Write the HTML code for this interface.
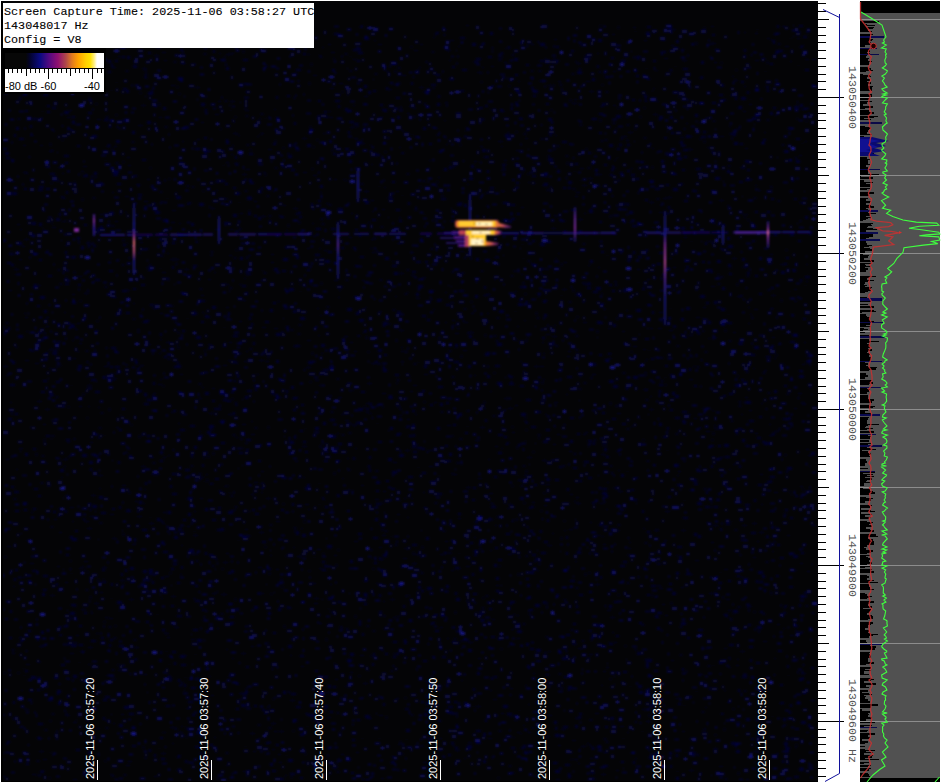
<!DOCTYPE html><html><head><meta charset="utf-8"><style>html,body{margin:0;padding:0;background:#fff;}body{width:941px;height:783px;position:relative;overflow:hidden;}.mono{font-family:"Liberation Mono",monospace;}.sans{font-family:"Liberation Sans",sans-serif;}.ab{position:absolute;white-space:pre;}svg{position:absolute;left:0;top:0;}</style></head><body><svg width="941" height="783" viewBox="0 0 941 783"><defs><filter id="bl" x="-10%" y="-10%" width="120%" height="120%"><feGaussianBlur stdDeviation="0.8"/></filter><filter id="bl2" x="-50%" y="-50%" width="200%" height="200%"><feGaussianBlur stdDeviation="0.8"/></filter></defs><rect x="1" y="1" width="817" height="781" fill="#000"/><rect x="3" y="1" width="815" height="780" fill="#040406"/><defs><clipPath id="sc"><rect x="3" y="1" width="815" height="780"/></clipPath></defs><g clip-path="url(#sc)"><g filter="url(#bl)"><path fill="#05052e" d="M334 179h3v1h-3zM551 121h2v3h-2zM522 244h1v1h-1zM74 271h1v3h-1zM50 595h5v1h-5zM150 578h1v3h-1zM718 274h1v3h-1zM509 376h4v2h-4zM77 145h3v2h-3zM353 180h3v2h-3zM488 738h4v1h-4zM358 48h3v2h-3zM511 107h2v2h-2zM392 261h2v1h-2zM606 211h2v2h-2zM801 721h5v3h-5zM66 220h1v1h-1zM115 373h3v1h-3zM480 516h3v2h-3zM711 190h3v1h-3zM270 555h2v1h-2zM231 570h3v3h-3zM201 734h3v2h-3zM743 382h2v1h-2zM235 506h2v2h-2zM185 469h5v2h-5zM219 53h2v1h-2zM681 622h5v3h-5zM745 148h3v1h-3zM111 598h1v1h-1zM210 483h2v2h-2zM455 348h1v1h-1zM161 758h4v2h-4zM143 503h2v1h-2zM501 191h4v1h-4zM444 552h3v2h-3zM368 351h1v2h-1zM570 494h3v1h-3zM118 259h1v1h-1zM530 609h3v2h-3zM88 647h5v1h-5zM430 299h3v1h-3zM729 269h1v1h-1zM238 375h2v1h-2zM358 80h5v1h-5zM643 286h3v1h-3zM291 638h2v2h-2zM192 186h2v2h-2zM375 361h3v2h-3zM319 248h2v1h-2zM208 279h3v1h-3zM94 172h3v3h-3zM26 331h2v1h-2zM544 183h4v3h-4zM336 762h3v1h-3zM19 727h3v1h-3zM518 573h1v3h-1zM243 771h5v1h-5zM668 496h3v2h-3zM661 228h1v3h-1zM480 146h3v1h-3zM521 485h2v2h-2zM218 101h3v1h-3zM239 534h3v2h-3zM6 528h4v2h-4zM747 169h3v2h-3zM299 284h2v1h-2zM570 587h2v1h-2zM566 155h2v2h-2zM291 329h2v2h-2zM125 196h4v1h-4zM209 45h4v2h-4zM766 561h2v2h-2zM396 434h4v2h-4zM322 47h2v1h-2zM785 509h3v2h-3zM257 136h2v1h-2zM701 136h5v2h-5zM798 65h1v1h-1zM599 221h3v2h-3zM618 26h1v3h-1zM724 690h2v1h-2zM513 715h4v2h-4zM236 708h3v2h-3zM37 737h2v2h-2zM322 223h2v2h-2zM60 634h2v2h-2zM27 635h2v2h-2zM342 478h2v1h-2zM129 599h5v1h-5zM790 341h5v2h-5zM488 56h4v2h-4zM643 439h1v2h-1zM623 372h2v2h-2zM652 91h1v1h-1zM443 530h2v2h-2zM613 105h3v1h-3zM496 590h3v2h-3zM460 202h2v1h-2zM683 149h5v2h-5zM206 474h2v1h-2zM160 313h3v1h-3zM385 66h2v1h-2zM197 639h5v3h-5zM79 406h3v1h-3zM729 659h2v1h-2zM338 443h4v2h-4zM564 520h1v2h-1zM422 315h4v2h-4zM136 40h1v3h-1zM757 541h2v1h-2zM168 558h2v1h-2zM632 225h5v2h-5zM226 67h3v3h-3zM645 338h4v2h-4zM258 460h3v2h-3zM412 134h1v1h-1zM675 66h1v1h-1zM754 346h5v3h-5zM773 541h3v1h-3zM70 653h4v1h-4zM261 187h2v3h-2zM246 351h2v1h-2zM388 197h5v2h-5zM371 363h5v1h-5zM183 655h4v1h-4zM323 775h1v1h-1zM300 655h4v2h-4zM375 73h2v2h-2zM671 71h1v1h-1zM366 336h1v3h-1zM212 400h3v2h-3zM68 678h2v2h-2zM533 776h3v1h-3zM3 70h1v3h-1zM181 545h2v1h-2zM479 107h4v2h-4zM110 292h2v1h-2zM538 296h2v1h-2zM764 232h2v2h-2zM401 361h3v1h-3zM546 739h1v1h-1zM178 173h1v1h-1zM776 753h3v1h-3zM138 125h5v1h-5zM347 458h2v1h-2zM636 56h5v2h-5zM609 380h5v3h-5zM646 359h2v1h-2zM407 113h3v1h-3zM391 670h2v2h-2zM359 620h2v3h-2zM464 702h3v2h-3zM276 333h5v3h-5zM312 775h2v2h-2zM114 678h1v2h-1zM400 500h1v1h-1zM650 328h3v1h-3zM251 434h4v1h-4zM111 64h2v3h-2zM736 229h3v2h-3zM423 492h2v1h-2zM784 150h4v3h-4zM60 283h2v2h-2zM694 385h3v2h-3zM404 498h2v1h-2zM578 763h2v1h-2zM668 153h5v2h-5zM439 720h2v2h-2zM674 325h2v3h-2zM149 264h2v2h-2zM159 238h3v3h-3zM564 676h5v2h-5zM452 712h1v3h-1zM720 528h2v2h-2zM349 121h5v2h-5zM800 563h3v1h-3zM353 457h2v3h-2zM299 324h2v2h-2zM518 303h5v3h-5zM211 695h3v1h-3zM653 114h5v1h-5zM570 440h3v3h-3zM310 136h1v1h-1zM559 651h3v3h-3zM434 128h4v1h-4zM192 456h1v2h-1zM434 614h4v2h-4zM644 40h3v1h-3zM688 149h5v1h-5zM127 157h3v1h-3zM14 87h1v3h-1zM321 344h4v3h-4zM501 648h1v2h-1zM806 605h2v2h-2zM639 691h4v3h-4zM319 623h3v1h-3zM293 730h1v2h-1zM435 186h3v1h-3zM563 726h5v2h-5zM196 242h2v1h-2zM415 554h5v1h-5zM508 408h5v1h-5zM356 312h3v3h-3zM583 243h2v2h-2zM390 110h1v1h-1zM659 116h4v3h-4zM63 591h1v1h-1zM528 751h4v2h-4zM696 330h3v3h-3zM671 132h3v2h-3zM402 152h2v2h-2zM646 399h2v2h-2zM151 474h5v1h-5zM424 277h2v1h-2zM306 367h5v1h-5zM114 350h3v2h-3zM445 292h2v1h-2zM303 172h4v1h-4zM522 374h3v1h-3zM811 564h2v1h-2zM751 532h5v2h-5zM210 35h1v3h-1zM741 81h3v2h-3zM657 529h1v1h-1zM784 513h2v2h-2zM591 634h5v1h-5zM459 553h1v1h-1zM232 658h2v1h-2zM259 593h5v1h-5zM655 615h3v3h-3zM515 311h1v1h-1zM614 642h3v1h-3zM56 396h2v2h-2zM331 435h5v3h-5zM532 175h4v2h-4zM435 704h4v1h-4zM546 216h1v2h-1zM519 710h1v1h-1zM44 60h5v3h-5zM39 661h1v2h-1zM16 469h2v1h-2zM315 380h4v1h-4zM303 441h3v2h-3zM756 114h4v3h-4zM468 649h4v3h-4zM320 56h2v2h-2zM527 584h3v3h-3zM364 191h5v1h-5zM224 327h1v1h-1zM71 645h5v2h-5zM66 554h3v2h-3zM286 555h1v2h-1zM648 750h4v1h-4zM512 432h3v1h-3zM391 488h4v2h-4zM612 418h4v2h-4zM766 536h3v2h-3zM552 336h5v1h-5zM336 234h3v1h-3zM532 554h4v2h-4zM13 717h1v3h-1zM767 119h2v2h-2zM79 343h3v1h-3zM433 671h2v3h-2zM526 237h3v1h-3zM64 670h3v3h-3zM13 27h2v3h-2zM151 185h3v3h-3zM365 307h2v1h-2zM104 621h1v2h-1zM641 419h1v1h-1zM408 621h5v1h-5zM638 269h2v1h-2zM469 335h3v3h-3zM601 251h3v2h-3zM731 521h1v1h-1zM177 391h3v1h-3zM300 430h3v2h-3zM399 220h3v2h-3zM449 60h2v1h-2zM162 272h4v1h-4zM481 270h2v2h-2zM742 439h3v3h-3zM453 626h2v3h-2zM279 778h5v2h-5zM738 606h2v2h-2zM240 353h2v1h-2zM373 537h5v2h-5zM738 343h1v1h-1zM736 433h2v2h-2zM28 699h4v2h-4zM413 385h4v1h-4zM44 439h1v3h-1zM236 608h3v3h-3zM448 711h4v3h-4zM700 138h1v2h-1zM633 251h2v3h-2zM646 665h3v3h-3zM799 155h3v1h-3zM802 677h2v3h-2zM63 197h2v2h-2zM209 676h2v1h-2zM726 523h4v2h-4zM250 31h3v2h-3zM659 384h4v2h-4zM727 170h3v3h-3zM475 440h5v1h-5zM299 37h2v2h-2zM64 312h2v1h-2zM319 483h1v1h-1zM482 607h2v2h-2zM503 219h5v3h-5zM83 166h4v1h-4zM407 173h2v2h-2zM656 563h5v1h-5zM739 342h4v3h-4zM191 687h5v2h-5zM262 270h1v1h-1zM620 620h4v1h-4zM226 765h2v1h-2zM628 548h3v1h-3zM171 412h2v1h-2zM579 716h2v3h-2zM434 402h3v1h-3zM408 292h1v1h-1zM210 586h4v1h-4zM734 142h4v3h-4zM199 601h3v1h-3zM797 658h1v2h-1zM473 332h1v1h-1zM364 127h2v3h-2zM620 140h1v1h-1zM498 57h5v1h-5zM638 685h4v3h-4zM490 187h4v2h-4zM628 554h1v2h-1zM150 304h3v2h-3zM246 169h4v1h-4zM243 382h2v1h-2zM690 489h3v2h-3zM793 334h2v3h-2zM600 106h3v1h-3zM72 521h2v1h-2zM245 746h1v1h-1zM135 640h1v1h-1zM592 374h4v1h-4zM29 349h3v2h-3zM631 752h4v2h-4zM95 391h5v2h-5zM554 721h3v3h-3zM105 696h5v2h-5zM212 593h5v1h-5zM758 190h3v1h-3zM729 273h3v2h-3zM355 423h3v1h-3zM30 135h4v1h-4zM663 436h4v2h-4zM645 254h1v2h-1zM729 469h2v1h-2zM336 460h4v2h-4zM307 726h1v1h-1zM52 349h1v1h-1zM502 164h3v2h-3zM561 537h1v3h-1zM709 445h5v2h-5zM805 59h4v1h-4zM392 265h5v2h-5zM148 92h5v3h-5zM212 565h2v2h-2zM179 181h5v2h-5zM670 69h2v2h-2zM156 31h4v1h-4zM536 701h2v3h-2zM264 272h2v2h-2zM654 530h5v1h-5zM737 478h3v2h-3zM135 658h2v3h-2zM684 233h2v1h-2zM459 413h3v3h-3zM476 742h5v2h-5zM487 205h1v2h-1zM761 230h3v3h-3zM791 495h1v1h-1zM81 609h5v1h-5zM93 245h3v2h-3zM700 77h2v2h-2zM392 471h5v3h-5zM147 399h5v2h-5zM458 233h2v1h-2zM76 635h3v1h-3zM726 599h4v1h-4zM267 357h3v1h-3zM684 261h3v1h-3zM713 120h2v2h-2zM191 465h2v2h-2zM786 257h3v2h-3zM616 128h1v2h-1zM158 697h2v1h-2zM361 485h3v1h-3zM37 65h3v3h-3zM364 103h2v1h-2zM494 335h2v2h-2zM247 144h2v2h-2zM557 145h2v2h-2zM585 573h1v3h-1zM205 315h3v3h-3zM587 743h2v1h-2zM437 427h3v3h-3zM586 148h1v3h-1zM66 276h1v3h-1zM475 631h2v1h-2zM154 776h3v1h-3zM73 642h4v1h-4zM507 713h5v2h-5zM699 629h2v2h-2zM245 529h3v1h-3zM19 138h5v2h-5zM622 331h3v1h-3zM637 58h2v2h-2zM280 216h4v2h-4zM45 409h5v1h-5zM343 179h2v1h-2zM627 428h2v2h-2zM521 646h2v1h-2zM12 25h5v1h-5zM141 284h4v2h-4zM749 646h4v2h-4zM659 312h4v1h-4zM729 393h4v2h-4zM66 191h2v3h-2zM798 393h4v1h-4zM415 136h4v2h-4zM330 419h5v2h-5zM655 188h5v2h-5zM424 103h2v2h-2zM127 290h3v1h-3zM149 569h4v3h-4zM686 266h3v2h-3zM590 771h2v1h-2zM37 689h3v2h-3zM83 393h1v3h-1zM145 482h2v3h-2zM43 575h5v2h-5zM34 253h5v1h-5zM519 299h3v2h-3zM412 424h3v3h-3zM728 657h3v1h-3zM197 139h3v1h-3zM201 103h4v3h-4zM26 764h3v1h-3zM213 452h1v3h-1zM543 601h2v3h-2zM200 752h2v3h-2zM450 162h2v1h-2zM748 624h3v2h-3zM807 113h3v1h-3zM589 572h1v2h-1zM576 497h3v1h-3zM212 388h3v1h-3zM483 733h3v3h-3zM232 674h4v1h-4zM207 25h1v2h-1zM656 616h3v2h-3zM169 655h3v2h-3zM637 652h3v3h-3zM58 702h3v3h-3zM106 116h2v2h-2zM345 221h1v1h-1zM119 724h4v3h-4zM141 466h5v1h-5zM303 477h2v1h-2zM310 381h1v2h-1zM774 358h2v1h-2zM84 569h2v1h-2zM324 460h4v2h-4zM553 149h3v1h-3zM57 690h4v3h-4zM257 374h2v1h-2zM714 425h2v1h-2zM71 573h1v1h-1zM525 729h2v2h-2zM105 286h2v2h-2zM474 375h2v1h-2zM689 368h2v3h-2zM680 626h2v2h-2zM150 517h1v1h-1zM670 116h3v3h-3zM144 403h5v2h-5zM783 418h5v2h-5zM486 294h5v1h-5zM682 411h5v2h-5zM33 508h3v2h-3zM473 593h4v2h-4zM439 475h1v1h-1zM275 394h3v2h-3zM220 128h1v2h-1zM649 350h1v1h-1zM242 535h4v3h-4zM19 637h3v1h-3zM414 50h4v1h-4zM498 263h1v2h-1zM224 222h5v2h-5zM776 354h1v2h-1zM791 190h2v1h-2zM731 420h2v2h-2zM61 196h2v2h-2zM602 488h5v2h-5zM278 754h3v1h-3zM109 42h2v1h-2zM381 559h3v1h-3zM609 284h3v2h-3zM711 286h4v1h-4zM61 664h4v2h-4zM338 34h3v2h-3zM768 263h2v2h-2zM275 140h1v3h-1zM468 365h3v3h-3zM712 43h4v1h-4zM612 572h3v3h-3zM74 29h5v1h-5zM257 29h2v1h-2zM731 267h1v1h-1zM93 228h2v2h-2zM537 382h2v2h-2zM273 191h2v1h-2zM99 92h3v1h-3zM144 38h2v3h-2zM537 570h2v1h-2zM744 49h2v3h-2zM191 234h2v2h-2zM736 722h4v2h-4zM326 116h2v1h-2zM801 767h2v3h-2zM790 491h1v2h-1zM679 373h3v3h-3zM406 739h1v1h-1zM789 711h2v3h-2zM419 198h2v1h-2zM439 749h2v2h-2zM251 494h3v1h-3zM761 762h3v2h-3zM505 134h5v3h-5zM715 177h5v3h-5zM262 541h4v2h-4zM475 244h4v2h-4zM533 95h3v2h-3zM684 257h2v1h-2zM227 400h4v2h-4zM655 751h1v2h-1zM390 599h5v1h-5zM161 598h2v1h-2zM268 643h2v1h-2zM528 668h3v1h-3zM732 633h4v1h-4zM575 718h3v1h-3zM178 679h2v3h-2zM787 763h2v1h-2zM422 390h3v2h-3zM168 675h2v2h-2zM205 508h3v3h-3zM479 611h3v1h-3zM607 610h4v1h-4zM494 476h3v2h-3zM335 679h3v1h-3zM269 42h2v2h-2zM297 531h2v2h-2zM200 239h1v1h-1zM236 249h1v2h-1zM94 177h3v1h-3zM511 772h3v2h-3zM42 111h1v1h-1zM25 360h4v1h-4zM447 358h3v2h-3zM241 519h1v1h-1zM158 384h4v1h-4zM511 204h4v2h-4zM576 293h5v3h-5zM87 528h5v1h-5zM603 544h3v1h-3zM798 161h1v2h-1zM119 645h5v2h-5zM102 61h3v2h-3zM673 289h2v2h-2zM50 173h5v2h-5zM556 779h4v1h-4zM388 280h2v3h-2zM738 107h4v2h-4zM515 291h2v1h-2zM231 510h5v1h-5zM65 251h2v3h-2zM323 723h1v2h-1zM783 628h2v1h-2zM397 616h3v1h-3zM32 350h2v2h-2zM652 227h3v1h-3zM253 751h3v1h-3zM733 708h1v2h-1zM712 34h3v2h-3zM730 628h3v1h-3zM210 208h5v1h-5zM694 418h3v1h-3zM370 403h2v3h-2zM771 40h4v1h-4zM146 267h5v1h-5zM775 115h2v1h-2zM318 100h3v2h-3zM161 201h2v2h-2zM812 84h2v3h-2zM175 259h4v1h-4zM6 743h2v2h-2zM346 279h2v2h-2zM413 451h4v2h-4zM89 97h1v3h-1zM510 601h5v2h-5zM606 509h2v1h-2zM595 761h1v1h-1zM378 441h4v2h-4zM451 473h2v1h-2zM120 414h1v1h-1zM328 597h5v3h-5zM662 604h3v1h-3zM212 519h4v2h-4zM637 309h4v3h-4zM25 453h3v3h-3zM282 586h1v2h-1zM381 226h2v2h-2zM452 320h3v1h-3zM659 212h4v1h-4zM65 715h5v1h-5zM180 80h3v2h-3zM794 408h3v1h-3zM264 45h3v2h-3zM803 36h4v2h-4zM628 262h2v1h-2zM332 149h1v3h-1zM374 40h2v1h-2zM412 271h4v2h-4zM476 258h3v3h-3zM616 505h3v2h-3zM72 120h1v1h-1zM445 445h3v2h-3zM383 322h5v3h-5zM635 758h2v1h-2zM547 682h2v1h-2zM119 371h2v2h-2zM372 252h3v1h-3zM681 227h4v3h-4zM486 227h3v1h-3zM677 546h5v2h-5zM116 162h2v2h-2zM171 85h4v1h-4zM276 96h2v3h-2zM26 664h4v1h-4zM721 324h4v2h-4zM8 85h4v2h-4zM228 312h2v3h-2zM714 337h3v1h-3zM787 749h2v2h-2zM358 533h4v2h-4zM257 386h3v1h-3zM359 675h1v2h-1zM610 617h5v1h-5zM697 470h5v2h-5zM328 251h4v2h-4zM168 511h3v3h-3zM664 540h3v1h-3zM207 479h1v3h-1zM164 732h2v1h-2zM54 227h2v1h-2zM261 113h2v2h-2zM3 332h3v1h-3zM505 48h2v1h-2zM323 422h3v3h-3zM137 332h3v1h-3zM405 697h1v2h-1zM296 69h5v2h-5zM561 729h5v1h-5zM751 682h1v2h-1zM390 427h3v3h-3zM115 625h1v2h-1zM438 177h2v1h-2zM67 129h5v1h-5zM375 154h5v2h-5zM143 321h5v2h-5zM102 581h4v2h-4zM62 139h1v2h-1zM299 216h3v2h-3zM656 682h3v1h-3zM531 532h2v1h-2zM327 545h5v3h-5zM411 498h2v1h-2zM668 317h3v3h-3zM799 370h3v2h-3zM191 583h4v1h-4zM232 361h5v2h-5zM228 414h3v1h-3zM649 409h5v1h-5zM236 437h2v1h-2zM519 117h2v2h-2zM161 577h3v2h-3zM682 668h2v3h-2zM201 321h3v2h-3zM515 405h3v1h-3zM182 141h2v1h-2zM217 529h4v2h-4zM649 202h5v1h-5zM80 93h3v1h-3zM495 446h3v1h-3zM144 76h3v2h-3zM315 670h3v2h-3zM664 542h1v2h-1zM809 466h2v1h-2zM602 412h3v2h-3zM70 536h3v3h-3zM445 541h3v1h-3zM616 505h5v2h-5zM583 434h3v1h-3zM397 379h2v2h-2zM767 90h2v2h-2zM149 523h5v1h-5zM160 339h2v1h-2zM697 502h5v3h-5zM168 237h1v1h-1zM686 435h1v1h-1zM122 56h3v2h-3zM71 324h3v2h-3zM123 244h3v2h-3zM195 678h5v2h-5zM640 116h1v2h-1zM457 462h2v2h-2zM743 111h3v1h-3zM530 156h2v2h-2zM19 448h4v1h-4zM552 533h2v1h-2zM229 342h3v1h-3zM377 423h1v1h-1zM426 702h2v3h-2zM439 362h2v2h-2zM245 535h5v2h-5zM553 444h3v1h-3zM392 181h3v2h-3zM148 591h2v2h-2zM47 105h3v2h-3zM757 437h4v2h-4zM241 298h2v2h-2zM396 261h3v2h-3zM739 405h2v2h-2zM648 688h2v2h-2zM504 62h3v1h-3zM799 25h4v2h-4zM642 709h5v1h-5zM410 376h1v1h-1zM750 222h3v1h-3zM293 719h4v3h-4zM677 771h1v1h-1zM331 228h5v2h-5zM353 49h4v2h-4zM528 303h2v1h-2zM244 278h2v1h-2zM509 383h5v2h-5zM62 221h4v1h-4zM490 217h1v2h-1zM283 382h1v2h-1zM155 410h2v2h-2zM349 432h2v2h-2zM770 254h3v1h-3zM328 395h4v1h-4zM311 583h5v1h-5zM679 284h2v1h-2zM582 302h3v1h-3zM475 237h4v1h-4zM31 676h4v3h-4zM501 448h2v1h-2zM601 774h5v1h-5zM142 529h5v2h-5zM433 309h2v1h-2zM473 688h2v3h-2zM223 165h1v1h-1zM323 258h1v1h-1zM311 771h4v1h-4zM700 634h3v2h-3zM124 774h2v2h-2zM135 362h3v2h-3zM153 462h2v2h-2zM626 117h3v1h-3zM119 429h3v2h-3zM249 484h2v2h-2zM122 264h2v2h-2zM64 459h4v1h-4zM738 772h1v3h-1zM353 247h3v2h-3zM629 211h4v3h-4zM747 91h2v3h-2zM353 59h3v1h-3zM703 307h3v1h-3zM721 474h2v3h-2zM180 429h5v2h-5zM540 366h4v1h-4zM474 550h3v3h-3zM184 684h2v3h-2zM692 752h4v2h-4zM566 536h2v3h-2zM119 611h1v1h-1zM352 490h1v2h-1zM622 683h4v2h-4zM47 111h3v2h-3zM21 690h2v1h-2zM64 213h2v2h-2zM329 204h2v2h-2zM415 209h2v2h-2zM567 356h3v1h-3zM627 124h2v2h-2zM420 44h3v1h-3zM725 456h5v2h-5zM151 305h4v1h-4zM571 629h2v2h-2zM544 314h3v3h-3zM712 26h2v1h-2zM743 267h5v1h-5zM7 262h4v2h-4zM752 523h5v1h-5zM132 726h3v2h-3zM49 151h3v1h-3zM80 448h1v3h-1zM229 271h2v2h-2zM310 714h5v3h-5zM742 525h5v1h-5zM381 650h3v1h-3zM516 131h1v2h-1zM421 572h2v2h-2zM778 43h2v2h-2zM305 285h1v2h-1zM351 772h3v2h-3zM575 612h5v1h-5zM28 580h3v3h-3zM452 376h2v2h-2zM608 328h3v1h-3zM97 755h3v1h-3zM775 52h3v2h-3zM64 466h2v1h-2zM238 135h2v1h-2zM601 140h2v2h-2zM164 356h3v2h-3zM573 188h2v2h-2zM809 171h2v1h-2zM342 91h1v2h-1zM187 498h4v2h-4zM76 618h1v3h-1zM30 563h4v1h-4zM355 448h2v1h-2zM637 222h3v2h-3zM7 280h2v3h-2zM756 662h4v2h-4zM39 186h5v2h-5zM276 569h3v1h-3zM126 300h1v2h-1zM547 669h3v1h-3zM545 674h4v1h-4zM771 263h2v1h-2zM352 425h5v1h-5zM684 156h3v2h-3zM314 557h1v1h-1zM590 260h3v3h-3zM407 269h2v2h-2zM350 672h3v1h-3zM524 502h1v2h-1zM596 624h5v3h-5zM3 776h3v1h-3zM269 727h2v2h-2zM272 393h2v2h-2zM546 95h4v1h-4zM590 329h1v1h-1zM393 309h2v2h-2zM121 714h3v1h-3zM423 127h3v3h-3zM214 272h2v1h-2zM618 107h1v2h-1zM606 456h3v2h-3zM656 70h2v1h-2zM585 432h3v1h-3zM308 132h3v2h-3zM472 43h4v3h-4zM233 434h2v2h-2zM149 572h3v3h-3zM293 409h3v2h-3zM531 263h2v2h-2zM485 105h3v2h-3zM474 161h3v1h-3zM738 575h2v2h-2zM55 350h3v1h-3zM224 486h2v1h-2zM334 555h3v1h-3zM69 110h3v1h-3zM110 258h2v1h-2zM767 481h5v2h-5zM338 732h1v1h-1zM572 73h2v2h-2zM252 509h3v2h-3zM642 731h1v1h-1zM182 293h3v2h-3zM578 648h5v1h-5zM393 641h4v2h-4zM599 354h3v2h-3zM156 45h5v3h-5zM97 320h1v2h-1zM32 570h5v1h-5zM514 270h2v2h-2zM311 720h2v1h-2zM603 671h3v1h-3zM698 332h2v3h-2zM702 330h2v2h-2zM108 144h2v3h-2zM502 427h1v2h-1zM490 391h2v1h-2zM671 660h3v1h-3zM171 222h4v1h-4zM424 374h4v1h-4zM597 746h2v1h-2zM474 602h2v2h-2zM555 258h2v1h-2zM492 85h2v2h-2zM100 522h2v2h-2zM215 559h3v1h-3zM485 156h4v2h-4zM674 47h4v2h-4zM265 546h1v2h-1zM558 253h2v1h-2zM109 126h2v2h-2zM516 150h3v1h-3zM73 722h4v1h-4zM376 583h2v1h-2zM800 595h4v3h-4zM17 224h3v1h-3zM577 551h4v3h-4zM73 358h3v1h-3zM749 104h3v1h-3zM418 467h1v1h-1zM143 746h1v3h-1zM448 754h3v2h-3zM536 312h1v3h-1zM43 380h4v2h-4zM126 312h4v2h-4zM442 456h1v2h-1zM153 382h2v3h-2zM88 99h4v2h-4zM24 239h5v1h-5zM446 50h5v1h-5zM449 166h3v3h-3zM564 530h2v1h-2zM670 308h1v1h-1zM666 184h3v2h-3zM162 523h3v1h-3zM527 337h2v1h-2zM652 166h1v3h-1zM728 580h3v2h-3zM487 352h3v3h-3zM711 542h3v1h-3zM729 618h2v1h-2zM678 471h3v1h-3zM811 525h5v1h-5zM490 109h2v1h-2zM79 625h3v2h-3zM305 504h4v1h-4zM639 622h3v2h-3zM102 567h5v1h-5zM607 255h1v1h-1zM783 718h3v3h-3zM364 406h1v3h-1zM555 734h5v3h-5zM747 272h3v2h-3zM512 426h1v2h-1zM497 470h4v2h-4zM681 530h5v1h-5zM359 319h5v3h-5zM172 236h1v1h-1zM159 117h3v1h-3zM116 140h4v3h-4zM616 115h5v3h-5zM424 214h1v1h-1zM287 95h3v2h-3zM79 568h4v1h-4zM576 63h5v1h-5zM38 738h5v1h-5zM773 295h1v1h-1zM324 111h3v2h-3zM542 185h2v1h-2zM601 293h2v1h-2zM773 41h2v3h-2zM574 99h3v1h-3zM606 741h2v2h-2zM572 662h3v1h-3zM411 46h1v2h-1zM555 728h2v2h-2zM589 210h4v3h-4zM457 328h3v1h-3zM133 288h3v2h-3zM116 114h1v2h-1zM760 474h3v1h-3zM122 485h4v1h-4zM592 78h3v3h-3zM326 692h5v1h-5zM743 628h3v1h-3zM605 726h3v2h-3zM249 153h4v2h-4zM523 363h1v1h-1zM245 691h3v2h-3zM413 108h3v1h-3zM305 713h3v1h-3zM220 420h5v3h-5zM347 659h5v3h-5zM403 558h4v1h-4zM523 745h3v3h-3zM805 69h4v2h-4zM268 445h2v2h-2zM617 450h3v2h-3zM787 393h2v2h-2zM676 445h2v1h-2zM258 738h3v1h-3zM671 45h3v1h-3zM770 186h2v1h-2zM43 589h4v1h-4zM181 63h5v1h-5zM71 188h4v1h-4zM132 544h4v1h-4zM708 241h5v1h-5zM165 576h4v1h-4zM12 192h5v3h-5zM195 585h3v2h-3zM724 648h3v1h-3zM118 56h3v1h-3zM614 160h2v1h-2zM799 768h5v3h-5zM94 330h5v1h-5zM643 349h3v1h-3zM609 144h4v3h-4zM149 749h2v3h-2zM393 462h4v1h-4zM540 270h1v3h-1zM695 223h3v1h-3zM390 82h3v2h-3zM393 84h4v1h-4zM319 385h4v1h-4zM71 644h3v1h-3zM623 561h4v2h-4zM584 382h2v2h-2zM46 435h4v2h-4zM756 580h2v3h-2zM544 174h3v3h-3zM714 62h3v1h-3zM473 706h1v1h-1zM392 756h2v2h-2zM624 288h2v3h-2zM599 132h3v2h-3zM418 594h3v1h-3zM774 390h3v3h-3zM326 369h3v2h-3zM246 115h2v2h-2zM54 519h3v1h-3zM214 737h2v1h-2zM111 167h3v1h-3zM612 530h5v2h-5zM766 86h3v2h-3zM130 34h3v1h-3zM399 330h5v1h-5zM181 726h2v1h-2zM742 168h3v1h-3zM283 691h3v3h-3zM574 759h4v1h-4zM258 592h2v3h-2zM541 510h1v2h-1zM446 144h2v1h-2zM428 738h5v2h-5zM725 778h2v2h-2zM406 426h3v2h-3zM238 540h1v1h-1zM301 235h3v2h-3zM154 203h2v2h-2zM771 308h3v1h-3zM363 683h5v1h-5zM384 628h2v2h-2zM233 412h2v3h-2zM76 719h1v1h-1zM320 520h2v1h-2zM375 499h4v1h-4zM661 160h3v3h-3zM24 313h2v1h-2zM230 427h2v1h-2zM745 179h5v2h-5zM749 569h3v1h-3zM542 342h2v1h-2zM41 339h3v2h-3zM489 608h3v2h-3zM798 240h3v2h-3zM622 609h1v3h-1zM533 90h5v3h-5zM184 269h5v1h-5zM614 601h4v2h-4zM764 132h2v1h-2zM682 420h3v2h-3zM747 275h2v2h-2zM130 567h4v3h-4zM723 614h2v1h-2zM372 219h4v2h-4zM602 103h3v3h-3zM789 586h4v2h-4zM432 656h3v2h-3zM245 443h3v1h-3zM137 516h5v1h-5zM260 134h1v1h-1zM68 406h1v2h-1zM688 572h2v2h-2zM596 535h4v1h-4zM52 352h4v2h-4zM162 732h1v1h-1zM38 677h3v3h-3zM576 335h2v2h-2zM56 218h4v3h-4zM570 99h1v3h-1zM705 506h5v2h-5zM600 41h2v1h-2zM334 662h1v1h-1zM569 143h2v2h-2zM504 160h3v1h-3zM35 286h2v3h-2zM293 397h5v2h-5zM201 122h3v1h-3zM111 347h5v2h-5zM794 776h5v2h-5zM287 153h3v1h-3zM659 118h2v3h-2zM47 250h1v2h-1zM661 380h2v2h-2zM49 777h1v2h-1zM774 492h4v1h-4zM421 745h2v2h-2zM104 366h4v1h-4zM206 667h3v3h-3zM781 214h3v2h-3zM635 721h2v2h-2zM204 350h2v1h-2zM721 713h3v1h-3zM313 146h1v2h-1zM188 497h5v2h-5zM360 655h4v1h-4zM101 637h3v2h-3zM784 742h4v3h-4zM599 113h4v2h-4zM340 626h2v2h-2zM177 205h2v1h-2zM24 188h3v2h-3zM86 604h2v2h-2zM689 136h3v1h-3zM393 656h3v2h-3zM733 614h1v1h-1zM312 223h2v1h-2zM233 37h2v2h-2zM58 179h1v3h-1zM771 287h3v2h-3zM272 749h3v1h-3zM483 597h1v2h-1zM100 592h3v1h-3zM747 606h2v2h-2zM75 329h3v1h-3zM452 80h1v1h-1zM644 107h1v2h-1zM231 35h2v1h-2zM642 288h3v2h-3zM447 425h4v1h-4zM666 155h4v1h-4zM357 719h3v2h-3zM355 265h3v2h-3zM379 715h4v1h-4zM171 605h3v2h-3zM658 687h4v1h-4zM784 263h3v2h-3zM519 720h1v1h-1zM24 509h3v2h-3zM416 445h1v1h-1zM458 513h3v2h-3zM51 526h2v2h-2zM444 120h2v1h-2zM776 50h4v3h-4zM477 672h3v3h-3zM87 571h1v2h-1zM88 503h4v1h-4zM417 447h5v2h-5zM520 497h4v3h-4zM155 42h5v1h-5zM191 762h3v2h-3zM452 271h2v2h-2zM719 766h4v1h-4zM51 150h3v1h-3zM467 745h5v3h-5zM782 760h2v3h-2zM383 325h2v2h-2zM664 137h3v2h-3zM161 541h3v3h-3zM137 329h3v1h-3zM555 60h4v2h-4zM369 456h2v3h-2zM760 611h3v2h-3zM472 499h3v2h-3zM327 217h3v2h-3zM762 575h3v3h-3zM242 285h4v2h-4zM253 342h2v3h-2zM521 207h3v1h-3zM747 401h4v3h-4zM440 648h2v2h-2zM563 187h3v2h-3zM752 240h3v2h-3zM187 526h3v1h-3zM32 774h4v1h-4zM221 442h4v2h-4zM492 519h2v1h-2zM440 403h3v3h-3zM239 222h1v1h-1zM669 583h3v2h-3zM58 167h4v1h-4zM177 582h3v2h-3zM613 167h2v2h-2zM579 68h2v2h-2zM125 452h3v1h-3zM160 379h2v1h-2zM576 503h5v1h-5zM735 744h3v2h-3zM450 365h1v1h-1zM696 168h5v2h-5zM530 571h4v3h-4zM429 290h5v2h-5zM807 506h5v2h-5zM88 751h4v3h-4zM597 65h2v3h-2zM736 69h1v2h-1zM447 189h3v2h-3zM432 622h3v2h-3zM794 264h3v1h-3zM232 447h1v2h-1zM611 717h3v3h-3zM809 231h4v1h-4zM294 527h2v2h-2zM200 477h4v1h-4zM123 119h3v3h-3zM566 80h4v1h-4zM347 308h5v3h-5zM319 504h1v1h-1zM362 280h3v1h-3zM812 612h2v2h-2zM312 352h1v3h-1zM697 329h2v1h-2zM12 653h3v1h-3zM432 51h2v2h-2zM484 401h1v3h-1zM778 111h2v1h-2zM560 220h5v2h-5zM400 741h1v3h-1zM276 360h3v3h-3zM396 97h4v2h-4zM177 362h2v2h-2zM100 214h4v1h-4zM465 322h3v1h-3zM797 296h2v2h-2zM232 398h1v2h-1zM329 111h2v1h-2zM543 300h3v3h-3zM165 126h2v2h-2zM604 448h3v3h-3zM517 630h5v3h-5zM756 719h3v2h-3zM375 518h3v3h-3zM61 64h2v2h-2zM517 446h1v3h-1zM349 160h3v3h-3zM402 195h1v1h-1zM547 747h2v1h-2zM407 517h2v1h-2zM171 568h3v2h-3zM684 705h1v1h-1zM598 745h3v3h-3zM309 284h3v1h-3zM395 544h2v2h-2zM293 547h2v1h-2zM138 390h4v2h-4zM543 379h2v1h-2zM94 774h2v2h-2zM446 304h4v2h-4zM802 364h3v1h-3zM57 566h3v1h-3zM801 552h3v2h-3zM118 664h1v2h-1zM600 241h3v1h-3zM704 488h2v2h-2zM268 706h1v3h-1zM394 653h1v2h-1zM475 521h3v2h-3zM460 144h1v2h-1zM715 576h3v2h-3zM44 310h3v3h-3zM11 159h3v3h-3zM331 411h2v2h-2zM92 135h5v3h-5zM725 329h1v3h-1zM397 116h3v3h-3zM235 402h2v2h-2zM196 336h5v2h-5zM577 71h5v3h-5zM536 660h5v2h-5zM160 682h4v1h-4zM544 440h1v2h-1zM193 316h1v1h-1zM83 317h3v3h-3zM300 317h5v3h-5zM3 239h3v3h-3zM333 153h3v2h-3zM739 106h3v2h-3zM671 29h5v1h-5zM244 109h3v1h-3zM44 82h5v1h-5zM580 124h2v2h-2zM283 503h1v2h-1zM657 263h4v2h-4zM234 257h2v2h-2zM146 396h1v1h-1zM737 659h2v1h-2zM702 408h2v1h-2zM304 519h2v1h-2zM528 732h3v1h-3zM556 594h3v3h-3zM667 267h3v1h-3zM806 449h3v1h-3zM693 190h4v2h-4zM777 25h2v3h-2zM341 247h3v2h-3zM106 675h3v1h-3zM516 339h1v2h-1zM319 568h3v1h-3zM652 148h2v1h-2zM170 485h2v3h-2zM111 380h4v1h-4zM682 169h3v2h-3zM498 559h4v2h-4zM759 532h5v1h-5zM795 747h2v1h-2zM630 686h1v1h-1zM398 67h2v2h-2zM384 296h2v1h-2zM215 478h4v2h-4zM444 168h3v3h-3zM429 143h3v2h-3zM230 616h4v2h-4zM517 615h2v1h-2zM396 698h3v1h-3zM339 290h2v1h-2zM266 361h3v1h-3zM457 414h4v1h-4zM682 30h2v1h-2zM667 450h1v1h-1zM179 162h4v3h-4zM546 636h2v2h-2zM265 65h2v3h-2zM540 60h4v2h-4zM33 448h3v2h-3zM199 398h3v1h-3zM76 369h4v1h-4zM582 640h2v2h-2zM455 333h4v1h-4zM612 569h2v2h-2zM90 596h1v3h-1zM302 601h3v2h-3zM652 311h2v3h-2zM369 670h1v1h-1zM214 408h5v2h-5zM222 568h1v2h-1zM273 698h1v2h-1zM566 552h2v3h-2zM129 455h3v2h-3zM542 460h5v1h-5zM360 256h4v2h-4zM627 203h2v3h-2zM159 43h2v2h-2zM418 362h1v1h-1zM591 164h3v1h-3zM282 165h2v3h-2zM204 152h3v2h-3zM173 410h3v2h-3zM5 152h4v3h-4zM11 264h3v2h-3zM780 684h3v2h-3zM546 429h4v2h-4zM751 676h3v3h-3zM411 275h4v1h-4zM308 509h2v1h-2zM426 232h2v1h-2zM474 61h5v2h-5zM24 85h4v3h-4zM143 581h2v3h-2zM800 279h2v3h-2zM248 255h3v1h-3zM681 183h2v2h-2zM431 248h2v2h-2zM609 353h3v1h-3zM188 171h3v1h-3zM401 130h3v1h-3zM601 303h3v2h-3zM46 188h4v2h-4zM300 291h1v1h-1zM245 59h3v2h-3zM94 455h5v2h-5zM254 385h5v2h-5zM752 225h4v3h-4zM710 271h3v2h-3zM212 306h4v3h-4zM114 170h5v3h-5zM632 99h3v2h-3zM358 335h2v2h-2zM576 587h2v2h-2zM160 290h2v1h-2zM686 307h4v3h-4zM309 129h5v2h-5zM672 326h4v1h-4zM37 775h5v1h-5zM435 630h4v2h-4zM181 664h5v2h-5zM123 239h1v3h-1zM184 126h5v3h-5zM70 560h1v2h-1zM599 524h3v2h-3zM296 73h1v2h-1zM618 594h1v2h-1zM54 333h4v1h-4zM83 175h5v2h-5zM194 643h4v2h-4zM449 552h2v2h-2zM138 194h4v2h-4zM102 377h4v1h-4zM362 633h2v3h-2zM515 234h2v3h-2zM663 51h3v2h-3zM106 146h5v1h-5zM202 464h2v3h-2zM395 296h2v1h-2zM758 765h2v1h-2zM507 442h2v2h-2zM594 439h2v2h-2zM575 196h3v1h-3zM617 148h3v2h-3zM531 44h3v1h-3zM477 72h5v1h-5zM602 492h5v3h-5zM683 421h3v3h-3zM767 689h4v1h-4zM370 144h1v1h-1zM268 612h3v3h-3zM516 182h3v2h-3zM781 366h2v1h-2zM538 714h4v2h-4zM191 639h4v1h-4zM177 615h5v2h-5zM528 596h3v3h-3zM778 200h2v2h-2zM749 410h3v1h-3zM120 580h5v1h-5zM357 60h3v2h-3zM409 435h3v2h-3zM647 531h3v2h-3zM722 287h3v3h-3zM723 99h3v2h-3zM790 427h2v1h-2zM649 292h2v3h-2zM229 473h2v2h-2zM635 128h1v2h-1zM540 530h2v3h-2zM129 713h5v2h-5zM33 571h2v1h-2zM121 573h2v3h-2zM258 217h3v3h-3zM791 334h2v1h-2zM364 96h4v1h-4zM48 698h5v3h-5zM811 452h4v3h-4zM677 475h2v1h-2zM614 281h3v1h-3zM160 460h3v2h-3zM437 103h3v3h-3zM803 489h1v2h-1zM396 383h2v1h-2zM655 753h4v3h-4zM13 701h2v3h-2zM207 698h2v2h-2zM126 90h3v3h-3zM240 257h3v3h-3zM504 398h5v1h-5zM294 122h2v3h-2zM734 746h3v1h-3zM272 709h2v1h-2zM49 349h5v1h-5zM802 544h5v1h-5zM684 237h3v1h-3zM208 344h4v1h-4zM337 494h2v3h-2zM18 118h2v2h-2zM164 40h3v1h-3zM81 171h3v1h-3zM696 317h4v1h-4zM770 63h3v2h-3zM390 118h2v1h-2zM665 365h3v2h-3zM434 480h2v2h-2zM92 776h3v2h-3zM59 532h3v1h-3zM455 344h3v3h-3zM182 28h2v1h-2zM568 351h3v1h-3zM745 674h2v1h-2zM557 434h3v1h-3zM206 150h5v2h-5zM424 91h5v2h-5zM544 541h4v2h-4zM735 80h3v1h-3zM686 135h4v3h-4zM163 457h3v1h-3zM759 257h3v3h-3zM103 578h1v1h-1zM380 279h2v2h-2zM764 589h2v3h-2zM427 587h5v3h-5zM405 657h3v1h-3zM235 405h3v1h-3zM610 402h1v3h-1zM42 593h3v3h-3zM115 101h2v1h-2zM568 686h4v3h-4zM637 108h2v3h-2zM56 381h4v2h-4zM409 619h3v3h-3zM444 46h5v3h-5zM607 482h2v1h-2zM39 43h4v1h-4zM241 653h5v1h-5zM613 324h3v3h-3zM328 608h1v1h-1zM538 586h1v3h-1zM646 249h2v3h-2zM78 276h4v1h-4zM614 45h3v1h-3zM156 105h1v2h-1zM199 203h5v3h-5zM650 396h2v1h-2zM397 433h5v1h-5zM559 368h4v1h-4zM598 635h3v2h-3zM718 493h3v2h-3zM159 748h1v1h-1zM194 446h3v3h-3zM588 630h2v1h-2zM65 245h3v1h-3zM511 218h4v2h-4zM430 684h1v2h-1zM645 659h4v2h-4zM432 88h3v1h-3zM424 365h3v3h-3zM737 296h5v1h-5zM374 562h3v2h-3zM795 157h2v2h-2zM398 232h2v1h-2zM24 709h5v1h-5zM53 511h3v2h-3zM41 297h2v2h-2zM711 506h2v1h-2zM508 220h4v3h-4zM568 187h3v2h-3zM195 746h5v2h-5zM468 332h5v1h-5zM108 71h3v2h-3zM164 60h3v1h-3zM190 42h5v1h-5zM331 52h4v1h-4zM70 73h4v1h-4zM412 252h2v1h-2zM391 761h4v3h-4zM345 686h2v1h-2zM187 318h1v1h-1zM454 701h3v2h-3zM540 761h3v2h-3zM771 592h1v3h-1zM588 265h2v1h-2zM81 508h1v2h-1zM146 77h1v2h-1zM394 272h4v3h-4zM676 40h3v3h-3zM501 170h5v1h-5zM665 615h3v1h-3zM479 613h4v2h-4zM490 690h2v1h-2zM710 56h1v2h-1zM602 84h1v2h-1zM97 673h1v1h-1zM563 571h4v1h-4zM702 711h2v2h-2zM611 572h5v2h-5zM319 374h3v1h-3zM617 530h3v1h-3zM499 730h2v2h-2zM330 88h4v1h-4zM220 392h5v3h-5zM631 351h1v2h-1zM722 224h3v3h-3zM322 561h3v2h-3zM65 510h2v3h-2zM526 555h2v2h-2zM187 203h2v2h-2zM716 458h5v2h-5zM564 106h4v1h-4zM735 529h2v2h-2zM227 485h1v2h-1zM350 342h3v1h-3zM442 656h4v2h-4zM633 499h4v2h-4zM751 738h3v2h-3zM404 639h2v2h-2zM157 518h3v3h-3zM590 522h2v1h-2zM37 401h5v1h-5zM288 759h5v3h-5zM767 61h1v3h-1zM534 366h5v1h-5zM479 579h2v1h-2zM408 202h2v3h-2zM424 401h1v2h-1zM693 44h1v2h-1zM146 621h3v2h-3zM445 136h1v3h-1zM235 156h2v3h-2zM689 335h4v1h-4zM152 308h5v1h-5zM712 102h4v2h-4zM406 729h4v3h-4zM683 461h3v1h-3zM591 207h2v1h-2zM329 117h4v1h-4zM366 403h4v1h-4zM740 501h2v2h-2zM659 252h5v2h-5zM413 552h1v3h-1zM572 644h5v1h-5zM446 591h3v1h-3zM244 361h3v1h-3zM345 148h4v2h-4zM66 439h4v2h-4zM430 404h3v2h-3zM310 126h1v3h-1zM558 81h3v1h-3zM426 106h3v2h-3zM718 582h4v2h-4zM612 290h3v2h-3zM411 714h2v2h-2zM593 442h2v3h-2zM207 316h3v2h-3zM70 326h5v2h-5zM122 408h3v2h-3zM480 620h5v1h-5zM494 372h1v2h-1zM14 498h2v2h-2zM622 39h1v1h-1zM333 58h2v1h-2zM755 185h2v1h-2zM379 738h1v1h-1zM395 584h2v1h-2zM579 388h2v2h-2zM541 552h5v1h-5zM174 61h2v2h-2zM638 256h4v2h-4zM55 360h4v1h-4zM127 243h1v1h-1zM458 518h3v1h-3zM589 91h5v1h-5zM341 414h2v1h-2zM235 116h1v2h-1zM629 542h2v1h-2zM139 501h3v3h-3zM727 237h3v3h-3zM491 66h3v1h-3zM529 613h2v2h-2zM600 25h1v2h-1zM785 454h1v2h-1zM366 27h1v2h-1zM39 646h5v1h-5zM722 250h1v1h-1zM460 37h5v2h-5zM234 380h2v2h-2zM193 629h5v2h-5zM511 275h2v2h-2zM704 728h2v1h-2zM231 154h2v1h-2zM321 353h2v1h-2zM397 243h4v1h-4zM651 358h3v2h-3zM178 732h5v1h-5zM107 377h3v2h-3zM322 497h2v2h-2zM521 274h2v1h-2zM781 702h3v2h-3zM592 118h5v2h-5zM88 112h4v2h-4zM159 353h2v1h-2zM744 217h2v1h-2zM50 143h1v3h-1zM787 535h3v1h-3zM436 687h4v1h-4zM706 655h2v3h-2zM461 680h2v1h-2zM294 436h2v3h-2zM349 237h3v1h-3zM805 285h1v1h-1zM461 648h2v1h-2zM175 455h2v1h-2zM694 533h3v3h-3zM800 497h3v1h-3zM548 155h2v2h-2zM54 176h2v2h-2zM532 502h3v1h-3zM421 330h1v2h-1zM232 361h2v1h-2zM276 117h3v3h-3zM274 109h2v1h-2zM484 286h2v3h-2zM15 413h3v2h-3zM482 118h2v3h-2zM376 490h3v2h-3zM423 180h2v2h-2zM430 481h3v2h-3zM326 638h1v3h-1zM749 420h5v2h-5zM362 143h3v1h-3zM439 150h3v3h-3zM687 637h3v2h-3zM143 570h4v3h-4zM180 531h4v1h-4zM312 209h3v1h-3zM412 544h5v2h-5zM95 279h5v2h-5zM537 293h4v2h-4zM794 289h3v1h-3zM748 307h2v1h-2zM39 751h5v1h-5zM365 579h3v2h-3zM718 498h1v1h-1zM93 197h2v2h-2zM275 129h2v2h-2zM547 715h5v1h-5zM417 570h3v1h-3zM399 147h2v1h-2zM711 26h1v1h-1zM518 480h5v1h-5zM528 260h2v2h-2zM270 309h3v3h-3zM160 191h2v2h-2zM754 499h2v3h-2zM315 254h5v2h-5zM579 594h4v2h-4zM634 69h3v3h-3zM617 413h4v1h-4zM682 145h1v2h-1zM254 215h3v2h-3zM465 131h1v1h-1zM288 155h4v3h-4zM171 596h5v1h-5zM563 465h2v2h-2zM639 161h5v2h-5zM293 397h2v3h-2zM289 452h2v3h-2zM256 233h2v1h-2zM327 306h2v2h-2zM737 283h1v3h-1zM237 375h2v3h-2zM646 662h3v2h-3zM331 613h2v1h-2zM161 520h2v2h-2zM383 491h3v1h-3zM38 285h3v1h-3zM667 197h5v1h-5zM556 345h2v2h-2zM226 54h5v1h-5zM181 292h2v2h-2zM383 554h4v3h-4zM187 475h4v1h-4zM733 610h5v3h-5zM645 99h2v3h-2zM37 760h2v2h-2zM742 258h3v3h-3zM770 476h5v2h-5zM503 202h5v2h-5zM208 455h1v3h-1zM767 235h5v1h-5zM657 627h3v3h-3zM19 259h3v1h-3zM242 424h4v1h-4zM745 160h4v3h-4zM46 463h2v1h-2zM57 693h2v2h-2zM652 594h1v3h-1zM518 444h3v2h-3zM483 157h2v1h-2zM502 190h1v1h-1zM134 538h2v2h-2zM525 293h1v2h-1zM20 640h3v2h-3zM230 622h3v3h-3zM467 410h3v1h-3zM620 565h5v2h-5zM744 32h2v1h-2zM372 663h2v3h-2zM99 427h2v2h-2zM145 320h5v1h-5zM687 99h2v2h-2zM334 766h4v1h-4zM704 648h4v1h-4zM540 402h5v1h-5zM714 463h2v1h-2zM320 315h2v1h-2zM351 213h2v1h-2zM436 32h3v2h-3zM396 339h1v3h-1zM573 623h3v2h-3zM29 690h5v1h-5zM626 310h2v1h-2zM52 713h2v2h-2zM573 289h1v3h-1zM623 203h3v2h-3zM438 719h1v2h-1zM324 676h4v2h-4zM647 594h3v2h-3zM744 86h2v1h-2zM801 402h4v1h-4zM593 291h5v2h-5zM547 416h3v1h-3zM274 731h3v1h-3zM268 116h2v1h-2zM694 483h4v2h-4zM12 649h2v2h-2zM77 237h3v3h-3zM554 762h4v1h-4zM30 252h5v1h-5zM429 450h4v1h-4zM385 530h2v2h-2zM148 612h2v3h-2zM430 638h2v2h-2zM3 148h4v2h-4zM519 479h1v2h-1zM698 629h5v2h-5zM283 258h5v3h-5zM737 375h1v2h-1zM642 166h3v2h-3zM399 217h2v1h-2zM160 461h2v1h-2zM670 28h2v2h-2zM210 255h3v1h-3zM350 653h4v3h-4zM519 118h4v2h-4zM575 163h3v2h-3zM354 693h2v1h-2zM496 340h2v2h-2zM572 740h4v1h-4zM38 189h5v2h-5zM386 480h3v2h-3zM429 466h4v1h-4zM322 444h1v1h-1zM116 142h4v1h-4zM430 490h3v3h-3zM807 571h3v1h-3zM670 212h3v1h-3zM705 351h2v2h-2zM649 756h5v3h-5zM605 495h3v3h-3zM140 313h1v3h-1zM588 447h1v1h-1zM542 337h3v2h-3zM133 65h4v3h-4zM52 107h4v2h-4zM231 425h2v2h-2zM178 755h3v1h-3zM508 504h5v1h-5zM120 212h1v3h-1zM446 684h3v2h-3zM273 632h3v2h-3zM601 454h5v1h-5zM730 95h3v1h-3zM640 188h3v2h-3zM110 678h5v1h-5zM188 701h5v2h-5zM706 431h4v1h-4zM126 765h4v1h-4zM321 282h1v3h-1zM334 146h2v1h-2zM741 539h5v2h-5zM794 346h3v3h-3zM13 586h2v1h-2zM446 585h3v3h-3zM530 475h2v2h-2zM172 266h2v3h-2zM529 507h2v2h-2zM631 168h2v1h-2zM243 59h3v2h-3zM383 369h4v3h-4zM719 200h3v1h-3zM333 686h3v2h-3zM774 431h5v1h-5zM568 181h4v3h-4zM771 295h5v1h-5zM15 569h3v2h-3zM790 704h2v3h-2zM330 584h2v1h-2zM513 737h2v1h-2zM588 152h3v2h-3zM622 509h2v2h-2zM302 534h4v3h-4zM56 366h4v1h-4zM314 598h5v1h-5zM407 339h3v2h-3zM294 421h2v1h-2zM682 60h5v1h-5zM649 707h2v1h-2zM284 307h4v2h-4zM555 770h5v3h-5zM733 133h3v3h-3zM44 359h3v2h-3zM317 139h1v2h-1zM180 49h3v2h-3zM544 492h1v2h-1zM545 183h3v2h-3zM334 33h5v2h-5zM531 70h2v2h-2zM802 404h4v1h-4zM73 779h4v1h-4zM213 50h2v3h-2zM591 747h4v1h-4zM382 109h4v2h-4zM696 691h1v1h-1zM203 619h2v2h-2zM110 366h3v2h-3zM181 682h2v2h-2zM571 417h1v1h-1zM724 444h5v3h-5zM649 714h1v3h-1zM136 184h4v1h-4zM447 677h2v1h-2zM146 248h2v2h-2zM789 738h5v2h-5zM562 289h5v1h-5zM125 212h2v1h-2zM308 361h5v3h-5zM800 104h3v3h-3zM65 495h5v1h-5zM480 196h2v3h-2zM570 580h5v2h-5zM210 483h4v1h-4zM223 457h1v2h-1zM444 233h1v3h-1zM488 459h2v1h-2zM8 36h1v3h-1zM455 611h1v3h-1zM337 433h2v1h-2zM24 57h3v2h-3zM508 554h4v1h-4zM75 530h3v2h-3zM239 452h4v2h-4zM762 141h2v3h-2zM680 654h2v2h-2zM345 420h4v1h-4zM36 453h1v3h-1zM543 353h2v1h-2zM408 450h2v1h-2zM572 103h5v1h-5zM145 73h2v2h-2zM64 111h5v3h-5zM750 99h1v1h-1zM706 491h2v3h-2zM564 230h2v3h-2zM219 490h2v2h-2zM758 571h5v3h-5zM542 381h1v3h-1zM546 334h4v1h-4zM220 59h3v1h-3zM364 330h3v2h-3zM225 183h3v2h-3zM740 295h3v1h-3zM61 477h2v1h-2zM353 124h5v1h-5zM532 727h2v2h-2zM42 770h2v3h-2zM418 285h5v3h-5zM795 495h3v2h-3zM566 394h2v1h-2zM205 552h2v3h-2zM126 649h3v2h-3zM124 244h2v1h-2zM298 212h3v2h-3zM296 533h3v2h-3zM421 701h3v2h-3zM388 397h5v2h-5zM458 568h3v1h-3zM413 434h2v3h-2zM712 410h2v1h-2zM14 269h5v1h-5zM72 301h4v3h-4zM93 37h5v2h-5zM693 479h4v3h-4zM779 703h3v1h-3zM531 285h1v2h-1zM98 73h2v1h-2zM569 238h2v2h-2zM84 612h3v2h-3zM350 56h1v1h-1zM533 711h5v2h-5zM130 581h4v2h-4zM564 599h2v2h-2zM770 468h3v2h-3zM105 160h1v1h-1zM177 232h2v1h-2zM767 211h3v2h-3zM133 303h2v1h-2zM799 678h3v3h-3zM239 228h2v2h-2zM790 635h4v1h-4zM532 211h2v1h-2zM683 517h5v2h-5zM366 408h3v2h-3zM598 267h2v1h-2zM324 250h3v1h-3zM538 536h1v1h-1zM325 452h4v1h-4zM56 583h2v3h-2zM537 733h2v1h-2zM226 649h2v1h-2zM20 441h3v1h-3zM763 641h4v1h-4zM138 252h2v2h-2zM544 652h3v1h-3zM334 262h2v2h-2zM578 219h5v1h-5zM800 486h3v1h-3zM554 402h4v1h-4zM380 569h3v3h-3zM585 55h4v2h-4zM256 41h2v1h-2zM323 499h2v1h-2zM113 297h4v1h-4zM192 312h5v3h-5zM221 528h3v3h-3zM744 583h1v3h-1zM73 675h4v3h-4zM713 748h5v1h-5zM622 423h4v2h-4zM475 295h3v3h-3zM239 448h5v1h-5zM439 738h3v1h-3zM759 581h4v2h-4zM99 47h3v2h-3zM473 487h3v2h-3zM317 308h2v1h-2zM378 311h4v1h-4zM380 104h3v2h-3zM734 129h3v1h-3zM788 675h1v1h-1zM294 42h3v2h-3zM539 70h2v2h-2zM626 140h3v1h-3zM682 731h3v1h-3zM338 601h3v2h-3zM577 433h3v2h-3zM313 175h4v1h-4zM62 173h2v1h-2zM767 89h2v1h-2zM645 199h3v2h-3zM281 509h3v2h-3zM590 443h2v1h-2zM144 70h3v1h-3zM211 267h3v2h-3zM567 162h1v3h-1zM745 381h2v2h-2zM536 649h5v3h-5zM811 103h2v2h-2zM79 644h4v2h-4zM261 487h3v2h-3zM618 491h5v1h-5zM411 82h2v3h-2zM804 342h2v1h-2zM412 446h4v2h-4zM589 654h4v1h-4zM276 744h3v2h-3zM48 275h4v2h-4zM494 676h3v2h-3zM644 137h2v2h-2zM545 736h5v1h-5zM196 336h5v3h-5zM318 335h2v1h-2zM328 749h2v1h-2zM424 713h3v3h-3zM51 439h1v1h-1zM503 167h2v2h-2zM732 76h2v1h-2zM398 744h2v1h-2zM39 259h3v2h-3zM464 204h3v3h-3zM379 557h2v3h-2zM109 270h4v2h-4zM108 30h2v2h-2zM483 408h3v1h-3zM676 433h2v2h-2zM5 556h1v2h-1zM347 423h5v1h-5zM97 228h4v3h-4zM669 330h4v1h-4zM170 572h1v2h-1zM720 572h1v1h-1zM389 323h1v2h-1zM296 213h2v2h-2zM379 594h2v3h-2zM482 149h4v3h-4zM25 110h3v2h-3zM557 170h3v3h-3zM220 180h5v2h-5zM802 631h1v2h-1zM792 269h2v2h-2zM609 643h4v2h-4zM332 69h3v3h-3zM373 90h3v2h-3zM720 136h4v1h-4zM633 27h3v1h-3zM544 175h2v1h-2zM325 260h5v3h-5zM45 337h2v2h-2zM50 394h4v2h-4zM721 713h2v2h-2zM5 618h3v2h-3zM398 585h4v2h-4zM515 163h3v3h-3zM109 626h2v2h-2zM767 535h1v1h-1zM706 522h2v1h-2zM174 662h2v3h-2zM736 750h4v3h-4zM357 141h5v3h-5zM563 424h3v1h-3zM709 593h5v1h-5zM421 590h3v2h-3zM96 455h2v1h-2zM99 496h4v3h-4zM320 185h3v3h-3zM19 70h2v2h-2zM718 445h3v2h-3zM32 45h2v1h-2zM382 393h4v1h-4zM68 456h4v1h-4zM278 378h3v2h-3zM43 94h5v2h-5zM468 642h5v1h-5zM314 603h4v1h-4zM810 386h1v3h-1zM556 216h2v1h-2zM480 427h5v1h-5zM545 414h2v1h-2zM699 102h4v2h-4zM176 196h5v3h-5zM140 242h3v1h-3zM636 178h3v2h-3zM192 714h3v2h-3zM118 165h3v2h-3zM446 357h3v2h-3zM750 659h2v3h-2zM384 187h2v1h-2zM615 284h2v2h-2zM576 349h2v2h-2zM493 415h2v2h-2zM412 441h3v2h-3zM708 338h2v1h-2zM67 117h4v1h-4zM445 322h2v1h-2zM741 97h5v3h-5zM315 327h1v3h-1zM233 335h5v2h-5zM300 777h3v2h-3zM570 417h4v2h-4zM795 728h4v2h-4zM379 611h3v2h-3zM383 142h3v1h-3zM707 147h2v1h-2zM689 414h2v1h-2zM401 565h2v3h-2zM345 53h2v2h-2zM620 443h1v1h-1zM471 301h1v2h-1zM255 427h2v2h-2zM535 387h3v2h-3zM547 519h2v3h-2zM436 74h4v2h-4zM633 376h5v3h-5zM787 665h2v3h-2zM598 174h4v1h-4zM238 702h2v2h-2zM231 622h3v2h-3zM796 138h4v2h-4zM429 711h5v1h-5zM746 718h4v3h-4zM23 172h4v1h-4zM74 181h1v3h-1zM118 670h3v1h-3zM773 107h3v2h-3zM162 698h3v3h-3zM32 689h1v3h-1zM665 75h1v1h-1zM386 716h1v3h-1zM739 465h2v3h-2zM358 52h5v2h-5zM88 664h2v1h-2zM657 585h4v1h-4zM728 314h1v1h-1zM736 665h3v1h-3zM611 57h3v2h-3zM440 299h2v2h-2zM337 712h2v2h-2zM612 215h3v1h-3zM784 724h2v2h-2zM574 171h1v1h-1zM35 677h2v2h-2zM42 645h4v1h-4zM272 770h4v2h-4zM499 310h5v3h-5zM223 562h5v1h-5zM748 219h1v2h-1zM518 81h2v1h-2zM291 693h5v2h-5zM358 408h5v3h-5zM512 54h2v2h-2zM635 477h3v2h-3zM743 266h1v2h-1zM75 644h2v2h-2zM647 560h1v1h-1zM326 203h2v1h-2zM31 28h1v2h-1zM771 345h3v3h-3zM501 52h2v3h-2zM296 256h3v3h-3zM686 123h2v1h-2zM23 668h1v1h-1zM454 361h5v2h-5zM114 637h2v2h-2zM753 751h4v1h-4zM647 279h3v1h-3zM293 144h2v3h-2zM67 643h2v3h-2zM301 528h2v1h-2zM37 305h3v2h-3zM620 172h3v2h-3zM623 738h1v1h-1zM354 351h3v1h-3zM786 778h2v2h-2zM163 699h2v2h-2zM647 78h3v2h-3zM104 435h1v1h-1zM167 198h1v1h-1zM91 495h5v1h-5zM298 477h3v1h-3zM588 477h4v2h-4zM792 570h5v1h-5zM4 672h1v2h-1zM689 770h5v1h-5zM249 210h1v3h-1zM205 392h4v3h-4zM558 745h3v1h-3zM548 479h2v2h-2zM299 221h1v3h-1zM131 424h1v2h-1zM609 605h3v3h-3zM577 717h2v1h-2zM96 633h2v1h-2zM397 514h3v1h-3zM364 85h3v3h-3zM509 716h2v1h-2zM422 448h3v2h-3zM702 730h4v1h-4zM530 648h4v2h-4zM293 346h2v1h-2zM487 170h2v3h-2zM790 61h2v1h-2zM142 159h4v2h-4zM463 350h4v1h-4zM65 713h3v1h-3zM626 387h2v3h-2zM282 270h4v2h-4zM627 170h3v2h-3zM714 428h5v1h-5zM670 409h3v2h-3zM684 500h1v1h-1zM186 736h1v2h-1zM111 583h2v3h-2zM305 428h1v1h-1zM485 719h2v3h-2zM728 610h3v1h-3zM109 618h4v1h-4zM297 150h2v1h-2zM609 190h3v2h-3zM318 408h3v1h-3zM512 179h3v2h-3zM81 249h2v1h-2zM571 209h3v2h-3zM435 33h2v2h-2zM661 277h1v1h-1zM592 748h2v2h-2zM729 340h2v2h-2zM364 580h3v2h-3zM440 627h3v1h-3zM459 138h3v1h-3zM494 279h2v1h-2zM460 438h2v2h-2zM661 357h2v2h-2zM43 424h3v1h-3zM556 279h2v2h-2zM561 648h5v1h-5zM670 765h2v3h-2zM599 624h4v1h-4zM19 97h2v3h-2zM202 312h2v1h-2zM809 715h2v1h-2zM172 27h2v1h-2zM142 41h3v2h-3zM128 165h3v1h-3zM609 641h1v1h-1zM538 434h2v2h-2zM514 58h4v3h-4zM486 192h2v2h-2zM494 257h5v1h-5zM94 184h2v2h-2zM6 375h3v1h-3zM262 327h4v1h-4zM435 754h3v2h-3zM199 431h2v1h-2zM610 215h1v3h-1zM391 536h1v1h-1zM399 82h1v3h-1zM590 719h2v2h-2zM77 50h4v1h-4zM384 575h1v2h-1zM497 317h2v2h-2zM494 235h4v1h-4zM716 499h4v2h-4zM554 325h2v1h-2zM195 600h5v2h-5zM3 366h5v1h-5zM416 261h5v2h-5zM531 506h3v2h-3zM612 34h3v1h-3zM236 683h3v2h-3zM524 133h2v2h-2zM144 758h3v1h-3zM254 606h4v3h-4zM338 297h2v1h-2zM784 606h1v3h-1zM639 365h3v2h-3zM207 431h4v3h-4zM58 269h2v2h-2zM466 25h3v1h-3zM643 74h2v3h-2zM91 613h2v1h-2zM200 300h5v2h-5zM593 778h2v2h-2zM525 138h3v1h-3zM592 502h5v1h-5zM31 512h2v1h-2zM476 169h3v2h-3zM602 186h5v1h-5zM235 598h1v3h-1zM523 465h2v2h-2zM529 530h4v2h-4zM209 744h3v1h-3zM665 269h2v3h-2zM812 59h4v1h-4zM166 651h1v1h-1zM248 770h3v1h-3zM476 58h5v2h-5zM537 711h3v1h-3zM470 542h3v2h-3zM611 472h2v2h-2zM89 241h1v2h-1zM195 654h1v1h-1zM492 619h3v1h-3zM677 484h5v2h-5zM612 722h1v2h-1zM741 379h3v2h-3zM675 417h5v2h-5zM701 61h3v3h-3zM441 198h5v2h-5zM487 313h2v1h-2zM676 555h2v1h-2zM118 461h2v3h-2zM755 211h3v2h-3zM194 531h1v1h-1zM116 427h3v1h-3zM17 242h5v3h-5zM301 404h3v2h-3zM239 284h2v1h-2zM467 184h2v1h-2zM30 125h2v3h-2zM42 689h2v1h-2zM364 603h3v2h-3zM697 174h1v1h-1zM743 214h2v1h-2zM727 205h3v1h-3zM501 713h3v1h-3zM777 544h3v2h-3zM40 145h3v1h-3zM492 756h1v3h-1zM60 469h4v3h-4zM433 572h3v1h-3zM401 351h4v1h-4zM189 778h1v2h-1zM806 264h2v1h-2zM87 417h1v2h-1zM40 296h5v3h-5zM535 183h1v1h-1zM314 637h1v2h-1zM335 447h4v2h-4zM365 201h4v3h-4zM698 535h3v3h-3zM215 114h4v1h-4zM52 435h2v2h-2zM305 753h1v2h-1zM40 771h3v2h-3zM33 286h5v3h-5zM307 248h3v1h-3zM586 81h4v1h-4zM135 501h3v1h-3zM317 115h3v1h-3zM388 89h4v1h-4zM455 567h4v2h-4zM809 232h3v2h-3zM702 261h3v2h-3zM396 191h3v1h-3zM168 278h1v3h-1zM399 409h3v1h-3zM155 211h5v3h-5zM540 243h5v3h-5zM770 112h3v3h-3zM620 252h2v2h-2zM114 538h3v1h-3zM803 691h3v3h-3zM431 84h5v2h-5zM575 61h2v1h-2zM92 505h5v3h-5zM464 308h2v2h-2zM70 617h2v3h-2zM766 356h5v2h-5zM108 60h3v3h-3zM715 734h1v2h-1zM315 427h4v3h-4zM175 321h2v2h-2zM261 526h2v1h-2zM413 566h1v1h-1zM441 195h3v1h-3zM127 33h3v3h-3zM657 101h2v1h-2zM217 172h1v1h-1zM449 350h2v2h-2zM287 606h2v3h-2zM646 32h4v3h-4zM750 314h2v1h-2zM115 221h3v1h-3zM526 130h2v1h-2zM141 105h5v1h-5zM139 435h1v3h-1zM269 220h2v2h-2zM18 40h3v2h-3zM144 206h3v3h-3zM355 123h4v1h-4zM627 144h3v2h-3zM166 342h5v1h-5zM558 179h1v2h-1zM324 705h4v3h-4zM741 414h2v1h-2zM519 174h3v1h-3zM352 739h3v2h-3zM510 212h3v1h-3zM254 705h3v2h-3zM547 569h2v1h-2zM540 43h5v3h-5zM793 269h3v3h-3zM122 47h4v2h-4zM677 345h2v2h-2zM666 30h4v1h-4zM605 139h2v2h-2zM103 717h2v3h-2zM231 495h2v2h-2zM751 354h4v2h-4zM645 542h2v2h-2zM495 525h2v1h-2zM580 44h2v2h-2zM799 604h2v3h-2zM801 548h3v1h-3zM774 658h2v1h-2zM138 367h3v1h-3zM467 426h1v1h-1zM8 290h4v1h-4zM65 582h3v1h-3zM290 144h1v2h-1zM517 213h3v2h-3zM179 392h3v1h-3zM665 384h1v2h-1zM673 253h1v2h-1zM429 160h2v1h-2zM189 202h2v2h-2zM367 597h1v1h-1zM790 517h3v2h-3zM510 688h3v1h-3zM753 557h3v1h-3zM697 754h2v2h-2zM568 775h3v3h-3zM452 745h3v1h-3zM452 435h1v2h-1zM99 488h2v1h-2zM788 291h2v1h-2zM653 60h3v2h-3zM334 280h4v1h-4zM163 219h5v3h-5zM659 552h2v2h-2zM196 553h2v2h-2zM533 673h2v1h-2zM731 618h1v3h-1zM410 391h3v1h-3zM523 258h1v1h-1zM611 533h2v2h-2zM471 561h2v1h-2zM547 240h4v3h-4zM755 433h3v1h-3zM452 641h2v2h-2zM485 353h4v3h-4zM399 454h5v3h-5zM679 556h3v3h-3zM80 300h1v2h-1zM22 577h3v1h-3zM724 728h1v3h-1zM683 68h5v2h-5zM658 563h2v2h-2zM265 174h1v2h-1zM140 92h1v2h-1zM344 336h4v1h-4zM365 715h5v3h-5zM380 117h3v1h-3zM616 635h3v2h-3zM613 234h4v1h-4zM796 334h2v3h-2zM713 525h5v1h-5zM10 384h5v2h-5zM711 465h2v3h-2zM549 134h3v2h-3zM787 467h5v3h-5zM258 162h3v1h-3zM790 233h4v3h-4zM51 223h2v1h-2zM385 653h3v2h-3zM797 118h1v2h-1zM178 77h5v2h-5zM808 724h3v3h-3zM548 118h4v3h-4zM679 96h1v2h-1zM667 427h2v3h-2zM159 659h3v3h-3zM395 70h1v3h-1zM67 695h2v3h-2zM603 765h5v2h-5zM309 570h1v2h-1zM215 182h4v1h-4zM168 677h4v2h-4zM653 464h2v2h-2zM681 318h3v3h-3zM468 742h4v1h-4zM746 445h4v2h-4zM575 561h2v1h-2zM161 753h5v1h-5zM309 280h3v3h-3zM128 761h4v1h-4zM150 167h1v2h-1zM132 131h3v3h-3zM512 485h1v2h-1zM680 241h2v1h-2zM600 240h1v3h-1zM86 376h2v1h-2zM347 510h3v2h-3zM755 275h3v2h-3zM290 773h5v2h-5zM51 182h1v2h-1zM461 355h1v3h-1zM88 244h1v2h-1zM784 333h1v1h-1zM167 253h2v1h-2zM295 624h3v1h-3zM279 731h5v1h-5zM201 295h3v1h-3zM109 644h2v3h-2zM532 240h3v2h-3zM654 745h3v1h-3zM479 519h2v2h-2zM160 543h5v1h-5zM591 119h2v1h-2zM240 213h3v1h-3zM571 50h3v2h-3zM90 442h3v1h-3zM261 471h3v1h-3zM291 169h4v2h-4zM772 337h3v1h-3zM253 767h2v1h-2zM438 95h2v3h-2zM753 368h2v1h-2zM337 528h5v1h-5zM46 352h2v2h-2zM246 689h1v2h-1zM535 604h5v3h-5zM246 292h2v3h-2zM6 157h4v2h-4zM174 536h4v3h-4zM423 660h4v2h-4zM564 262h3v1h-3zM373 568h1v2h-1zM509 765h2v2h-2zM223 365h4v1h-4zM761 721h2v2h-2zM41 631h3v3h-3zM658 738h3v2h-3zM520 385h4v2h-4zM426 695h2v3h-2zM612 632h2v1h-2zM647 26h4v2h-4zM119 312h3v2h-3zM127 509h2v2h-2zM249 317h2v3h-2zM105 760h1v2h-1zM276 396h3v3h-3zM648 674h3v2h-3zM112 775h2v2h-2zM371 146h2v1h-2zM781 271h4v3h-4zM89 461h4v3h-4zM568 689h2v2h-2zM669 258h3v1h-3zM319 55h2v1h-2zM559 673h2v2h-2zM339 83h4v1h-4zM451 570h3v1h-3zM758 484h4v2h-4zM192 488h1v3h-1zM260 280h3v1h-3zM122 584h2v2h-2zM355 229h3v2h-3zM598 39h4v3h-4zM172 210h4v1h-4zM101 412h2v2h-2zM291 776h1v2h-1zM80 651h5v1h-5zM300 26h1v1h-1zM681 587h3v1h-3zM186 708h4v1h-4zM289 288h5v3h-5zM467 747h4v3h-4zM228 676h4v1h-4zM251 421h2v1h-2zM30 234h5v2h-5zM680 137h4v1h-4zM354 138h4v1h-4zM797 38h3v1h-3zM806 32h4v1h-4zM178 346h1v3h-1zM293 310h3v3h-3zM775 527h4v1h-4zM54 352h3v3h-3zM273 143h3v2h-3zM495 219h2v3h-2zM129 491h1v3h-1zM451 742h3v2h-3zM767 38h3v1h-3zM376 470h2v2h-2zM262 709h3v2h-3zM467 584h3v1h-3zM448 706h5v2h-5zM440 554h4v1h-4zM274 268h4v3h-4zM144 489h2v1h-2zM563 569h5v2h-5zM425 681h5v1h-5zM660 711h3v1h-3zM800 46h3v2h-3zM307 33h3v2h-3zM306 41h2v1h-2zM332 768h5v1h-5zM112 508h3v2h-3zM510 61h1v1h-1zM468 207h3v3h-3zM501 42h1v1h-1zM209 39h4v2h-4zM718 372h2v1h-2zM619 144h3v2h-3zM72 116h3v2h-3zM162 52h4v1h-4zM776 575h3v2h-3zM185 677h1v1h-1zM769 435h4v1h-4zM64 265h2v1h-2zM490 32h3v3h-3zM437 134h2v2h-2zM250 182h4v2h-4zM567 488h2v3h-2zM196 746h4v1h-4zM337 771h2v2h-2zM437 181h1v2h-1zM634 649h3v1h-3zM623 671h4v2h-4zM476 706h5v1h-5zM226 307h3v1h-3zM57 342h3v1h-3zM66 624h2v3h-2zM551 109h1v2h-1zM239 321h3v1h-3zM230 287h2v2h-2zM697 366h2v2h-2zM378 44h4v1h-4zM580 168h4v1h-4zM566 634h4v2h-4zM228 360h2v1h-2zM148 269h4v2h-4zM163 512h4v1h-4zM810 700h5v1h-5zM513 614h2v1h-2zM685 752h1v1h-1zM175 728h2v2h-2zM103 376h3v3h-3zM346 180h2v1h-2zM172 473h4v2h-4zM84 293h5v1h-5zM600 322h3v2h-3zM783 612h3v2h-3zM160 333h2v3h-2zM376 405h2v2h-2zM691 241h1v1h-1zM267 46h3v1h-3zM24 504h1v1h-1zM807 355h5v2h-5zM744 55h2v3h-2zM503 705h5v3h-5zM94 707h2v3h-2zM151 90h2v3h-2zM481 73h1v1h-1zM800 496h3v1h-3zM533 162h2v1h-2zM740 651h5v1h-5zM396 653h3v2h-3zM561 687h2v2h-2zM390 620h3v1h-3zM445 590h2v3h-2zM427 319h3v2h-3zM811 667h3v2h-3zM177 86h1v2h-1zM163 551h5v2h-5zM780 50h3v2h-3zM382 535h4v1h-4zM457 643h3v1h-3zM499 59h2v2h-2zM333 452h5v1h-5zM623 136h4v1h-4zM637 269h3v1h-3zM87 86h2v3h-2zM515 541h1v2h-1zM341 390h1v1h-1zM59 47h5v2h-5zM489 493h4v1h-4zM383 601h2v1h-2zM794 625h4v2h-4zM88 406h2v1h-2zM659 588h4v1h-4zM347 111h2v2h-2zM362 697h2v1h-2zM757 735h3v2h-3zM458 46h2v1h-2zM233 214h4v3h-4zM45 359h2v1h-2zM546 103h3v2h-3zM635 31h1v1h-1zM774 233h3v3h-3zM243 50h1v3h-1zM523 623h2v2h-2zM517 623h3v3h-3zM516 90h4v3h-4zM223 344h3v3h-3zM805 216h3v3h-3zM194 511h2v1h-2zM170 259h5v1h-5zM159 103h1v3h-1zM490 550h2v1h-2zM599 487h2v1h-2zM189 678h4v2h-4zM225 284h4v1h-4zM577 316h1v2h-1zM460 251h4v1h-4zM300 232h2v2h-2zM239 202h1v1h-1zM226 139h2v2h-2zM360 26h2v2h-2zM431 709h1v2h-1zM725 614h3v3h-3zM402 753h1v2h-1zM243 300h3v1h-3zM176 365h5v3h-5zM356 126h3v1h-3zM570 759h2v1h-2zM199 473h2v2h-2zM671 602h1v3h-1zM486 595h2v2h-2zM372 211h2v1h-2zM793 555h5v3h-5zM729 644h5v2h-5zM730 133h5v2h-5zM631 489h3v2h-3zM528 704h2v1h-2zM261 492h2v1h-2zM614 487h2v2h-2zM318 200h3v2h-3zM484 540h3v1h-3zM187 185h2v2h-2zM783 364h2v1h-2zM359 623h2v3h-2zM703 131h3v2h-3zM764 370h3v1h-3zM367 625h2v2h-2zM189 729h1v3h-1zM185 760h2v3h-2zM692 43h3v1h-3zM770 510h5v2h-5zM362 738h1v1h-1zM69 87h4v2h-4zM102 569h3v2h-3zM592 502h3v2h-3zM70 507h4v1h-4zM133 34h3v2h-3zM437 299h3v3h-3zM285 775h2v1h-2zM758 735h4v2h-4zM263 172h3v1h-3zM610 465h2v2h-2zM300 733h4v3h-4zM178 528h4v2h-4zM203 458h2v1h-2zM564 289h3v1h-3zM548 158h5v3h-5zM91 379h5v2h-5zM279 762h3v1h-3zM708 321h3v3h-3zM599 71h2v2h-2zM78 284h3v2h-3zM731 718h1v2h-1zM446 402h3v2h-3zM199 435h4v2h-4zM9 418h3v2h-3zM663 39h2v2h-2zM84 561h4v1h-4zM348 131h2v3h-2zM633 346h4v1h-4zM806 732h3v1h-3zM452 66h3v2h-3zM474 537h2v1h-2zM465 446h2v1h-2zM798 160h2v3h-2zM592 311h1v1h-1zM715 168h4v1h-4zM466 566h4v1h-4zM422 546h1v3h-1zM212 434h5v1h-5zM752 117h4v3h-4zM203 190h1v2h-1zM613 71h3v1h-3zM804 592h3v2h-3zM152 395h2v2h-2zM602 445h5v1h-5zM54 677h4v2h-4zM361 183h2v2h-2zM161 255h2v2h-2zM43 228h1v1h-1zM115 60h3v2h-3zM490 503h3v1h-3zM82 198h1v3h-1zM386 71h3v1h-3zM229 255h3v1h-3zM350 70h2v2h-2zM785 510h2v1h-2zM376 503h5v2h-5zM713 432h1v3h-1zM388 458h4v3h-4zM479 548h3v1h-3zM719 661h4v3h-4zM780 557h4v2h-4zM575 725h3v3h-3zM338 758h2v1h-2zM261 133h3v1h-3zM745 397h3v1h-3zM281 748h2v1h-2zM28 630h3v2h-3zM22 246h3v1h-3zM220 421h3v2h-3zM190 425h5v2h-5zM271 254h3v1h-3zM288 645h4v3h-4zM735 735h3v1h-3zM555 135h2v1h-2zM772 433h3v2h-3zM802 143h1v1h-1zM382 502h1v2h-1zM533 451h1v2h-1zM24 675h1v1h-1zM96 728h4v1h-4zM311 63h1v3h-1zM209 413h5v1h-5zM217 615h2v3h-2zM202 387h2v1h-2zM526 429h1v2h-1zM39 223h3v3h-3zM320 445h1v3h-1zM10 610h2v3h-2zM600 576h2v3h-2zM543 80h3v2h-3zM180 574h2v1h-2zM81 31h3v3h-3zM468 446h3v1h-3zM215 229h4v1h-4zM590 773h5v1h-5zM396 209h4v2h-4zM510 468h2v1h-2zM364 37h5v3h-5zM790 379h3v2h-3zM728 165h2v2h-2zM605 76h5v2h-5zM517 534h4v2h-4zM79 70h1v1h-1zM507 508h2v1h-2zM499 565h1v2h-1zM520 286h5v2h-5zM461 283h2v1h-2zM772 551h2v1h-2zM285 246h2v3h-2zM722 84h2v3h-2zM82 566h2v1h-2zM180 655h5v3h-5zM123 88h4v2h-4zM755 444h3v2h-3zM642 624h2v2h-2zM449 453h3v3h-3zM127 56h3v3h-3zM657 198h2v2h-2zM660 205h3v1h-3zM367 718h5v1h-5zM561 295h1v1h-1zM676 698h3v1h-3zM147 121h4v3h-4zM61 365h1v1h-1zM486 321h2v2h-2zM231 391h3v2h-3zM763 372h2v2h-2zM725 485h3v2h-3zM472 573h2v3h-2zM526 64h3v2h-3zM420 186h1v2h-1zM154 754h2v3h-2zM496 585h3v1h-3zM554 39h3v1h-3zM67 442h3v1h-3zM126 70h2v2h-2zM627 259h4v2h-4zM764 442h5v3h-5zM370 248h2v1h-2zM790 38h1v1h-1zM101 512h5v2h-5zM719 94h4v2h-4zM18 335h5v3h-5zM259 532h5v1h-5zM251 646h3v1h-3zM204 137h3v2h-3zM453 424h3v2h-3zM389 395h3v2h-3zM284 196h1v1h-1zM603 752h4v1h-4zM283 147h1v2h-1zM289 441h5v3h-5zM335 100h5v2h-5zM296 706h5v2h-5zM221 594h5v1h-5zM136 494h5v3h-5zM459 290h5v2h-5zM153 393h3v1h-3zM797 701h3v3h-3zM546 478h4v3h-4zM616 770h3v1h-3zM99 497h2v1h-2zM526 399h5v2h-5zM50 752h1v1h-1zM777 624h3v1h-3zM650 704h4v3h-4zM336 564h1v3h-1zM675 395h4v3h-4zM451 220h4v2h-4zM113 151h2v2h-2zM314 361h2v1h-2zM653 277h3v2h-3zM265 118h1v1h-1zM381 778h3v1h-3zM523 725h2v1h-2zM770 591h1v1h-1zM324 565h3v2h-3zM169 664h1v1h-1zM8 347h1v1h-1zM605 359h4v3h-4zM166 705h4v2h-4zM606 91h2v2h-2zM59 508h3v2h-3zM27 758h1v3h-1zM644 375h3v1h-3zM307 714h3v2h-3zM6 322h2v2h-2zM498 637h3v3h-3zM338 397h4v1h-4zM425 261h3v2h-3zM132 141h2v2h-2zM676 572h3v3h-3zM488 519h3v2h-3zM617 157h1v1h-1zM290 571h3v1h-3zM583 322h4v1h-4zM744 578h4v2h-4zM77 323h3v1h-3zM366 779h3v2h-3zM28 679h4v2h-4zM329 366h5v3h-5zM744 690h2v2h-2zM517 638h3v1h-3zM408 425h2v2h-2zM313 682h3v3h-3zM409 106h2v1h-2zM193 535h5v1h-5zM246 687h2v1h-2zM569 529h4v1h-4zM806 281h2v1h-2zM429 490h5v1h-5zM153 436h1v1h-1zM714 49h5v1h-5zM12 361h3v3h-3zM373 630h2v2h-2zM654 670h4v2h-4zM157 614h1v1h-1zM226 752h2v2h-2zM195 87h5v1h-5zM135 359h2v3h-2zM195 447h1v2h-1zM510 381h3v1h-3zM699 122h4v1h-4zM74 604h2v3h-2zM794 301h3v1h-3zM556 46h3v2h-3zM502 111h3v1h-3zM609 358h3v1h-3zM715 591h1v3h-1zM65 283h4v2h-4zM212 429h1v2h-1zM591 639h1v2h-1zM714 506h4v2h-4zM584 461h5v2h-5zM515 74h3v2h-3zM588 167h2v2h-2zM25 317h3v1h-3zM112 211h1v2h-1zM494 564h3v3h-3zM196 731h4v3h-4zM757 29h1v1h-1zM37 341h3v2h-3zM286 230h2v1h-2zM350 127h5v1h-5zM191 454h2v3h-2zM587 287h4v2h-4zM686 573h4v2h-4zM765 71h1v1h-1zM483 760h3v3h-3zM562 657h5v3h-5zM328 44h3v1h-3zM780 264h4v1h-4zM404 641h3v3h-3zM782 144h2v2h-2zM412 410h3v2h-3zM646 68h1v1h-1zM555 479h4v2h-4zM506 533h4v2h-4zM311 203h2v3h-2zM146 344h5v1h-5zM375 153h2v1h-2zM230 110h1v1h-1zM688 696h4v2h-4zM330 611h2v1h-2zM111 90h1v1h-1zM98 579h1v3h-1zM647 562h3v2h-3zM239 693h4v1h-4zM42 455h2v2h-2zM172 493h5v2h-5zM405 293h2v2h-2zM204 481h1v1h-1zM801 202h4v2h-4zM206 630h3v3h-3zM276 521h4v1h-4zM469 198h1v1h-1zM560 84h2v2h-2zM455 592h2v3h-2zM491 506h5v2h-5zM574 453h2v2h-2zM141 28h3v2h-3zM442 330h1v2h-1zM651 585h5v2h-5zM381 524h3v2h-3zM517 326h2v1h-2zM312 168h1v2h-1zM266 742h3v2h-3zM511 747h4v2h-4zM757 751h2v2h-2zM521 413h5v3h-5zM237 297h5v1h-5zM159 70h1v2h-1zM278 301h2v1h-2zM142 68h5v1h-5zM656 230h3v3h-3zM588 178h5v1h-5zM524 475h3v1h-3zM72 121h3v3h-3zM248 196h2v2h-2zM11 486h3v2h-3zM87 326h3v1h-3zM123 301h1v2h-1zM94 603h5v1h-5zM604 738h2v2h-2zM554 215h2v1h-2zM631 174h4v2h-4zM665 377h1v1h-1zM677 157h5v3h-5zM231 319h1v1h-1zM81 246h3v3h-3zM741 577h3v1h-3zM250 348h2v2h-2zM352 390h2v1h-2zM757 626h5v3h-5zM698 674h5v1h-5zM597 53h2v1h-2zM83 518h2v2h-2zM487 375h3v3h-3zM520 361h2v1h-2zM134 647h5v1h-5zM461 463h1v2h-1zM112 148h1v3h-1zM587 283h4v2h-4zM132 745h4v2h-4zM482 67h2v1h-2zM163 249h2v1h-2zM581 746h5v1h-5zM790 190h2v3h-2zM653 738h2v3h-2zM500 109h3v3h-3zM455 750h5v1h-5zM177 769h2v2h-2zM668 206h2v3h-2zM363 332h2v1h-2zM692 136h1v1h-1zM790 553h1v3h-1zM384 109h3v3h-3zM526 643h3v3h-3zM295 461h3v1h-3zM322 741h1v2h-1zM521 733h1v1h-1zM290 655h2v1h-2zM624 55h2v2h-2zM99 583h2v1h-2zM160 451h3v3h-3zM576 192h4v1h-4zM429 741h3v2h-3zM243 511h1v1h-1zM187 728h4v2h-4zM532 264h5v2h-5zM794 106h5v3h-5zM57 348h1v2h-1zM525 301h3v2h-3zM496 591h4v1h-4zM806 120h1v2h-1zM721 308h4v3h-4zM396 406h5v1h-5zM621 137h2v2h-2zM133 318h2v2h-2zM246 439h5v2h-5zM211 369h2v3h-2zM668 25h4v3h-4zM9 253h5v2h-5zM325 761h5v1h-5zM462 272h2v2h-2zM338 105h2v3h-2zM15 510h4v2h-4zM524 320h2v1h-2zM589 630h3v2h-3zM244 83h4v2h-4zM302 410h1v1h-1zM472 236h5v2h-5zM115 366h5v2h-5zM755 88h4v2h-4zM670 374h2v2h-2zM148 52h3v2h-3zM8 418h1v3h-1zM236 363h2v1h-2zM59 213h2v3h-2zM303 53h3v2h-3zM160 651h2v3h-2zM322 569h4v2h-4zM370 413h2v1h-2zM270 524h2v2h-2zM274 328h4v1h-4zM446 460h5v2h-5zM511 547h4v3h-4zM313 75h4v1h-4zM226 553h3v1h-3zM785 605h2v2h-2zM745 445h3v1h-3zM483 295h5v1h-5zM144 674h3v1h-3zM728 667h3v1h-3zM445 102h3v1h-3zM147 579h2v3h-2zM696 42h1v3h-1zM13 43h4v2h-4zM366 412h3v1h-3zM162 629h3v2h-3zM466 487h5v1h-5zM649 659h3v3h-3zM112 231h2v1h-2zM245 396h3v3h-3zM649 180h5v3h-5zM112 669h2v2h-2zM15 274h3v1h-3zM397 311h4v2h-4zM244 408h3v3h-3zM170 727h5v1h-5zM535 558h4v2h-4zM763 139h3v2h-3zM268 426h1v3h-1zM759 293h3v2h-3zM383 703h2v3h-2zM359 234h2v3h-2zM593 553h5v1h-5zM812 735h1v3h-1zM68 170h1v1h-1zM338 208h5v2h-5zM478 478h4v1h-4zM86 134h1v2h-1zM393 617h3v1h-3zM739 181h4v2h-4zM635 310h3v1h-3zM792 316h2v1h-2zM786 249h1v2h-1zM9 637h3v2h-3zM147 435h3v2h-3zM788 127h4v3h-4zM152 581h2v3h-2zM245 190h2v2h-2zM228 511h5v3h-5zM540 80h5v2h-5zM277 583h5v1h-5zM673 267h3v1h-3zM415 414h2v1h-2zM116 82h1v1h-1zM109 212h5v3h-5zM464 257h2v2h-2zM582 282h4v1h-4zM121 652h2v1h-2zM515 102h3v2h-3zM187 29h3v3h-3zM26 540h3v1h-3zM320 192h2v1h-2zM72 538h5v3h-5zM676 754h2v3h-2zM172 743h2v1h-2zM565 764h5v2h-5zM419 87h5v1h-5zM371 655h1v2h-1zM441 411h2v2h-2zM323 369h3v2h-3zM697 252h2v3h-2zM71 385h1v1h-1zM426 537h3v3h-3zM404 548h4v1h-4zM386 87h2v3h-2zM301 666h3v1h-3zM771 198h3v2h-3zM644 372h3v1h-3zM466 127h2v3h-2zM230 101h5v1h-5zM41 684h2v2h-2zM307 593h4v1h-4zM659 390h2v3h-2zM740 143h3v2h-3zM647 460h2v2h-2zM14 578h2v3h-2zM788 417h3v3h-3zM210 744h3v2h-3zM4 42h3v1h-3zM329 549h1v1h-1zM731 742h5v3h-5zM78 365h4v3h-4zM672 174h5v1h-5zM342 434h2v2h-2zM323 133h2v1h-2zM705 707h2v1h-2zM164 633h5v1h-5zM704 140h1v3h-1zM561 263h1v3h-1zM59 626h2v3h-2zM231 53h3v1h-3zM502 472h3v2h-3zM664 256h1v3h-1zM43 589h3v2h-3zM591 636h3v3h-3zM230 229h3v1h-3zM337 378h2v2h-2zM457 415h3v2h-3zM112 378h5v1h-5zM84 49h1v2h-1zM778 650h4v2h-4zM113 723h2v1h-2zM174 627h5v1h-5zM785 747h5v2h-5zM216 190h2v1h-2zM286 290h4v2h-4zM241 704h5v3h-5zM712 439h1v2h-1zM93 56h3v2h-3zM341 286h2v2h-2zM467 333h2v1h-2zM550 132h2v1h-2zM247 390h5v2h-5zM202 609h3v2h-3zM193 598h3v1h-3zM414 363h2v2h-2zM699 427h2v2h-2zM498 452h4v2h-4zM371 164h2v1h-2zM805 141h2v1h-2zM527 665h3v3h-3zM122 290h5v2h-5zM569 451h3v1h-3zM546 604h2v1h-2zM84 521h5v1h-5zM267 195h2v2h-2zM148 440h2v1h-2zM266 498h5v1h-5zM353 153h2v2h-2zM288 224h1v3h-1zM574 501h2v1h-2zM782 26h3v1h-3zM368 465h2v3h-2zM271 262h3v1h-3zM205 109h2v3h-2zM451 325h5v1h-5zM450 40h4v1h-4zM433 37h2v1h-2zM176 344h2v1h-2zM678 703h3v2h-3zM260 460h1v2h-1zM590 209h2v1h-2zM568 773h2v2h-2zM38 723h5v2h-5zM644 95h3v3h-3zM183 735h2v1h-2zM576 605h2v3h-2zM123 533h1v3h-1zM547 545h5v1h-5zM346 758h5v3h-5zM488 646h2v2h-2zM368 91h3v3h-3zM106 727h2v2h-2zM20 229h2v1h-2zM708 665h2v2h-2zM738 689h2v3h-2zM160 268h1v1h-1zM723 395h3v2h-3zM600 119h1v3h-1zM435 502h2v2h-2zM326 203h2v1h-2zM447 638h2v1h-2zM801 109h5v1h-5zM32 118h5v2h-5zM466 601h4v1h-4zM504 436h3v2h-3zM476 730h5v2h-5zM87 385h5v1h-5zM189 549h5v3h-5zM553 762h4v2h-4zM522 172h2v1h-2zM621 761h3v2h-3zM225 100h2v2h-2zM43 759h4v1h-4zM279 215h2v1h-2zM729 126h2v1h-2zM295 530h1v3h-1zM144 393h3v3h-3zM307 340h4v1h-4zM453 166h2v2h-2zM221 36h3v1h-3zM90 516h4v1h-4zM423 507h3v1h-3zM593 184h2v2h-2zM471 313h3v1h-3zM597 321h4v3h-4zM91 640h5v2h-5zM510 642h2v2h-2zM191 223h3v3h-3zM16 127h3v3h-3zM456 724h2v3h-2zM714 301h3v3h-3zM367 383h5v1h-5zM585 235h3v1h-3zM265 321h4v2h-4zM543 441h5v2h-5zM646 721h5v1h-5zM655 552h2v1h-2zM181 566h2v3h-2zM547 189h2v2h-2zM768 289h2v2h-2zM50 720h1v2h-1zM86 589h2v2h-2zM328 685h3v3h-3zM117 601h5v3h-5zM727 322h5v2h-5zM151 33h4v3h-4zM292 503h2v3h-2zM642 510h2v3h-2zM153 573h2v3h-2zM10 402h2v1h-2zM549 651h2v1h-2zM806 361h4v2h-4zM745 504h5v2h-5zM681 334h2v2h-2zM638 282h1v1h-1zM11 250h1v1h-1zM225 198h2v2h-2zM286 326h3v3h-3zM735 384h4v3h-4zM163 588h3v3h-3zM648 257h2v1h-2zM684 30h2v2h-2zM45 729h2v2h-2zM579 480h3v2h-3zM41 391h4v2h-4zM781 299h1v3h-1zM86 350h2v2h-2zM100 231h1v2h-1zM423 316h2v1h-2zM680 49h5v1h-5zM589 591h3v2h-3zM528 182h2v1h-2zM364 594h3v3h-3zM794 198h3v2h-3zM712 223h4v1h-4zM49 368h2v1h-2zM434 770h1v1h-1zM491 636h4v2h-4zM65 162h3v2h-3zM695 114h3v3h-3zM689 379h4v1h-4zM565 587h3v1h-3zM661 53h2v2h-2zM186 190h3v1h-3zM416 293h3v3h-3zM546 484h4v1h-4zM34 488h4v2h-4zM249 179h3v3h-3zM541 138h2v2h-2zM755 60h4v1h-4zM223 399h4v2h-4zM739 401h2v2h-2zM7 741h3v2h-3zM266 753h1v2h-1zM144 201h4v1h-4zM438 386h5v2h-5zM771 187h1v2h-1zM346 628h2v2h-2zM169 178h1v2h-1zM508 46h2v3h-2zM618 524h2v2h-2zM18 672h1v2h-1zM247 110h2v1h-2zM496 577h3v3h-3zM322 160h2v1h-2zM371 200h3v1h-3zM96 771h1v1h-1zM631 426h2v1h-2zM657 612h5v2h-5zM228 603h5v2h-5zM347 149h1v2h-1zM26 763h3v2h-3zM540 274h3v1h-3zM700 295h5v3h-5zM785 750h4v3h-4zM82 454h5v3h-5zM155 27h5v2h-5zM363 593h5v1h-5zM704 27h1v3h-1zM250 36h1v2h-1zM599 645h5v2h-5zM771 526h3v3h-3zM643 528h2v1h-2zM579 713h3v2h-3zM368 222h2v1h-2zM658 328h4v1h-4zM63 459h5v1h-5zM746 214h2v1h-2zM487 321h2v1h-2zM653 88h2v1h-2zM463 37h1v1h-1zM624 220h2v2h-2zM416 298h4v1h-4zM525 685h2v1h-2zM16 346h1v2h-1zM690 574h3v1h-3zM784 385h3v2h-3zM407 419h3v1h-3zM733 464h2v1h-2zM757 742h2v1h-2zM621 60h5v2h-5zM269 215h2v2h-2zM378 695h2v1h-2zM396 127h2v3h-2zM772 716h1v1h-1zM746 779h3v1h-3zM708 44h3v1h-3zM595 584h5v1h-5zM171 305h2v2h-2zM163 385h1v2h-1zM789 159h3v1h-3zM419 67h2v1h-2zM88 246h2v2h-2zM542 283h1v1h-1zM467 411h1v1h-1zM728 264h3v3h-3zM174 366h5v2h-5zM25 670h3v2h-3zM76 749h4v2h-4zM132 735h5v1h-5zM180 374h3v1h-3zM800 632h2v2h-2zM320 716h1v3h-1zM618 470h2v1h-2zM172 242h3v2h-3zM545 269h4v1h-4zM748 323h2v1h-2zM369 469h2v3h-2zM562 636h3v2h-3zM629 222h5v1h-5zM254 201h3v1h-3zM537 317h2v2h-2zM498 434h5v2h-5zM195 448h2v1h-2zM228 572h3v2h-3zM317 549h4v1h-4zM421 278h3v2h-3zM345 108h3v3h-3zM740 108h1v1h-1zM429 704h3v1h-3zM355 174h5v2h-5zM357 50h4v1h-4zM588 440h4v2h-4zM696 233h1v1h-1zM748 606h4v1h-4zM257 593h5v1h-5zM246 273h5v2h-5zM325 506h3v2h-3zM90 468h2v3h-2zM569 301h2v2h-2zM23 79h5v1h-5zM791 314h3v2h-3zM722 200h2v1h-2zM96 103h1v2h-1zM236 425h2v1h-2zM506 137h1v1h-1zM246 91h2v2h-2zM46 317h3v1h-3zM267 568h4v2h-4zM305 451h3v2h-3zM53 179h4v2h-4zM385 151h1v2h-1zM23 145h3v1h-3zM438 698h1v2h-1zM613 385h5v3h-5zM544 682h3v1h-3zM32 222h4v3h-4zM786 471h2v2h-2zM746 371h2v2h-2zM173 563h4v2h-4zM708 741h1v2h-1zM592 363h4v3h-4zM604 72h1v3h-1zM451 627h3v1h-3zM235 192h5v3h-5zM383 366h2v3h-2zM56 405h3v2h-3zM538 438h2v1h-2zM608 353h2v2h-2zM600 503h3v1h-3zM596 287h5v3h-5zM688 401h1v1h-1zM423 762h4v1h-4zM645 361h1v1h-1zM255 513h4v2h-4zM116 313h2v3h-2zM247 197h5v3h-5zM316 228h5v2h-5zM134 540h2v2h-2zM453 474h4v1h-4zM211 251h2v2h-2zM481 44h3v1h-3zM183 519h3v2h-3zM728 245h5v3h-5zM290 700h5v1h-5zM104 119h5v2h-5zM382 209h3v1h-3zM361 391h4v2h-4zM118 35h2v2h-2zM628 132h5v1h-5zM254 482h4v1h-4zM456 598h4v3h-4zM233 133h5v1h-5zM240 155h2v2h-2zM621 474h3v3h-3zM250 733h5v1h-5zM513 519h1v2h-1zM478 658h3v1h-3zM768 392h2v2h-2zM302 446h5v1h-5zM75 580h2v1h-2zM103 699h4v2h-4zM259 118h2v1h-2zM589 745h3v1h-3zM474 554h3v2h-3zM531 87h3v2h-3zM195 148h5v2h-5zM167 637h3v1h-3zM706 302h3v2h-3zM379 186h1v1h-1zM595 169h3v3h-3zM713 665h1v1h-1zM408 476h5v2h-5zM724 445h3v1h-3zM399 273h5v1h-5zM14 491h5v2h-5zM88 244h4v1h-4zM610 678h1v2h-1zM543 602h5v1h-5zM399 415h3v1h-3zM72 340h2v1h-2zM117 183h4v2h-4zM329 314h2v2h-2zM796 160h2v3h-2zM588 282h1v3h-1zM674 464h5v3h-5zM357 335h3v1h-3zM761 58h5v1h-5zM91 179h1v1h-1zM799 202h5v1h-5zM705 242h2v3h-2zM113 173h5v3h-5zM720 457h4v1h-4zM449 78h5v2h-5zM711 151h2v2h-2zM418 586h3v3h-3zM541 553h5v1h-5zM55 40h4v2h-4zM98 437h2v2h-2zM531 79h3v1h-3zM172 651h4v2h-4zM14 134h2v3h-2zM109 408h1v3h-1zM556 166h1v1h-1zM242 693h5v2h-5zM497 516h2v2h-2zM401 153h1v1h-1zM531 426h5v2h-5zM119 506h2v3h-2zM705 681h1v1h-1zM602 536h2v1h-2zM178 423h2v1h-2zM465 432h3v2h-3zM422 472h4v2h-4zM469 177h4v3h-4zM178 331h1v3h-1zM498 777h1v2h-1zM770 309h2v1h-2zM53 131h2v1h-2zM528 173h1v2h-1zM505 164h2v1h-2zM305 487h3v3h-3zM66 672h2v1h-2zM378 363h2v2h-2zM672 592h4v3h-4zM553 58h3v1h-3zM71 604h5v2h-5zM539 268h5v2h-5zM516 188h1v1h-1zM279 397h3v1h-3zM402 625h2v1h-2zM267 651h2v2h-2zM295 149h5v1h-5zM738 128h2v2h-2zM547 674h2v2h-2zM138 185h2v1h-2zM340 731h2v1h-2zM460 640h4v1h-4zM295 345h5v2h-5zM271 650h3v2h-3zM773 34h5v1h-5zM112 538h3v1h-3zM6 459h3v1h-3zM291 386h3v3h-3zM755 33h3v1h-3zM114 146h3v1h-3zM79 662h1v1h-1zM313 236h3v1h-3zM83 773h2v3h-2zM527 457h5v1h-5zM604 164h3v2h-3zM795 630h2v1h-2zM229 414h5v1h-5zM801 673h5v1h-5zM41 482h2v2h-2zM402 75h4v1h-4zM735 97h2v3h-2zM405 450h3v1h-3zM246 666h3v2h-3zM802 45h2v1h-2zM123 161h1v2h-1zM374 237h2v2h-2zM112 192h2v1h-2zM361 25h2v3h-2zM525 440h1v1h-1zM110 120h3v2h-3zM514 720h3v1h-3zM156 474h4v1h-4zM573 467h4v2h-4zM323 553h1v2h-1zM284 625h1v3h-1zM23 502h4v3h-4zM548 85h5v1h-5zM501 146h2v1h-2zM547 393h1v1h-1zM188 513h3v3h-3zM593 38h2v1h-2zM656 746h5v1h-5zM338 549h1v2h-1zM8 327h2v3h-2zM617 317h1v3h-1zM636 75h3v2h-3zM442 29h5v1h-5zM584 213h2v1h-2zM168 455h2v1h-2zM134 175h3v2h-3zM553 452h1v1h-1zM64 155h5v2h-5zM307 269h3v2h-3zM209 554h4v2h-4zM110 639h3v2h-3zM526 470h1v3h-1zM665 511h5v1h-5zM218 507h3v2h-3zM455 747h3v2h-3zM281 578h1v3h-1zM517 732h3v1h-3zM126 510h5v2h-5zM218 408h3v2h-3zM154 55h5v1h-5zM809 233h3v2h-3zM721 62h1v2h-1zM385 257h4v3h-4zM323 143h2v2h-2zM343 339h2v3h-2zM264 713h3v1h-3zM57 323h3v2h-3zM140 365h4v1h-4zM544 505h3v1h-3zM168 358h2v2h-2zM480 569h2v3h-2zM761 403h2v1h-2zM283 205h3v1h-3zM178 234h5v2h-5zM631 384h2v2h-2zM234 163h5v1h-5zM47 83h2v2h-2zM389 499h3v2h-3zM258 567h4v1h-4zM526 578h3v2h-3zM774 776h4v1h-4zM627 732h2v1h-2zM669 752h3v3h-3zM382 528h1v3h-1zM796 31h5v1h-5zM269 572h1v3h-1zM441 615h4v2h-4zM462 69h5v2h-5zM100 226h3v3h-3zM359 664h1v2h-1zM334 472h1v3h-1zM102 567h2v1h-2zM309 82h1v3h-1zM214 193h2v1h-2zM803 318h3v2h-3zM674 739h4v1h-4zM420 238h3v3h-3zM321 218h2v2h-2zM708 269h4v2h-4zM498 141h5v1h-5zM209 425h5v3h-5zM551 228h5v1h-5zM236 164h2v2h-2zM525 417h1v2h-1zM799 375h5v3h-5zM537 411h4v2h-4zM754 611h1v2h-1zM372 557h1v2h-1zM58 341h3v1h-3zM554 426h2v1h-2zM495 547h3v2h-3zM134 639h2v2h-2zM258 724h2v2h-2zM314 510h1v1h-1zM286 390h2v3h-2zM738 428h4v2h-4zM733 332h3v1h-3zM416 444h2v1h-2zM590 758h3v1h-3zM544 300h4v1h-4zM740 167h3v1h-3zM378 349h4v3h-4zM762 441h3v2h-3zM112 67h4v1h-4zM595 713h4v1h-4zM709 687h2v3h-2zM759 416h3v2h-3zM754 309h4v1h-4zM229 492h1v1h-1zM293 208h5v1h-5zM461 90h3v2h-3zM573 641h3v1h-3zM128 707h5v1h-5zM721 276h2v2h-2zM611 169h3v2h-3zM286 755h1v1h-1zM521 747h3v2h-3zM288 691h2v2h-2zM778 344h3v1h-3zM260 191h2v2h-2zM179 223h2v1h-2zM35 363h4v1h-4zM337 209h1v1h-1zM464 639h5v2h-5zM450 302h4v1h-4zM620 726h4v1h-4zM72 257h2v2h-2zM580 180h1v1h-1zM348 469h2v2h-2zM201 526h2v1h-2zM298 333h2v2h-2zM226 162h3v1h-3zM551 563h2v1h-2zM509 85h1v2h-1zM278 608h3v3h-3zM12 181h3v1h-3zM250 149h1v2h-1zM684 200h4v2h-4zM807 504h1v1h-1zM727 702h3v1h-3zM680 141h3v3h-3zM150 457h4v1h-4zM193 265h4v2h-4zM665 173h1v1h-1zM505 444h3v1h-3zM271 723h5v1h-5zM792 179h2v3h-2zM511 629h3v1h-3zM356 752h3v1h-3zM618 208h3v2h-3zM429 720h1v1h-1zM717 260h4v3h-4zM412 563h5v1h-5zM71 256h5v2h-5zM255 388h2v3h-2zM384 354h3v2h-3zM233 187h3v2h-3zM200 288h2v2h-2zM511 521h3v1h-3zM341 754h3v1h-3zM732 258h5v1h-5zM355 615h1v3h-1zM481 619h3v3h-3zM610 174h3v2h-3zM359 320h3v2h-3zM32 676h2v1h-2zM647 304h3v2h-3zM112 225h2v2h-2zM464 758h2v1h-2zM354 541h4v1h-4zM597 330h1v3h-1zM785 46h4v1h-4zM196 560h2v2h-2zM376 481h4v3h-4zM737 575h3v2h-3zM273 302h3v2h-3zM643 567h3v2h-3zM701 76h2v3h-2zM471 165h3v3h-3zM37 638h2v3h-2zM613 122h2v2h-2zM259 444h2v2h-2zM582 185h5v1h-5zM633 761h2v3h-2zM491 677h2v3h-2zM785 744h2v3h-2zM10 75h4v2h-4zM664 58h4v1h-4zM808 517h3v1h-3zM524 751h3v3h-3zM35 349h4v1h-4zM812 156h2v1h-2zM457 203h5v3h-5zM795 178h2v1h-2zM493 699h4v1h-4zM373 653h2v3h-2zM52 755h2v1h-2zM497 382h5v3h-5zM246 449h3v2h-3zM179 93h1v2h-1zM177 756h3v2h-3zM248 213h3v2h-3zM105 617h3v1h-3zM495 365h5v2h-5zM769 424h2v1h-2zM270 763h3v3h-3zM217 628h2v1h-2zM485 419h2v3h-2zM221 613h2v2h-2zM97 119h4v1h-4zM124 706h5v3h-5zM380 523h2v2h-2zM147 179h3v1h-3zM186 727h1v2h-1zM308 54h2v1h-2zM379 547h3v1h-3zM763 613h2v2h-2zM246 257h2v2h-2zM485 259h5v3h-5zM70 612h5v3h-5zM805 276h5v2h-5zM718 283h2v2h-2zM268 149h4v1h-4zM163 107h3v3h-3zM534 484h3v2h-3zM643 389h5v1h-5zM562 141h5v2h-5zM70 130h3v1h-3zM382 407h2v1h-2zM625 645h1v2h-1zM454 638h2v2h-2zM524 421h3v1h-3zM96 767h2v1h-2zM347 110h5v2h-5zM241 47h2v1h-2zM510 602h2v3h-2zM796 744h1v2h-1zM526 422h2v2h-2zM187 275h5v2h-5zM517 475h1v1h-1zM606 667h3v1h-3zM338 495h2v2h-2zM7 546h4v1h-4zM22 94h5v2h-5zM46 326h3v1h-3zM160 737h3v2h-3zM808 455h4v1h-4zM383 160h4v1h-4zM663 198h4v1h-4zM752 678h3v1h-3zM676 777h3v3h-3zM34 284h3v2h-3zM84 224h3v2h-3zM261 216h5v1h-5zM110 774h2v1h-2zM98 475h5v1h-5zM8 246h2v1h-2zM748 235h1v1h-1zM304 521h1v2h-1zM125 569h2v3h-2zM52 227h4v1h-4zM770 480h2v1h-2zM200 498h3v1h-3zM38 495h3v2h-3zM485 334h1v3h-1zM182 330h3v2h-3zM481 81h1v2h-1zM350 560h3v3h-3zM693 366h2v1h-2zM405 708h4v2h-4zM401 347h2v1h-2zM695 560h4v1h-4zM242 174h5v1h-5zM26 173h2v1h-2zM329 140h3v3h-3zM497 343h5v3h-5zM724 569h4v1h-4zM392 63h5v2h-5zM204 53h2v2h-2zM72 294h3v1h-3zM730 698h1v1h-1zM684 336h3v2h-3zM520 694h2v2h-2zM199 383h2v2h-2zM282 477h5v2h-5zM623 290h4v2h-4zM302 138h5v1h-5zM437 493h5v2h-5zM673 188h5v3h-5zM750 179h3v1h-3zM403 605h2v3h-2zM251 323h2v3h-2zM224 594h3v1h-3zM627 471h1v1h-1zM226 141h3v3h-3zM627 582h2v2h-2zM195 241h3v1h-3zM754 197h2v2h-2zM59 635h1v1h-1zM326 116h2v2h-2zM307 484h3v3h-3zM559 466h3v2h-3zM259 360h5v1h-5zM179 29h3v2h-3zM271 593h1v2h-1zM777 83h2v2h-2zM353 105h2v1h-2zM98 182h5v1h-5zM275 167h2v2h-2zM307 144h4v3h-4zM601 685h2v1h-2zM110 514h4v1h-4zM705 362h1v1h-1zM98 407h2v1h-2zM742 676h5v2h-5zM583 284h5v1h-5zM761 504h2v1h-2zM3 714h2v2h-2zM232 145h2v1h-2zM330 711h3v2h-3zM328 717h3v1h-3zM297 556h5v1h-5zM228 762h1v1h-1zM712 219h3v3h-3zM371 239h3v1h-3zM659 423h3v3h-3zM672 392h3v3h-3zM354 296h3v2h-3zM395 374h4v2h-4zM567 376h5v2h-5z"/><path fill="#121284" d="M582 151h2v3h-2zM593 624h3v1h-3zM596 492h1v1h-1zM721 342h4v3h-4zM131 732h5v3h-5zM583 179h3v1h-3zM488 150h1v2h-1zM89 767h2v1h-2zM152 651h5v3h-5zM532 663h2v3h-2zM127 489h1v2h-1zM280 380h5v1h-5zM45 161h4v2h-4zM295 675h2v1h-2zM403 565h5v2h-5zM41 685h4v2h-4zM243 585h2v1h-2zM519 94h2v2h-2zM289 107h2v2h-2zM216 123h3v2h-3zM668 127h4v2h-4zM351 169h1v1h-1zM403 770h3v1h-3zM370 151h2v1h-2zM470 172h2v3h-2zM546 74h4v2h-4zM211 139h1v1h-1zM506 736h5v1h-5zM359 189h2v2h-2zM267 771h1v1h-1zM107 225h3v1h-3zM313 435h3v1h-3zM18 698h1v1h-1zM479 408h3v2h-3zM430 513h3v2h-3zM147 610h2v2h-2zM460 632h5v3h-5zM263 63h2v1h-2zM381 747h3v2h-3zM462 188h2v1h-2zM230 201h1v2h-1zM770 168h5v2h-5zM296 147h2v1h-2zM65 323h5v1h-5zM553 162h1v1h-1zM784 136h3v1h-3zM795 344h3v3h-3zM602 646h4v1h-4zM356 113h3v2h-3zM76 71h1v2h-1zM771 522h1v2h-1zM580 295h1v2h-1zM646 747h3v1h-3zM509 458h3v1h-3zM550 665h5v1h-5zM705 426h3v1h-3zM384 67h1v3h-1zM605 281h3v2h-3zM319 692h5v3h-5zM580 410h3v2h-3zM452 211h3v1h-3zM684 758h3v2h-3zM18 295h2v1h-2zM328 577h3v2h-3zM263 735h3v2h-3zM11 570h1v2h-1zM479 122h2v1h-2zM363 150h4v1h-4zM178 182h5v2h-5zM705 364h4v1h-4zM641 364h3v2h-3zM336 519h2v1h-2zM560 51h3v3h-3zM322 79h3v2h-3zM319 121h2v3h-2zM232 326h4v2h-4zM685 81h5v2h-5zM592 161h3v2h-3zM217 681h2v3h-2zM806 492h2v1h-2zM586 702h2v1h-2zM335 263h3v1h-3zM215 580h3v2h-3zM406 412h2v1h-2zM253 684h5v1h-5zM27 759h2v2h-2zM437 548h1v2h-1zM163 592h4v1h-4zM728 208h3v1h-3zM691 227h2v1h-2zM748 703h3v2h-3zM328 435h4v2h-4zM477 517h5v3h-5zM100 401h3v1h-3zM146 535h3v2h-3zM704 737h2v2h-2zM622 219h2v2h-2zM127 298h3v3h-3zM441 397h5v1h-5zM604 71h3v1h-3zM420 114h3v2h-3zM46 387h1v2h-1zM366 547h3v3h-3zM281 475h3v2h-3zM246 242h3v2h-3zM721 381h3v2h-3zM755 114h5v1h-5zM383 131h3v1h-3zM322 452h1v3h-1zM408 217h3v1h-3zM276 235h3v1h-3zM568 674h4v3h-4zM549 71h4v2h-4zM651 559h5v2h-5zM508 773h3v1h-3zM506 637h2v1h-2zM438 217h4v1h-4zM19 564h3v2h-3zM526 572h3v1h-3zM438 685h2v1h-2zM281 163h2v2h-2zM282 649h1v1h-1zM616 701h3v2h-3zM132 580h3v1h-3zM67 497h3v2h-3zM263 381h1v1h-1zM762 494h3v1h-3zM297 588h1v3h-1zM114 50h5v2h-5zM128 538h3v3h-3zM715 239h3v3h-3zM627 316h5v1h-5zM119 166h2v3h-2zM671 102h5v2h-5zM479 529h2v2h-2zM781 403h5v1h-5zM385 343h2v3h-2zM524 268h2v2h-2zM140 778h5v1h-5zM230 694h3v1h-3zM635 109h4v2h-4zM270 530h1v1h-1zM668 553h3v2h-3zM239 41h3v1h-3zM96 126h2v3h-2zM344 713h3v2h-3zM331 528h2v2h-2zM775 508h1v1h-1zM461 42h2v1h-2zM73 277h4v2h-4zM459 626h3v2h-3zM442 523h4v1h-4zM418 333h3v3h-3zM294 637h4v1h-4zM105 164h5v1h-5zM7 179h5v2h-5zM500 633h3v2h-3zM501 412h2v2h-2zM399 318h2v2h-2zM685 270h2v1h-2zM334 400h5v2h-5zM363 649h3v1h-3zM107 294h4v1h-4zM314 468h2v1h-2zM578 612h1v1h-1zM127 263h4v1h-4zM527 155h2v1h-2zM489 733h2v1h-2zM787 331h3v2h-3zM407 747h5v1h-5zM227 680h3v1h-3zM691 581h2v2h-2zM812 86h5v1h-5zM154 114h1v2h-1zM238 151h5v3h-5zM593 536h3v1h-3zM379 404h4v1h-4zM84 305h5v1h-5zM63 486h2v3h-2zM404 182h4v1h-4zM105 681h1v1h-1zM60 487h5v3h-5zM40 613h5v3h-5zM571 279h4v3h-4zM164 678h4v2h-4zM341 153h2v2h-2zM775 84h5v1h-5zM769 681h4v3h-4zM574 460h2v3h-2zM594 404h2v2h-2zM620 103h3v3h-3zM144 433h1v2h-1zM454 412h2v2h-2zM371 225h1v3h-1zM359 89h3v2h-3zM156 572h2v2h-2zM168 769h2v1h-2zM204 756h3v2h-3zM193 332h3v2h-3zM551 220h3v1h-3zM638 224h5v1h-5zM490 336h2v1h-2zM329 76h5v2h-5zM740 570h3v1h-3zM529 774h3v1h-3zM123 648h5v2h-5zM327 132h3v1h-3zM499 302h2v3h-2zM278 419h2v1h-2zM208 89h2v1h-2zM94 57h3v2h-3zM446 710h2v2h-2zM612 250h3v3h-3zM734 767h1v1h-1zM671 149h4v1h-4zM210 435h5v1h-5zM673 92h5v1h-5zM691 423h1v2h-1zM730 293h1v3h-1zM331 314h3v1h-3zM288 65h2v3h-2zM561 507h3v2h-3zM624 343h3v1h-3zM304 29h3v1h-3zM621 175h3v1h-3zM549 405h2v1h-2zM47 630h2v1h-2zM63 325h1v3h-1zM709 489h2v1h-2zM27 611h3v1h-3zM63 343h2v1h-2zM677 153h3v1h-3zM288 246h2v1h-2zM722 320h5v2h-5zM646 189h2v1h-2zM525 488h2v2h-2zM192 670h3v3h-3zM757 107h5v2h-5zM664 394h4v2h-4zM375 743h5v1h-5zM411 649h5v1h-5zM641 632h4v2h-4zM541 26h3v2h-3zM444 185h2v1h-2zM697 635h4v2h-4zM60 700h1v2h-1zM786 413h2v1h-2zM767 191h5v1h-5zM72 65h3v2h-3zM748 756h5v2h-5zM277 667h1v1h-1zM510 575h1v1h-1zM505 469h2v1h-2zM350 180h4v3h-4zM449 344h2v2h-2zM667 671h5v1h-5zM500 753h3v1h-3zM781 367h2v3h-2zM476 388h3v1h-3zM625 149h2v3h-2zM492 537h3v2h-3zM157 32h4v3h-4zM339 525h1v2h-1zM496 744h2v3h-2zM332 693h5v2h-5zM455 399h4v1h-4zM387 335h2v1h-2zM392 119h2v3h-2zM594 185h5v1h-5zM38 680h2v3h-2zM124 562h2v3h-2zM226 267h5v2h-5zM107 681h5v2h-5zM45 694h2v2h-2zM84 771h1v2h-1zM290 495h4v2h-4zM234 306h1v1h-1zM230 424h5v2h-5zM92 282h2v1h-2zM284 72h2v2h-2zM87 446h3v2h-3zM761 621h3v3h-3zM337 636h1v1h-1zM299 702h2v1h-2zM407 138h4v2h-4zM675 227h4v2h-4zM501 460h3v1h-3zM698 282h1v2h-1zM545 94h2v2h-2zM733 372h3v1h-3zM86 679h2v3h-2zM796 634h3v2h-3zM659 444h2v2h-2zM138 743h2v1h-2zM458 448h4v2h-4zM700 498h5v2h-5zM777 112h2v2h-2zM589 363h3v3h-3zM599 636h1v2h-1zM216 748h1v1h-1zM135 343h4v2h-4zM770 398h3v1h-3zM466 704h4v3h-4zM78 34h3v2h-3zM644 235h3v1h-3zM593 185h3v3h-3zM625 515h2v2h-2zM121 443h4v1h-4zM731 173h2v2h-2zM609 64h2v1h-2zM350 676h1v3h-1zM71 454h4v1h-4zM794 623h1v3h-1zM170 373h3v3h-3zM144 215h1v2h-1zM166 305h4v1h-4zM165 331h1v1h-1zM90 68h4v2h-4zM566 314h1v2h-1zM461 654h2v1h-2zM165 241h2v3h-2zM611 590h5v1h-5zM627 377h3v1h-3zM202 95h2v2h-2zM413 723h2v1h-2zM330 762h3v2h-3zM481 540h4v3h-4zM493 262h4v2h-4zM647 691h1v3h-1zM487 178h3v1h-3zM711 58h2v1h-2zM665 269h5v1h-5zM769 469h3v1h-3zM660 699h3v1h-3zM752 380h1v3h-1zM326 658h2v1h-2zM21 706h3v1h-3zM676 244h3v3h-3zM344 346h3v2h-3zM779 91h4v1h-4zM70 57h1v2h-1zM496 80h1v2h-1zM100 453h1v1h-1zM563 410h3v3h-3zM612 232h2v1h-2zM629 40h3v2h-3zM120 737h3v1h-3zM550 127h3v2h-3zM325 311h3v2h-3zM430 593h3v1h-3zM638 416h1v2h-1zM92 275h3v1h-3zM145 344h2v2h-2zM591 599h2v2h-2zM809 628h3v1h-3zM697 455h2v2h-2zM175 734h3v2h-3zM575 631h3v1h-3zM690 654h2v2h-2zM18 697h5v3h-5zM558 370h4v1h-4zM109 387h4v1h-4zM662 765h3v3h-3zM582 277h4v1h-4zM732 191h2v2h-2zM535 276h3v2h-3zM795 110h3v1h-3zM357 592h2v2h-2zM743 725h1v2h-1zM282 749h4v2h-4zM390 193h1v3h-1zM105 552h4v2h-4zM29 540h3v3h-3zM800 760h5v2h-5zM425 335h2v2h-2zM87 740h1v1h-1zM85 256h5v3h-5zM774 584h2v2h-2zM674 162h1v3h-1zM61 114h1v1h-1zM687 553h2v2h-2zM211 104h4v1h-4zM301 602h3v1h-3zM123 363h1v1h-1zM200 742h2v1h-2zM16 252h3v2h-3zM270 687h3v1h-3zM767 360h3v1h-3zM457 673h4v2h-4zM488 87h4v2h-4zM430 195h3v3h-3zM385 35h2v1h-2zM541 174h2v2h-2zM750 753h2v3h-2zM665 470h4v2h-4zM463 577h5v1h-5zM656 474h2v3h-2zM478 95h1v2h-1zM411 749h1v2h-1zM620 63h4v3h-4zM356 297h5v3h-5zM86 126h2v2h-2zM452 233h3v2h-3zM368 27h4v2h-4zM584 465h1v1h-1zM291 271h1v2h-1zM605 52h1v3h-1zM311 280h2v1h-2zM174 121h4v2h-4zM523 377h5v3h-5zM215 469h1v2h-1zM533 534h2v1h-2zM199 647h2v1h-2zM473 434h3v1h-3zM95 332h2v2h-2zM627 113h5v2h-5zM198 728h3v2h-3zM349 518h3v2h-3zM417 743h1v1h-1zM300 562h3v2h-3zM194 759h3v1h-3zM72 205h2v1h-2zM61 508h3v2h-3zM765 196h1v3h-1zM298 36h1v1h-1zM668 292h3v2h-3zM674 730h2v1h-2zM273 207h4v2h-4zM79 104h5v3h-5zM98 459h2v2h-2zM242 548h2v3h-2zM551 611h3v3h-3zM153 189h4v1h-4zM246 574h5v1h-5zM99 583h2v3h-2zM442 343h3v3h-3zM540 259h2v1h-2zM310 131h2v2h-2zM121 587h2v1h-2zM700 103h4v1h-4zM308 521h2v1h-2zM257 385h2v2h-2zM500 516h3v2h-3zM33 169h1v2h-1zM170 722h2v1h-2zM503 174h2v1h-2zM601 625h3v2h-3zM260 96h2v2h-2zM627 288h5v3h-5zM327 81h4v1h-4zM438 257h4v1h-4zM331 369h2v2h-2zM580 453h1v1h-1zM737 725h2v1h-2zM83 508h4v1h-4zM186 697h3v1h-3zM170 311h3v1h-3zM542 239h5v3h-5zM804 115h2v3h-2zM488 470h3v3h-3zM506 547h5v2h-5zM213 613h3v2h-3zM10 572h1v2h-1zM218 30h5v2h-5zM82 82h2v1h-2zM791 147h4v3h-4zM657 226h3v2h-3zM744 353h5v2h-5zM501 668h1v3h-1zM280 126h2v2h-2zM610 366h5v3h-5zM137 494h4v2h-4zM710 220h3v2h-3zM205 662h3v3h-3zM111 120h3v1h-3zM43 560h3v1h-3zM293 254h5v1h-5zM292 418h3v2h-3zM344 451h2v2h-2zM54 189h2v2h-2zM796 263h1v3h-1zM219 723h3v2h-3zM426 106h3v1h-3zM275 189h2v1h-2zM713 578h4v2h-4zM438 140h2v1h-2zM200 230h2v1h-2zM261 552h2v2h-2zM788 718h5v1h-5zM493 117h1v3h-1zM593 431h2v3h-2zM670 154h3v2h-3zM378 51h3v1h-3zM556 597h1v1h-1zM81 572h3v2h-3zM233 388h3v2h-3zM403 504h5v1h-5zM511 295h4v2h-4zM545 474h2v2h-2zM53 162h4v1h-4zM662 171h4v1h-4zM812 218h3v2h-3zM399 582h5v3h-5zM140 671h2v3h-2zM594 232h1v2h-1zM221 151h3v1h-3zM335 743h1v1h-1zM132 176h1v2h-1zM803 506h3v2h-3zM626 267h5v3h-5zM685 260h5v1h-5zM702 120h4v3h-4zM96 126h3v2h-3zM516 716h3v2h-3zM455 91h5v2h-5zM468 583h2v2h-2zM225 204h4v1h-4zM735 628h2v1h-2zM113 152h2v3h-2zM236 50h3v1h-3zM183 293h4v1h-4zM257 526h3v2h-3zM627 42h4v1h-4zM291 594h3v2h-3zM234 171h2v1h-2zM193 485h3v3h-3zM715 727h2v1h-2zM611 546h2v1h-2zM450 92h3v2h-3zM263 68h2v1h-2zM347 29h4v1h-4zM694 232h1v2h-1zM29 602h4v2h-4zM520 151h3v1h-3zM532 678h3v1h-3zM436 376h1v1h-1zM179 55h3v2h-3zM416 72h3v1h-3zM716 740h4v1h-4zM25 634h2v2h-2zM682 51h1v1h-1zM500 525h1v2h-1zM330 504h2v2h-2zM38 417h3v2h-3zM295 248h2v2h-2zM598 696h3v1h-3zM65 704h4v2h-4zM624 222h1v1h-1zM163 76h5v2h-5zM197 527h3v1h-3zM175 55h3v1h-3zM192 148h1v1h-1zM268 366h5v2h-5zM652 265h3v1h-3zM326 211h5v3h-5zM615 364h5v2h-5zM61 165h3v2h-3zM715 417h1v3h-1zM411 194h4v1h-4zM153 471h5v2h-5zM771 544h3v1h-3zM637 600h2v2h-2z"/><path fill="#080848" d="M701 210h1v3h-1zM195 406h1v3h-1zM580 86h3v1h-3zM547 462h5v2h-5zM687 104h5v3h-5zM324 373h4v2h-4zM122 530h1v1h-1zM288 748h3v2h-3zM240 699h2v1h-2zM432 572h2v3h-2zM673 717h4v1h-4zM411 428h1v2h-1zM631 51h1v1h-1zM155 674h2v2h-2zM107 375h4v2h-4zM779 565h2v1h-2zM413 257h2v3h-2zM751 54h1v2h-1zM642 649h5v1h-5zM125 422h5v1h-5zM742 430h3v2h-3zM676 383h2v3h-2zM24 39h5v1h-5zM249 625h2v2h-2zM516 158h3v1h-3zM22 475h5v1h-5zM797 178h2v1h-2zM46 125h3v2h-3zM781 89h3v2h-3zM520 645h3v1h-3zM466 545h3v2h-3zM695 289h3v1h-3zM188 231h2v2h-2zM213 321h3v3h-3zM40 40h1v3h-1zM111 699h5v2h-5zM562 427h3v2h-3zM684 415h5v3h-5zM393 110h3v2h-3zM735 550h4v2h-4zM520 167h3v3h-3zM388 487h3v1h-3zM644 569h4v1h-4zM6 492h5v1h-5zM703 319h5v1h-5zM263 692h4v2h-4zM139 37h3v1h-3zM691 126h4v1h-4zM300 750h3v2h-3zM90 509h1v2h-1zM539 293h2v1h-2zM649 545h2v1h-2zM126 364h1v2h-1zM606 103h2v2h-2zM449 548h2v1h-2zM752 445h3v3h-3zM247 333h3v3h-3zM515 534h3v1h-3zM343 485h3v1h-3zM252 117h2v2h-2zM773 88h3v2h-3zM371 153h4v3h-4zM644 282h3v2h-3zM117 126h1v2h-1zM474 310h2v1h-2zM408 227h1v2h-1zM781 327h1v3h-1zM340 220h2v3h-2zM725 509h2v2h-2zM460 222h2v2h-2zM67 88h2v1h-2zM759 335h5v1h-5zM166 278h3v1h-3zM439 132h1v2h-1zM583 299h2v2h-2zM408 282h2v3h-2zM269 705h1v1h-1zM407 704h3v1h-3zM96 693h2v2h-2zM427 451h1v2h-1zM418 616h2v2h-2zM47 519h2v1h-2zM654 422h1v3h-1zM167 680h5v1h-5zM200 67h3v1h-3zM334 145h3v3h-3zM451 208h1v1h-1zM504 501h2v2h-2zM377 118h5v2h-5zM506 319h5v1h-5zM741 251h1v2h-1zM494 238h3v2h-3zM416 190h4v2h-4zM466 593h3v3h-3zM110 283h3v2h-3zM383 296h3v2h-3zM232 448h3v2h-3zM17 274h4v1h-4zM611 686h3v2h-3zM110 37h3v3h-3zM204 170h3v1h-3zM52 766h5v2h-5zM9 409h5v2h-5zM770 736h5v2h-5zM275 676h3v2h-3zM648 734h4v3h-4zM403 662h3v1h-3zM639 190h2v1h-2zM34 67h2v1h-2zM757 72h1v3h-1zM774 674h1v2h-1zM534 125h2v2h-2zM553 604h2v1h-2zM297 199h3v1h-3zM298 80h1v2h-1zM313 294h3v3h-3zM611 730h5v3h-5zM452 730h5v2h-5zM132 367h3v1h-3zM162 278h4v2h-4zM812 472h4v1h-4zM443 742h3v3h-3zM698 210h4v1h-4zM436 519h3v1h-3zM591 492h3v1h-3zM527 41h4v2h-4zM16 101h3v2h-3zM798 95h5v1h-5zM657 448h3v2h-3zM238 298h4v2h-4zM742 312h2v1h-2zM331 516h3v2h-3zM805 168h3v2h-3zM707 647h5v1h-5zM712 243h3v1h-3zM432 264h5v1h-5zM482 737h3v2h-3zM695 102h2v2h-2zM32 46h3v1h-3zM341 121h3v2h-3zM150 59h2v2h-2zM327 755h2v1h-2zM87 242h1v2h-1zM582 682h3v1h-3zM537 65h5v1h-5zM17 721h3v3h-3zM678 184h3v2h-3zM377 755h4v1h-4zM89 325h4v3h-4zM474 710h2v1h-2zM591 770h3v2h-3zM151 144h2v1h-2zM623 768h1v1h-1zM208 764h2v2h-2zM603 34h5v2h-5zM92 574h5v2h-5zM537 353h3v3h-3zM720 321h2v3h-2zM477 108h2v2h-2zM37 234h5v3h-5zM726 117h2v2h-2zM397 47h4v1h-4zM350 355h5v1h-5zM61 209h4v2h-4zM528 83h4v1h-4zM44 443h2v2h-2zM144 209h3v1h-3zM143 652h4v1h-4zM579 400h1v1h-1zM253 353h5v2h-5zM509 482h3v1h-3zM457 130h2v1h-2zM49 304h1v2h-1zM153 709h3v2h-3zM171 43h4v2h-4zM611 551h2v1h-2zM549 176h3v1h-3zM398 231h3v2h-3zM564 335h3v2h-3zM696 183h3v2h-3zM146 716h2v3h-2zM108 29h3v3h-3zM805 311h5v3h-5zM364 324h2v2h-2zM369 66h3v2h-3zM422 408h3v2h-3zM590 182h2v2h-2zM453 664h3v2h-3zM586 671h4v1h-4zM314 432h5v1h-5zM687 55h2v1h-2zM569 605h2v3h-2zM150 613h2v2h-2zM105 102h2v3h-2zM481 652h3v1h-3zM703 617h2v1h-2zM510 94h2v2h-2zM549 419h2v2h-2zM129 457h5v2h-5zM279 582h5v1h-5zM694 159h4v2h-4zM128 719h3v1h-3zM730 113h4v1h-4zM120 302h3v1h-3zM205 335h2v2h-2zM568 343h4v1h-4zM437 478h2v3h-2zM722 597h2v1h-2zM647 145h3v2h-3zM176 718h4v1h-4zM370 118h4v2h-4zM751 693h4v2h-4zM235 192h2v2h-2zM414 116h1v2h-1zM90 580h2v3h-2zM626 659h1v1h-1zM342 648h4v2h-4zM230 719h4v2h-4zM153 701h3v2h-3zM429 393h3v1h-3zM262 690h1v1h-1zM260 751h3v1h-3zM234 579h3v1h-3zM605 605h1v2h-1zM453 162h5v3h-5zM92 661h5v1h-5zM748 388h2v2h-2zM128 270h2v3h-2zM598 475h1v1h-1zM78 289h2v1h-2zM17 50h2v1h-2zM224 343h2v3h-2zM219 198h5v2h-5zM324 31h2v3h-2zM626 71h4v1h-4zM271 390h3v3h-3zM100 229h5v2h-5zM784 374h4v2h-4zM653 276h2v3h-2zM345 86h4v2h-4zM311 762h2v2h-2zM364 504h2v2h-2zM266 584h1v1h-1zM666 126h2v1h-2zM280 574h4v1h-4zM30 689h3v2h-3zM92 666h3v2h-3zM22 184h2v1h-2zM619 613h2v1h-2zM267 753h3v1h-3zM467 597h2v2h-2zM283 160h2v1h-2zM642 162h1v1h-1zM513 246h3v1h-3zM292 115h2v1h-2zM258 190h2v3h-2zM217 778h2v1h-2zM12 161h2v1h-2zM363 124h5v1h-5zM409 117h3v2h-3zM709 40h1v1h-1zM240 613h3v1h-3zM232 726h3v1h-3zM232 773h1v2h-1zM374 298h1v2h-1zM671 489h3v2h-3zM653 30h2v3h-2zM574 357h4v2h-4zM326 491h3v1h-3zM665 506h3v2h-3zM68 427h3v2h-3zM696 354h1v3h-1zM359 559h3v2h-3zM441 150h3v1h-3zM387 130h2v2h-2zM538 558h2v2h-2zM284 430h2v2h-2zM463 674h3v1h-3zM351 415h2v1h-2zM3 609h2v1h-2zM774 327h3v2h-3zM661 51h1v3h-1zM141 549h5v1h-5zM699 326h3v2h-3zM700 229h4v2h-4zM152 353h2v1h-2zM9 215h3v2h-3zM91 345h3v2h-3zM209 159h1v1h-1zM385 500h4v2h-4zM726 594h4v1h-4zM741 599h4v1h-4zM550 187h2v1h-2zM427 254h4v2h-4zM162 681h2v1h-2zM539 563h1v2h-1zM21 533h1v1h-1zM313 637h3v3h-3zM209 168h3v2h-3zM744 597h3v1h-3zM118 190h3v2h-3zM665 738h2v2h-2zM133 270h4v3h-4zM100 40h1v1h-1zM252 634h5v3h-5zM103 67h2v3h-2zM41 516h3v3h-3zM97 691h4v2h-4zM658 550h2v3h-2zM650 143h1v2h-1zM240 270h2v3h-2zM418 114h2v2h-2zM439 337h1v2h-1zM554 272h1v1h-1zM254 490h3v2h-3zM695 128h3v3h-3zM695 86h4v2h-4zM711 43h1v1h-1zM523 72h3v1h-3zM667 111h5v2h-5zM717 605h2v2h-2zM731 138h2v1h-2zM743 674h4v1h-4zM406 374h3v2h-3zM347 383h5v1h-5zM298 161h2v2h-2zM732 93h5v3h-5zM335 248h1v2h-1zM546 607h2v1h-2zM216 313h5v3h-5zM648 305h4v1h-4zM340 698h2v1h-2zM799 227h5v1h-5zM209 598h5v2h-5zM366 667h2v3h-2zM366 338h1v1h-1zM132 229h3v2h-3zM654 726h4v2h-4zM176 434h4v1h-4zM512 638h3v1h-3zM482 43h3v1h-3zM572 688h5v1h-5zM409 711h1v3h-1zM471 238h1v1h-1zM116 652h1v3h-1zM783 327h2v2h-2zM397 491h3v3h-3zM63 758h4v1h-4zM169 478h2v2h-2zM553 46h2v1h-2zM420 556h4v1h-4zM226 319h5v1h-5zM444 757h1v1h-1zM632 728h2v2h-2zM661 630h2v1h-2zM148 595h1v2h-1zM136 388h2v3h-2zM349 593h1v1h-1zM388 137h1v2h-1zM811 394h1v1h-1zM489 518h2v1h-2zM662 506h4v1h-4zM376 173h3v2h-3zM379 697h4v1h-4zM763 528h4v1h-4zM425 709h4v1h-4zM267 646h3v2h-3zM182 166h3v1h-3zM310 704h4v3h-4zM459 274h3v3h-3zM539 288h4v1h-4zM782 751h4v1h-4zM509 398h2v1h-2zM418 655h3v1h-3zM660 233h4v1h-4zM790 226h2v2h-2zM749 361h2v3h-2zM195 644h3v1h-3zM712 457h3v2h-3zM239 662h1v2h-1zM652 493h2v2h-2zM658 760h4v2h-4zM538 763h2v1h-2zM245 179h2v1h-2zM205 353h1v3h-1zM374 727h4v2h-4zM797 101h1v1h-1zM732 453h5v2h-5zM573 157h1v2h-1zM75 348h2v3h-2zM192 643h5v2h-5zM405 758h2v1h-2zM256 53h2v3h-2zM179 771h4v2h-4zM591 377h1v2h-1zM275 399h2v2h-2zM15 717h3v3h-3zM317 161h2v3h-2zM795 167h5v3h-5zM52 585h3v2h-3zM29 257h2v1h-2zM512 78h2v2h-2zM321 513h3v2h-3zM593 506h2v2h-2zM322 385h3v1h-3zM374 699h4v1h-4zM585 60h3v3h-3zM312 361h3v1h-3zM773 537h1v1h-1zM373 79h1v1h-1zM517 756h4v1h-4zM451 56h3v1h-3zM8 373h4v1h-4zM245 576h2v1h-2zM209 624h4v1h-4zM200 628h2v1h-2zM191 452h3v2h-3zM609 522h3v2h-3zM176 263h1v2h-1zM74 438h1v2h-1zM346 385h4v2h-4zM806 770h3v2h-3zM732 719h3v2h-3zM163 587h3v2h-3zM295 143h2v1h-2zM754 762h1v1h-1zM168 134h2v1h-2zM640 722h1v2h-1zM618 673h2v2h-2zM154 74h5v3h-5zM373 449h4v1h-4zM596 729h2v2h-2zM746 287h1v2h-1zM523 537h3v2h-3zM712 688h5v2h-5zM38 245h3v3h-3zM626 214h2v1h-2zM792 89h4v2h-4zM268 189h3v1h-3zM417 196h2v2h-2zM277 601h2v1h-2zM294 491h4v2h-4zM217 591h1v1h-1zM681 145h5v1h-5zM703 318h1v1h-1zM717 459h1v2h-1zM58 462h3v3h-3zM167 405h4v2h-4zM164 180h2v1h-2zM130 188h2v3h-2zM101 598h3v2h-3zM606 421h3v2h-3zM45 252h4v1h-4zM205 96h2v1h-2zM51 129h3v1h-3zM272 668h1v2h-1zM503 284h2v1h-2zM450 155h4v1h-4zM332 270h1v1h-1zM743 299h2v1h-2zM559 768h3v1h-3zM162 699h5v2h-5zM547 325h2v1h-2zM723 481h5v2h-5zM257 746h5v3h-5zM35 287h3v2h-3zM221 771h3v2h-3zM468 393h1v2h-1zM215 264h5v2h-5zM695 286h4v2h-4zM315 259h2v2h-2zM739 779h4v1h-4zM331 365h2v1h-2zM195 236h1v3h-1zM249 263h3v3h-3zM662 641h1v3h-1zM604 271h3v1h-3zM566 336h2v2h-2zM493 504h1v1h-1zM96 343h3v1h-3zM176 127h3v3h-3zM399 391h5v2h-5zM575 601h2v2h-2zM331 723h3v1h-3zM516 164h4v3h-4zM550 162h4v2h-4zM690 478h4v2h-4zM774 397h3v2h-3zM642 58h3v3h-3zM210 346h4v2h-4zM453 642h5v2h-5zM96 702h3v2h-3zM149 416h4v3h-4zM225 475h5v2h-5zM359 538h3v1h-3zM785 182h3v1h-3zM521 239h5v1h-5zM4 334h2v1h-2zM618 601h4v1h-4zM448 247h5v2h-5zM611 258h3v1h-3zM810 765h3v1h-3zM11 142h2v1h-2zM527 476h4v2h-4zM420 241h4v1h-4zM475 613h2v3h-2zM444 34h1v2h-1zM650 186h5v1h-5zM455 762h2v3h-2zM347 94h2v1h-2zM744 402h4v1h-4zM123 560h3v2h-3zM392 229h2v2h-2zM210 182h3v2h-3zM285 395h2v3h-2zM20 451h1v1h-1zM682 335h3v2h-3zM30 179h3v1h-3zM95 591h2v3h-2zM603 271h2v1h-2zM713 245h3v2h-3zM470 624h2v2h-2zM109 213h3v3h-3zM47 220h3v2h-3zM203 408h4v3h-4zM86 271h4v1h-4zM473 511h2v2h-2zM162 606h3v1h-3zM107 562h2v1h-2zM104 498h4v2h-4zM263 748h4v2h-4zM443 561h3v2h-3zM780 605h2v1h-2zM395 668h2v2h-2zM506 125h3v1h-3zM434 705h3v2h-3zM5 510h2v2h-2zM390 130h2v3h-2zM641 776h3v2h-3zM17 176h2v1h-2zM246 775h3v1h-3zM738 566h3v2h-3zM148 128h2v2h-2zM574 320h2v1h-2zM3 431h5v3h-5zM391 162h2v3h-2zM597 149h5v2h-5zM267 124h5v1h-5zM135 214h2v2h-2zM622 580h2v1h-2zM383 180h2v1h-2zM127 231h5v2h-5zM682 78h5v2h-5zM108 262h3v1h-3zM354 410h4v1h-4zM482 319h5v3h-5zM639 167h2v2h-2zM23 504h3v1h-3zM701 773h1v1h-1zM593 702h4v2h-4zM534 142h3v2h-3zM178 270h4v3h-4zM70 201h4v1h-4zM783 489h4v2h-4zM140 635h4v2h-4zM69 220h2v2h-2zM548 266h4v1h-4zM724 250h2v1h-2zM361 599h5v2h-5zM716 412h1v1h-1zM773 55h3v3h-3zM805 689h3v3h-3zM752 317h1v2h-1zM154 123h2v2h-2zM656 401h2v1h-2zM513 337h2v3h-2zM578 293h2v2h-2zM140 275h2v3h-2zM539 268h2v3h-2zM543 203h5v1h-5zM506 525h2v1h-2zM123 730h5v2h-5zM156 129h2v3h-2zM184 106h2v2h-2zM87 566h4v1h-4zM717 83h3v1h-3zM799 549h3v1h-3zM675 739h4v1h-4zM744 367h4v3h-4zM666 73h4v2h-4zM508 616h5v2h-5zM248 599h3v2h-3zM125 400h1v1h-1zM786 656h2v1h-2zM11 456h3v1h-3zM259 445h3v1h-3zM213 200h5v2h-5zM199 479h2v1h-2zM301 311h5v2h-5zM716 80h4v3h-4zM200 272h3v3h-3zM569 329h4v1h-4zM256 665h2v3h-2zM186 616h5v1h-5zM34 272h2v3h-2zM421 689h2v3h-2zM810 114h3v2h-3zM470 121h5v3h-5zM645 611h5v1h-5zM354 692h2v2h-2zM47 372h2v2h-2zM106 347h1v2h-1zM546 438h4v2h-4zM75 337h4v1h-4zM108 721h2v2h-2zM10 753h4v2h-4zM566 177h1v2h-1zM410 406h3v1h-3zM412 354h2v2h-2zM575 480h3v2h-3zM283 318h1v1h-1zM747 332h5v3h-5zM734 198h3v2h-3zM295 435h1v1h-1zM598 386h2v2h-2zM148 205h5v1h-5zM29 101h3v2h-3zM659 394h1v3h-1zM63 267h3v3h-3zM100 633h2v1h-2zM456 631h5v1h-5zM111 486h2v1h-2zM489 191h5v2h-5zM106 720h4v1h-4zM508 132h1v1h-1zM382 156h1v3h-1zM425 508h3v2h-3zM648 267h2v2h-2zM403 540h3v2h-3zM685 331h1v3h-1zM229 148h4v2h-4zM707 556h3v3h-3zM426 235h4v2h-4zM240 341h1v2h-1zM96 124h1v2h-1zM500 74h5v1h-5zM633 57h2v1h-2zM637 566h2v3h-2zM235 518h2v3h-2zM167 531h2v1h-2zM377 416h5v1h-5zM520 341h4v3h-4zM8 352h2v3h-2zM142 309h2v1h-2zM483 383h4v2h-4zM21 52h4v1h-4zM750 430h3v2h-3zM483 251h4v1h-4zM440 447h4v2h-4zM450 295h4v2h-4zM47 482h3v2h-3zM178 474h3v2h-3zM286 567h2v2h-2zM378 313h2v2h-2zM580 474h3v3h-3zM244 367h4v1h-4zM765 340h2v2h-2zM501 585h1v1h-1zM157 254h3v2h-3zM113 432h2v1h-2zM263 485h2v2h-2zM289 437h1v3h-1zM131 577h3v1h-3zM348 78h2v2h-2zM224 733h2v1h-2zM203 653h3v3h-3zM119 128h2v1h-2zM84 134h2v2h-2zM390 584h3v2h-3zM36 619h2v1h-2zM62 402h4v2h-4zM808 116h4v2h-4zM35 334h4v3h-4zM499 592h4v2h-4zM532 385h2v1h-2zM205 113h3v1h-3zM34 407h4v2h-4zM465 557h5v1h-5zM48 378h1v1h-1zM573 657h3v1h-3zM789 132h1v3h-1zM371 528h1v2h-1zM180 577h4v1h-4zM337 286h4v2h-4zM375 698h3v1h-3zM250 314h3v1h-3zM373 593h1v3h-1zM74 79h2v1h-2zM718 372h2v3h-2zM438 342h3v2h-3zM80 217h4v2h-4zM554 85h1v1h-1zM400 399h5v1h-5zM569 308h4v3h-4zM147 235h2v3h-2zM269 539h3v1h-3zM138 586h2v1h-2zM310 468h2v2h-2zM728 363h2v1h-2zM573 387h4v3h-4zM190 499h2v3h-2zM625 697h3v2h-3zM376 512h2v1h-2zM386 318h3v2h-3zM58 590h4v1h-4zM721 491h2v2h-2zM515 625h5v3h-5zM349 568h5v1h-5zM445 695h5v3h-5zM224 57h1v1h-1zM371 776h3v1h-3zM476 216h3v1h-3zM117 733h3v1h-3zM770 503h5v1h-5zM483 216h2v2h-2zM281 548h2v1h-2zM566 655h2v3h-2zM429 63h2v2h-2zM526 598h4v1h-4zM178 531h1v1h-1zM228 763h2v2h-2zM335 94h5v2h-5zM373 114h2v2h-2zM650 269h4v2h-4zM87 361h1v2h-1zM240 502h3v2h-3zM6 778h2v2h-2zM11 772h4v1h-4zM510 506h4v2h-4zM512 158h2v2h-2zM334 612h2v3h-2zM412 657h3v3h-3zM717 307h4v1h-4zM65 104h2v2h-2zM464 705h3v2h-3zM82 280h3v1h-3zM746 67h5v1h-5zM249 511h1v1h-1zM770 156h2v2h-2zM619 290h2v2h-2zM380 767h5v2h-5zM67 133h3v2h-3zM409 358h3v1h-3zM551 352h2v2h-2zM258 247h3v1h-3zM376 251h2v1h-2zM437 686h5v1h-5zM613 529h4v3h-4zM287 247h3v1h-3zM524 729h3v1h-3zM505 326h3v1h-3zM166 669h2v2h-2zM115 352h4v1h-4zM684 512h3v1h-3zM293 458h4v1h-4zM662 104h5v1h-5zM639 334h1v1h-1zM347 68h1v1h-1zM746 64h3v2h-3zM46 510h4v2h-4zM131 112h3v1h-3zM314 704h2v3h-2zM773 636h2v1h-2zM194 142h2v3h-2zM493 756h2v1h-2zM83 101h3v3h-3zM30 427h1v1h-1zM369 283h4v1h-4zM265 748h3v2h-3zM592 311h5v2h-5zM802 691h4v2h-4zM155 35h1v1h-1zM641 152h2v1h-2zM803 202h3v2h-3zM498 601h4v2h-4zM811 522h2v2h-2zM655 357h5v1h-5zM718 385h3v3h-3zM123 453h2v1h-2zM46 471h2v2h-2zM457 273h3v3h-3zM99 317h2v1h-2zM480 634h3v1h-3zM64 710h2v1h-2zM64 702h4v3h-4zM83 604h4v2h-4zM271 373h2v3h-2zM775 587h3v2h-3zM445 260h2v2h-2zM67 761h4v2h-4zM535 326h1v1h-1zM626 96h3v3h-3zM554 261h5v1h-5zM230 673h1v2h-1zM584 58h4v2h-4zM708 40h2v1h-2zM498 415h5v2h-5zM581 355h4v2h-4zM116 260h3v1h-3zM292 511h2v1h-2zM717 67h5v1h-5zM332 349h1v2h-1zM720 660h2v2h-2zM736 462h3v2h-3zM100 435h2v2h-2zM371 33h4v2h-4zM96 184h5v3h-5zM492 600h2v2h-2zM373 765h3v1h-3zM162 763h5v1h-5zM697 224h2v2h-2zM65 212h1v3h-1zM394 536h5v1h-5zM658 697h2v1h-2zM56 357h4v2h-4zM327 566h5v1h-5zM87 388h5v1h-5zM228 315h1v3h-1zM252 143h3v2h-3zM248 686h4v1h-4zM471 763h2v2h-2zM504 118h5v2h-5zM786 737h2v3h-2zM741 535h4v2h-4zM107 650h2v1h-2zM261 483h3v1h-3zM165 117h5v1h-5zM761 143h4v1h-4zM705 676h3v1h-3zM326 491h2v2h-2zM777 718h3v1h-3zM176 341h2v2h-2zM238 732h1v2h-1zM764 399h2v2h-2zM149 455h3v2h-3zM647 328h1v1h-1zM388 593h4v1h-4zM673 48h5v2h-5zM335 72h1v2h-1zM665 692h5v1h-5zM308 232h4v3h-4zM411 104h3v3h-3zM685 697h4v2h-4zM551 460h4v1h-4zM675 492h2v3h-2zM749 134h2v3h-2zM57 628h3v3h-3zM468 755h2v2h-2zM56 457h1v2h-1zM358 558h5v3h-5zM332 763h3v1h-3zM775 80h3v1h-3zM285 441h2v3h-2zM430 371h5v2h-5zM275 778h5v2h-5zM586 660h3v2h-3zM690 583h4v1h-4zM613 176h3v2h-3zM606 750h2v2h-2zM451 540h4v1h-4zM325 229h1v3h-1zM360 423h3v2h-3zM354 712h4v2h-4zM467 137h5v2h-5zM265 711h4v2h-4zM457 56h2v1h-2zM473 342h5v3h-5zM576 27h2v2h-2zM597 302h3v2h-3zM299 475h2v2h-2zM505 377h1v1h-1zM387 777h5v1h-5zM687 358h2v1h-2zM459 301h5v2h-5zM92 735h2v1h-2zM18 441h4v2h-4zM635 387h2v3h-2zM531 252h4v2h-4zM241 243h5v1h-5zM618 68h3v2h-3zM451 144h3v1h-3zM158 774h2v2h-2zM673 544h2v2h-2zM162 687h3v1h-3zM242 340h4v2h-4zM543 276h4v2h-4zM247 91h3v2h-3zM326 397h3v2h-3zM24 93h3v1h-3zM550 66h4v2h-4zM447 398h5v1h-5zM740 554h1v2h-1zM469 606h4v3h-4zM746 604h4v1h-4zM545 58h1v1h-1zM652 382h3v1h-3zM781 593h4v1h-4zM538 377h3v1h-3zM30 250h3v3h-3zM779 343h2v1h-2zM136 525h3v2h-3zM154 759h3v2h-3zM608 428h5v2h-5zM22 604h3v3h-3zM631 220h4v1h-4zM142 349h3v3h-3zM808 384h4v2h-4zM369 317h3v3h-3zM793 656h2v2h-2zM279 196h2v2h-2zM286 292h2v1h-2zM463 320h1v2h-1zM414 347h2v2h-2zM18 577h3v1h-3zM329 772h2v2h-2zM241 554h1v1h-1zM383 570h3v2h-3zM565 602h3v1h-3zM678 560h4v3h-4zM73 316h1v1h-1zM91 611h1v1h-1zM60 765h2v3h-2zM297 50h3v3h-3zM96 666h2v2h-2zM568 566h1v3h-1zM315 392h3v1h-3zM809 752h5v1h-5zM48 165h1v3h-1zM364 748h3v2h-3zM90 364h2v1h-2zM72 188h5v2h-5zM450 547h3v2h-3zM797 223h1v1h-1zM303 550h5v2h-5zM766 677h4v2h-4zM187 556h2v1h-2zM116 89h2v2h-2zM14 545h2v2h-2zM685 584h3v2h-3zM432 333h3v3h-3zM761 214h5v3h-5zM714 558h3v2h-3zM583 317h2v2h-2zM532 114h2v3h-2zM764 345h5v2h-5zM258 159h4v3h-4zM477 693h5v1h-5zM245 452h3v2h-3zM186 344h2v1h-2zM415 700h3v2h-3zM410 252h2v1h-2zM116 202h3v3h-3zM639 375h5v1h-5zM420 475h2v2h-2zM583 196h1v3h-1zM529 563h3v2h-3zM434 244h2v1h-2zM313 552h2v2h-2zM810 639h2v1h-2zM657 739h2v3h-2zM231 76h2v3h-2zM285 166h2v2h-2zM680 485h3v2h-3zM31 702h1v2h-1zM469 587h3v2h-3zM523 448h1v3h-1zM740 236h2v2h-2zM770 350h5v3h-5zM134 203h3v1h-3zM130 660h4v3h-4zM417 635h3v2h-3zM590 763h5v2h-5zM56 776h4v1h-4zM596 276h2v1h-2zM542 773h2v1h-2zM45 166h5v1h-5zM489 161h2v2h-2zM125 369h4v2h-4zM647 286h5v2h-5zM177 473h2v3h-2zM520 248h1v1h-1zM390 629h4v1h-4zM545 138h3v2h-3zM782 435h5v1h-5zM126 446h2v1h-2zM230 556h4v1h-4zM618 209h4v1h-4zM456 223h5v2h-5zM682 680h2v1h-2zM652 590h5v1h-5zM65 270h4v1h-4zM412 225h4v2h-4zM242 465h1v1h-1zM581 673h2v1h-2zM261 310h2v1h-2zM614 676h1v1h-1zM421 530h1v1h-1zM135 621h5v1h-5zM743 165h2v2h-2zM593 634h4v3h-4zM97 264h3v1h-3zM147 692h1v1h-1zM670 32h3v1h-3zM42 207h2v3h-2zM275 74h3v2h-3zM530 486h3v2h-3zM137 476h2v1h-2zM468 558h2v1h-2zM802 54h3v2h-3zM65 338h2v1h-2zM802 198h5v1h-5zM339 630h4v1h-4zM26 303h2v1h-2zM304 275h2v1h-2zM623 610h2v1h-2zM171 585h1v1h-1zM707 696h4v3h-4zM265 334h3v2h-3zM124 80h3v2h-3zM452 693h5v2h-5zM809 364h2v1h-2zM624 592h2v3h-2zM281 476h3v1h-3zM91 176h2v1h-2zM122 176h5v3h-5zM307 233h2v2h-2zM211 268h3v1h-3zM95 511h1v1h-1zM632 338h5v2h-5zM525 517h4v2h-4zM558 652h2v1h-2zM418 305h5v1h-5zM193 520h3v2h-3zM764 550h3v1h-3zM456 760h4v2h-4zM355 249h1v2h-1zM18 420h4v2h-4zM701 436h4v2h-4zM582 727h3v3h-3zM316 326h1v2h-1zM6 330h2v1h-2zM668 709h5v3h-5zM782 726h2v1h-2zM484 373h3v1h-3zM622 772h5v1h-5zM249 395h2v2h-2zM423 218h4v1h-4zM604 717h3v2h-3zM623 164h3v2h-3zM219 180h2v2h-2zM96 381h1v1h-1zM228 223h3v2h-3zM17 534h2v2h-2zM40 118h3v1h-3zM477 151h2v3h-2zM401 612h5v3h-5zM326 444h2v2h-2zM131 581h5v1h-5zM94 231h2v2h-2zM408 495h2v2h-2zM293 237h3v1h-3zM407 348h2v1h-2zM564 444h5v2h-5zM270 550h1v1h-1zM748 564h2v1h-2zM244 510h3v2h-3zM615 672h5v1h-5zM541 482h3v2h-3zM237 562h2v1h-2zM122 635h3v1h-3zM15 378h3v1h-3zM235 642h4v2h-4zM396 403h3v2h-3zM13 735h3v2h-3zM285 512h4v1h-4zM656 664h3v2h-3zM720 248h2v1h-2zM734 80h1v1h-1zM526 239h2v2h-2zM231 561h2v1h-2zM200 356h2v2h-2zM501 79h2v2h-2zM630 461h3v1h-3zM225 224h1v2h-1zM532 157h3v2h-3zM467 530h4v2h-4zM759 163h3v1h-3zM277 475h5v2h-5zM800 615h4v1h-4zM212 602h2v2h-2zM386 745h3v3h-3zM764 484h4v2h-4zM436 497h4v1h-4zM320 372h5v2h-5zM309 182h2v2h-2zM378 253h5v2h-5zM439 576h3v3h-3zM52 177h5v3h-5zM222 154h4v3h-4zM125 298h1v2h-1zM514 88h5v2h-5zM347 468h1v1h-1zM56 458h4v1h-4zM521 44h2v1h-2zM137 511h3v1h-3zM476 281h1v2h-1zM576 368h2v1h-2zM742 196h1v1h-1zM227 374h5v2h-5zM392 239h2v1h-2zM312 688h3v2h-3zM777 326h3v2h-3zM20 654h2v2h-2zM449 297h2v1h-2zM552 287h5v2h-5zM164 435h3v3h-3zM146 61h4v2h-4zM277 152h3v2h-3zM369 508h5v2h-5zM263 632h2v3h-2zM804 304h3v2h-3zM603 526h5v1h-5zM102 557h4v1h-4zM773 467h2v3h-2zM540 719h4v1h-4zM113 171h4v1h-4zM149 701h1v3h-1zM803 709h4v2h-4zM580 96h2v3h-2zM111 714h1v1h-1zM112 460h1v1h-1zM590 542h3v2h-3zM380 676h5v2h-5zM485 657h2v2h-2zM47 485h4v1h-4zM481 663h2v2h-2zM479 484h3v2h-3zM591 464h3v2h-3zM529 464h1v1h-1zM246 708h5v1h-5zM676 284h2v3h-2zM741 693h1v3h-1zM210 428h1v2h-1zM559 636h5v1h-5zM523 169h2v1h-2zM665 258h1v2h-1zM180 525h4v1h-4zM466 748h1v3h-1zM775 33h5v1h-5zM497 745h3v1h-3zM152 38h2v1h-2zM775 592h3v2h-3zM11 477h4v2h-4zM344 412h5v2h-5zM202 572h4v3h-4zM588 190h2v2h-2zM243 538h5v2h-5zM43 354h5v2h-5zM242 435h3v1h-3zM63 332h3v3h-3zM332 407h4v1h-4zM288 554h5v3h-5zM620 438h4v3h-4zM659 402h5v2h-5zM515 187h4v1h-4zM487 72h2v1h-2zM470 258h2v1h-2zM574 527h4v1h-4zM278 411h2v2h-2zM330 360h1v1h-1zM756 85h2v2h-2zM498 407h3v2h-3zM84 273h3v1h-3zM159 183h2v1h-2zM21 726h2v1h-2zM162 350h4v1h-4zM372 147h2v1h-2zM755 339h2v1h-2zM479 118h2v3h-2zM793 36h1v1h-1zM359 698h4v1h-4zM808 353h3v1h-3zM352 724h2v1h-2zM609 322h3v3h-3zM545 214h5v3h-5zM72 596h5v2h-5zM66 35h2v2h-2zM32 427h3v2h-3zM76 124h5v1h-5zM319 263h5v2h-5zM297 309h3v3h-3zM528 149h1v1h-1zM549 682h4v2h-4zM799 508h3v3h-3zM85 633h4v3h-4zM747 301h2v2h-2zM210 64h3v3h-3zM387 281h4v2h-4zM646 563h3v2h-3zM562 436h5v1h-5zM705 417h3v2h-3zM86 390h2v2h-2zM222 493h3v2h-3zM389 105h5v2h-5zM280 155h3v1h-3zM183 107h2v2h-2zM707 640h4v3h-4zM229 262h2v3h-2zM3 327h2v1h-2zM710 577h3v1h-3zM585 473h3v2h-3zM551 61h4v2h-4zM163 244h3v3h-3zM152 742h4v2h-4zM243 521h2v2h-2zM746 733h4v2h-4zM434 448h3v3h-3zM527 128h3v2h-3zM604 308h1v2h-1zM26 102h2v2h-2zM464 534h5v3h-5zM314 396h2v2h-2zM744 769h4v3h-4zM661 278h1v2h-1zM309 577h2v1h-2zM355 43h5v2h-5zM346 274h4v2h-4zM797 451h2v2h-2zM76 589h2v1h-2zM396 448h3v2h-3zM56 731h2v1h-2zM668 555h3v1h-3zM301 569h2v1h-2zM439 189h4v3h-4zM31 556h5v1h-5zM317 614h3v2h-3zM417 592h2v2h-2zM501 544h2v2h-2zM58 40h2v3h-2zM604 185h3v2h-3zM807 682h3v1h-3zM247 84h5v1h-5zM363 104h5v1h-5zM203 372h5v1h-5zM654 222h5v1h-5zM510 694h1v2h-1zM668 405h2v1h-2zM767 662h1v2h-1zM692 687h5v1h-5zM658 418h1v2h-1zM256 253h5v2h-5zM221 97h2v1h-2zM30 610h4v2h-4zM348 443h4v3h-4zM318 469h5v1h-5zM19 111h5v1h-5zM419 119h2v1h-2zM306 113h5v1h-5zM560 544h3v1h-3zM746 243h5v1h-5zM18 282h1v3h-1zM382 363h5v1h-5zM570 388h4v2h-4zM112 765h5v2h-5zM24 128h2v1h-2zM786 476h2v2h-2zM748 610h2v1h-2zM143 277h1v2h-1zM340 425h3v2h-3zM417 666h4v1h-4zM443 29h2v2h-2zM78 351h1v1h-1zM64 67h2v3h-2zM749 269h2v1h-2zM577 383h2v2h-2zM686 696h3v2h-3zM811 121h3v3h-3zM270 375h3v3h-3zM116 584h2v2h-2zM722 686h2v2h-2zM468 94h2v3h-2zM266 353h5v2h-5zM244 293h3v2h-3zM335 582h2v1h-2zM93 472h4v3h-4zM26 712h3v1h-3zM73 239h2v1h-2zM765 662h3v2h-3zM712 338h3v1h-3zM260 354h4v1h-4zM342 628h1v1h-1zM411 427h4v2h-4zM654 777h2v1h-2zM569 751h3v2h-3zM528 243h4v1h-4zM543 655h4v3h-4zM578 373h5v2h-5zM523 480h4v3h-4zM669 622h3v2h-3zM587 538h1v2h-1zM595 554h3v2h-3zM277 695h4v2h-4zM812 203h5v2h-5zM405 480h2v2h-2zM604 501h1v2h-1zM220 492h3v2h-3zM11 413h2v1h-2zM710 147h4v2h-4zM521 298h2v2h-2zM99 81h3v3h-3zM516 519h2v1h-2zM117 370h3v1h-3zM4 73h5v3h-5zM784 755h4v3h-4zM657 453h4v2h-4zM255 572h2v1h-2zM561 306h2v2h-2zM603 548h5v1h-5zM775 270h3v1h-3zM395 521h3v1h-3zM187 718h3v1h-3zM349 390h2v1h-2zM255 291h2v2h-2zM484 637h3v1h-3zM334 26h5v1h-5zM221 464h2v1h-2zM310 608h4v3h-4zM571 144h3v1h-3zM237 700h2v3h-2zM228 451h3v3h-3zM67 610h1v1h-1zM346 88h5v2h-5zM442 71h2v1h-2zM454 138h5v3h-5zM470 387h2v2h-2zM622 683h4v2h-4zM405 321h4v1h-4zM67 233h5v2h-5zM600 767h5v1h-5zM443 136h3v1h-3zM44 320h3v3h-3zM169 147h2v1h-2zM621 682h3v1h-3zM372 417h1v2h-1zM55 333h3v2h-3zM399 110h4v1h-4zM152 203h2v2h-2zM495 715h3v1h-3zM451 286h1v1h-1zM122 153h2v2h-2zM408 547h2v2h-2zM326 538h1v1h-1zM72 131h3v2h-3zM434 359h5v3h-5zM80 339h3v1h-3zM396 126h5v3h-5zM807 511h3v3h-3zM545 75h4v1h-4zM703 469h4v2h-4zM366 275h5v1h-5zM422 342h4v3h-4zM682 94h3v2h-3zM162 242h4v3h-4zM646 766h5v1h-5zM510 60h3v1h-3zM128 653h5v3h-5zM610 225h5v2h-5zM108 239h3v2h-3zM566 650h1v2h-1zM812 212h4v2h-4zM388 676h5v2h-5zM731 88h3v2h-3zM795 28h3v3h-3zM13 523h5v2h-5zM392 223h2v1h-2zM162 282h1v3h-1zM502 429h4v2h-4zM466 538h3v1h-3zM674 120h3v2h-3zM44 776h2v3h-2zM583 645h3v3h-3zM371 549h1v2h-1zM252 375h3v2h-3zM544 80h1v2h-1zM45 358h3v1h-3zM430 312h3v1h-3zM127 37h2v1h-2zM753 52h4v1h-4zM208 500h5v1h-5zM488 206h1v2h-1zM180 163h5v2h-5zM191 64h3v2h-3zM330 649h4v3h-4zM37 660h2v2h-2zM808 208h2v1h-2zM708 447h3v1h-3zM314 507h2v2h-2zM808 763h3v1h-3zM232 106h3v1h-3zM343 44h3v2h-3zM450 650h2v1h-2zM551 614h5v1h-5zM701 241h1v1h-1zM771 215h4v1h-4zM64 322h4v2h-4zM535 654h4v3h-4zM587 54h5v2h-5zM769 329h3v2h-3zM276 131h5v3h-5zM701 359h1v2h-1zM696 469h3v1h-3zM379 647h4v2h-4zM99 219h4v3h-4zM550 347h2v2h-2zM681 458h5v1h-5zM550 327h2v3h-2zM255 486h4v2h-4zM242 399h1v1h-1zM679 92h5v3h-5zM638 192h1v2h-1zM412 630h3v2h-3zM85 367h4v2h-4zM412 245h5v1h-5zM29 232h3v3h-3zM122 91h2v2h-2zM346 424h3v3h-3zM398 752h3v3h-3zM67 619h2v3h-2zM348 685h3v2h-3zM261 526h1v2h-1zM558 691h5v1h-5zM692 190h1v1h-1zM347 91h3v2h-3zM141 583h1v2h-1zM622 209h5v1h-5zM414 277h3v1h-3zM810 208h2v2h-2zM520 125h4v1h-4zM560 551h1v1h-1zM661 321h2v1h-2zM511 589h3v2h-3zM704 656h4v3h-4zM251 27h2v1h-2zM400 450h1v2h-1zM181 61h3v2h-3zM636 293h2v2h-2zM431 623h1v2h-1zM773 272h3v2h-3zM425 361h5v3h-5zM111 328h3v1h-3zM758 631h2v1h-2zM763 708h2v1h-2zM762 59h2v2h-2zM418 101h3v2h-3zM587 547h1v1h-1zM324 165h2v3h-2zM310 241h5v1h-5zM787 151h2v1h-2zM776 317h2v1h-2zM183 693h5v1h-5zM418 581h3v2h-3zM527 45h1v2h-1zM439 647h3v1h-3zM241 438h1v2h-1zM663 562h3v2h-3zM185 477h5v1h-5zM810 727h4v2h-4zM364 163h3v1h-3zM433 72h3v2h-3zM561 89h2v1h-2zM682 673h4v1h-4zM134 60h4v3h-4zM193 38h3v3h-3zM411 105h4v1h-4zM442 268h1v3h-1zM411 694h5v2h-5zM79 209h3v3h-3zM144 684h2v1h-2zM262 352h4v1h-4zM270 156h5v3h-5zM269 222h2v2h-2zM406 227h3v2h-3zM315 648h5v1h-5zM177 282h4v1h-4zM569 54h3v2h-3zM404 36h2v2h-2zM721 523h2v1h-2zM87 719h2v2h-2zM132 245h2v2h-2zM555 459h4v2h-4zM142 249h4v1h-4zM48 738h2v1h-2zM592 453h4v3h-4zM679 724h2v1h-2zM650 98h3v3h-3zM293 38h3v1h-3zM353 710h2v1h-2zM110 295h5v2h-5zM158 182h3v1h-3zM338 470h2v1h-2zM599 565h3v1h-3zM156 218h5v1h-5zM459 454h2v3h-2zM318 172h2v1h-2zM356 47h3v1h-3zM634 424h2v2h-2zM226 125h4v2h-4zM52 369h4v2h-4zM612 119h5v1h-5zM402 747h3v2h-3zM80 81h2v1h-2zM707 722h1v3h-1zM458 386h5v3h-5zM334 535h3v1h-3zM464 136h3v1h-3zM382 673h4v2h-4zM480 162h2v1h-2zM249 485h3v1h-3zM507 676h4v3h-4zM12 67h3v2h-3zM542 357h3v1h-3zM476 26h3v3h-3zM632 178h3v3h-3zM742 312h3v1h-3zM750 667h3v2h-3zM711 775h1v1h-1zM509 27h3v3h-3zM255 301h3v1h-3zM263 70h2v1h-2zM125 249h3v3h-3zM521 443h5v1h-5zM376 713h1v1h-1zM671 725h1v2h-1zM371 590h2v3h-2zM185 446h3v3h-3zM716 412h4v1h-4zM152 435h3v2h-3zM690 738h1v2h-1zM50 580h2v3h-2zM438 748h5v2h-5zM700 386h2v1h-2zM620 717h1v1h-1zM713 461h2v2h-2zM499 637h5v2h-5zM514 112h5v2h-5zM519 768h3v3h-3zM222 686h4v2h-4zM658 358h1v1h-1zM477 437h3v1h-3zM656 377h4v1h-4zM92 627h2v2h-2zM122 176h1v2h-1zM520 595h2v1h-2zM129 705h5v3h-5zM660 480h3v2h-3zM57 577h2v2h-2zM242 68h3v3h-3zM754 339h3v2h-3zM793 507h2v3h-2zM213 59h3v2h-3zM628 246h1v3h-1zM107 454h3v1h-3zM528 610h2v1h-2zM484 520h4v2h-4zM141 597h2v3h-2zM168 779h5v1h-5zM17 644h4v2h-4zM439 212h3v2h-3zM628 537h1v2h-1zM237 36h2v1h-2zM616 378h2v2h-2zM616 405h1v2h-1zM698 173h5v2h-5zM116 275h2v1h-2zM379 300h4v1h-4zM400 241h4v2h-4zM117 312h3v3h-3zM301 515h4v2h-4zM202 155h5v3h-5zM724 723h1v1h-1zM685 73h5v3h-5zM117 418h2v3h-2zM159 233h4v2h-4zM127 536h2v3h-2zM501 763h3v2h-3zM485 497h3v1h-3zM594 671h3v1h-3zM808 766h2v1h-2zM635 704h2v2h-2zM274 592h1v1h-1zM679 430h2v2h-2zM157 177h2v2h-2zM199 732h2v1h-2zM785 27h3v2h-3zM708 673h4v1h-4zM631 676h2v1h-2zM735 92h2v2h-2zM341 674h3v3h-3zM566 750h4v3h-4zM769 168h1v2h-1zM16 376h3v2h-3zM711 254h3v1h-3zM192 664h1v1h-1zM658 151h4v1h-4zM244 97h5v1h-5zM396 541h2v1h-2zM648 414h1v1h-1zM604 529h3v2h-3zM667 634h1v2h-1zM635 125h3v2h-3zM36 714h1v3h-1zM233 447h2v3h-2zM346 353h3v1h-3zM625 344h5v2h-5zM782 616h2v1h-2zM392 475h2v1h-2zM353 630h4v3h-4zM373 265h3v1h-3zM420 739h2v1h-2zM592 616h5v1h-5zM419 551h2v3h-2zM612 258h4v2h-4zM787 778h5v1h-5zM686 218h3v2h-3zM293 639h2v2h-2zM441 227h3v1h-3zM177 441h2v1h-2zM122 398h4v2h-4zM615 48h2v2h-2zM396 340h1v1h-1zM59 513h4v2h-4zM463 160h1v2h-1zM92 736h3v3h-3zM492 204h5v1h-5zM698 509h4v1h-4zM279 203h3v2h-3zM26 650h1v2h-1zM162 138h2v3h-2zM556 705h4v2h-4zM473 240h3v1h-3zM764 591h1v1h-1zM351 77h5v1h-5zM349 110h2v1h-2zM217 149h4v3h-4zM562 340h2v1h-2zM586 540h4v1h-4zM309 583h3v2h-3zM58 481h4v3h-4zM337 760h5v1h-5zM732 627h5v3h-5zM110 40h3v2h-3zM619 449h3v1h-3zM154 83h3v2h-3zM297 85h3v2h-3zM122 502h2v1h-2zM581 683h3v1h-3zM26 730h2v3h-2zM195 400h3v3h-3zM548 150h4v1h-4zM55 287h4v1h-4zM192 64h4v1h-4zM510 214h3v1h-3zM807 421h3v2h-3zM306 459h2v3h-2zM642 92h3v2h-3zM278 539h5v1h-5zM699 773h2v3h-2zM541 124h1v2h-1zM796 33h4v2h-4zM239 380h3v3h-3zM575 231h1v3h-1zM14 761h2v1h-2zM290 369h2v3h-2zM699 606h4v2h-4zM475 637h3v3h-3zM158 245h1v3h-1zM410 98h2v3h-2zM783 425h3v2h-3zM654 67h1v3h-1zM484 677h5v1h-5zM791 50h2v3h-2zM382 159h3v3h-3zM802 671h1v2h-1zM157 70h4v1h-4zM391 494h2v2h-2zM149 97h2v2h-2zM671 253h2v2h-2zM108 221h2v1h-2zM483 323h3v2h-3zM629 726h3v3h-3zM499 28h3v1h-3zM764 248h4v1h-4zM542 235h5v2h-5zM429 683h4v3h-4zM650 553h4v2h-4zM135 40h4v2h-4zM332 602h4v2h-4zM157 346h3v2h-3zM64 262h3v2h-3zM175 193h2v2h-2zM506 244h3v1h-3zM568 464h2v1h-2zM183 274h4v1h-4zM554 166h2v1h-2zM313 285h5v1h-5zM5 91h2v2h-2zM634 141h1v1h-1zM384 512h1v1h-1zM325 591h2v3h-2zM758 112h3v3h-3zM17 598h3v2h-3zM93 665h3v2h-3zM244 631h4v1h-4zM503 497h4v3h-4zM140 723h1v2h-1zM588 127h4v2h-4zM318 413h5v1h-5zM562 92h3v2h-3zM103 626h2v1h-2zM516 543h2v2h-2zM517 552h3v2h-3zM140 43h3v2h-3zM208 348h3v1h-3zM541 399h5v1h-5zM515 591h2v2h-2zM456 368h2v2h-2zM62 135h5v2h-5zM109 124h2v2h-2zM291 283h2v2h-2zM349 700h4v2h-4zM603 210h5v2h-5zM798 669h4v1h-4zM364 419h3v1h-3zM357 83h3v1h-3zM618 126h5v1h-5zM523 282h1v2h-1zM322 556h4v1h-4zM545 112h3v2h-3zM83 161h2v1h-2zM276 68h3v1h-3zM477 763h3v2h-3zM266 607h5v2h-5zM225 623h5v3h-5zM179 685h3v1h-3zM532 167h3v3h-3zM213 72h2v2h-2zM146 576h2v3h-2zM704 411h1v3h-1zM92 243h2v1h-2zM263 279h3v2h-3zM679 290h2v1h-2zM78 174h2v1h-2zM636 766h5v1h-5zM343 221h2v2h-2zM766 408h1v2h-1zM396 261h3v3h-3zM803 664h1v2h-1zM444 461h3v2h-3zM229 105h1v1h-1zM627 54h1v3h-1zM722 167h3v2h-3zM216 511h5v3h-5zM192 352h2v2h-2zM738 581h3v3h-3zM722 249h5v1h-5zM207 310h2v2h-2zM497 256h1v1h-1zM757 119h3v2h-3zM136 391h3v2h-3zM649 122h4v3h-4zM240 102h1v1h-1zM332 567h3v2h-3zM612 166h2v1h-2zM366 772h3v3h-3zM431 482h5v3h-5zM465 719h2v3h-2zM127 448h3v1h-3zM44 686h4v1h-4zM68 695h2v2h-2zM92 109h2v1h-2zM140 248h2v2h-2zM603 405h2v3h-2zM600 438h5v1h-5zM63 626h5v1h-5zM322 440h1v3h-1zM138 186h1v1h-1zM645 690h5v1h-5zM415 207h2v1h-2zM213 108h3v1h-3zM507 138h2v2h-2zM22 638h3v2h-3zM812 407h5v2h-5zM675 110h2v1h-2zM292 475h3v1h-3zM481 551h3v1h-3zM60 627h1v1h-1zM699 595h5v2h-5zM691 331h2v2h-2zM178 79h5v1h-5zM525 753h3v1h-3zM578 42h4v1h-4zM329 178h2v2h-2zM508 646h1v1h-1zM759 549h3v3h-3zM656 596h2v1h-2zM667 131h1v1h-1zM174 145h5v1h-5zM63 271h1v3h-1zM730 353h4v3h-4zM141 55h2v1h-2zM204 48h3v1h-3zM185 190h3v1h-3zM810 504h4v3h-4zM425 607h3v1h-3zM695 443h4v1h-4zM480 46h3v2h-3zM319 259h5v2h-5zM619 314h4v3h-4zM478 615h3v2h-3zM796 632h4v1h-4zM65 300h2v1h-2zM513 621h3v2h-3zM551 344h4v1h-4zM582 204h3v1h-3zM94 350h2v1h-2zM422 616h5v1h-5zM325 456h5v2h-5zM127 525h3v2h-3zM437 79h4v3h-4zM611 64h2v2h-2zM591 549h4v2h-4zM163 373h2v1h-2zM443 336h5v2h-5zM618 95h3v1h-3zM602 441h5v2h-5zM524 373h4v2h-4zM79 397h3v1h-3zM619 454h2v1h-2zM472 562h4v2h-4zM69 183h3v2h-3zM20 627h2v1h-2zM488 498h2v2h-2zM316 489h2v2h-2zM526 340h1v2h-1zM39 775h1v1h-1zM531 299h5v1h-5zM11 78h2v2h-2zM438 638h2v3h-2zM389 200h4v2h-4zM68 422h3v1h-3zM91 454h5v1h-5zM385 627h4v2h-4zM547 416h3v1h-3zM488 228h5v2h-5zM357 266h5v1h-5zM17 369h5v3h-5zM513 189h3v2h-3zM551 591h3v1h-3zM799 120h4v1h-4zM435 463h4v3h-4zM751 552h3v1h-3zM30 294h3v1h-3zM736 497h4v3h-4zM131 148h5v2h-5zM322 448h1v2h-1zM743 383h4v2h-4zM629 465h4v1h-4zM359 310h2v3h-2zM436 248h1v3h-1zM243 181h2v1h-2zM526 718h2v3h-2zM409 494h2v1h-2zM616 45h5v1h-5zM519 514h2v2h-2zM491 655h3v1h-3zM92 574h2v3h-2zM428 124h2v2h-2zM380 760h3v1h-3zM279 84h2v1h-2zM711 501h1v2h-1zM690 543h5v3h-5zM687 108h1v2h-1zM485 617h5v1h-5zM66 678h2v1h-2zM779 428h1v2h-1zM410 599h3v2h-3zM514 50h4v2h-4zM316 234h3v1h-3zM744 626h3v2h-3zM508 356h1v1h-1zM447 680h3v3h-3zM28 744h1v2h-1zM248 327h4v2h-4zM33 595h2v3h-2zM222 518h3v3h-3zM393 665h1v2h-1zM491 326h2v3h-2zM612 195h1v2h-1zM394 700h3v2h-3zM683 433h2v2h-2zM589 778h5v1h-5zM382 678h3v2h-3zM680 443h2v2h-2zM595 412h2v2h-2zM328 624h5v3h-5zM237 347h3v1h-3zM677 750h4v1h-4zM336 148h5v2h-5zM253 776h3v2h-3zM451 305h2v3h-2zM345 243h4v1h-4zM431 676h2v1h-2zM62 125h1v2h-1zM711 375h3v1h-3zM660 290h4v1h-4zM463 179h3v2h-3zM150 625h3v1h-3zM303 94h2v1h-2zM514 751h2v2h-2zM786 760h2v3h-2zM54 102h3v3h-3zM265 349h2v3h-2zM309 373h5v2h-5zM726 252h5v2h-5zM434 626h3v1h-3zM282 334h3v2h-3zM648 676h5v1h-5zM597 644h5v2h-5zM357 422h5v1h-5zM316 205h3v2h-3zM273 544h2v1h-2zM733 390h2v3h-2zM232 120h2v1h-2zM136 394h1v1h-1zM343 491h5v3h-5zM578 582h4v1h-4zM219 717h5v2h-5zM9 713h2v3h-2zM174 284h1v1h-1zM327 625h5v2h-5zM738 706h1v1h-1zM709 117h3v1h-3zM542 25h5v3h-5zM783 182h4v1h-4zM541 390h2v1h-2zM352 745h4v1h-4zM787 419h1v1h-1zM78 713h4v3h-4zM67 242h3v3h-3zM681 632h5v3h-5zM194 35h2v1h-2zM49 395h3v1h-3zM314 377h4v1h-4zM60 766h4v3h-4zM5 77h2v3h-2zM164 202h3v1h-3zM713 390h5v2h-5zM340 240h2v3h-2zM739 126h2v1h-2zM537 550h1v1h-1zM609 532h2v1h-2zM776 529h4v2h-4zM512 29h2v2h-2zM70 54h2v1h-2zM142 433h1v3h-1zM656 246h3v1h-3zM783 516h3v1h-3zM229 604h3v1h-3zM369 694h2v2h-2zM663 408h2v2h-2zM796 283h4v1h-4zM493 109h3v3h-3zM771 417h4v1h-4zM362 309h3v2h-3zM121 417h3v2h-3zM489 298h5v3h-5zM179 163h1v3h-1zM805 129h4v3h-4zM58 136h2v2h-2zM50 331h2v1h-2zM456 63h2v1h-2zM711 170h3v2h-3zM73 689h3v1h-3zM552 516h4v1h-4zM409 72h4v1h-4zM713 680h4v2h-4zM174 329h2v2h-2zM64 671h5v3h-5zM131 728h5v1h-5zM326 333h3v2h-3zM713 152h3v3h-3zM608 188h3v3h-3zM215 413h2v2h-2zM757 232h3v3h-3zM545 668h3v2h-3zM346 269h1v3h-1zM812 207h5v2h-5zM472 224h2v2h-2zM428 643h1v2h-1zM80 255h3v3h-3zM804 108h5v1h-5zM703 698h4v1h-4zM446 105h2v1h-2zM745 540h3v1h-3zM724 36h3v2h-3zM655 436h1v3h-1zM161 682h4v1h-4zM216 180h5v1h-5zM568 173h3v2h-3zM425 614h3v2h-3zM673 173h3v1h-3zM276 272h4v1h-4zM45 90h3v3h-3zM120 666h2v2h-2zM211 57h3v2h-3zM793 254h2v2h-2zM73 470h3v3h-3zM704 601h3v1h-3zM291 53h3v3h-3zM450 523h2v1h-2zM617 513h5v1h-5zM139 508h4v2h-4zM683 106h3v1h-3zM182 163h2v3h-2zM430 268h3v2h-3zM576 354h3v2h-3zM288 675h3v3h-3zM611 755h3v3h-3zM208 767h3v1h-3zM697 253h5v1h-5zM198 344h5v2h-5zM488 137h2v2h-2zM465 226h1v2h-1zM613 475h2v1h-2zM743 56h2v2h-2zM252 335h3v1h-3zM695 370h3v1h-3zM210 508h5v2h-5zM189 721h4v2h-4zM466 254h3v2h-3zM632 646h5v1h-5zM28 222h3v2h-3zM491 161h3v2h-3zM636 503h1v1h-1zM333 611h2v2h-2zM481 46h1v2h-1zM429 608h3v1h-3zM781 213h4v3h-4zM193 552h1v3h-1zM211 369h3v2h-3zM272 663h5v3h-5zM603 26h3v1h-3zM286 192h5v3h-5zM244 750h4v2h-4zM510 672h2v2h-2zM575 519h1v1h-1zM299 65h4v1h-4zM33 319h2v2h-2zM718 301h3v2h-3zM627 419h2v2h-2zM565 92h2v3h-2zM736 499h2v1h-2zM55 734h3v3h-3zM759 389h3v2h-3zM341 56h2v1h-2zM651 490h3v2h-3zM82 652h2v1h-2zM597 572h2v1h-2zM691 44h2v1h-2zM448 681h3v2h-3zM182 52h2v1h-2zM738 31h1v3h-1zM360 473h4v2h-4zM112 327h1v1h-1zM429 638h3v1h-3zM642 173h2v2h-2zM27 381h5v1h-5zM572 640h3v3h-3zM427 118h2v2h-2zM556 280h2v1h-2zM446 617h1v2h-1zM253 380h2v1h-2zM257 645h4v1h-4zM362 139h1v1h-1zM793 25h1v1h-1zM3 753h1v1h-1zM810 777h3v1h-3zM532 182h2v2h-2zM209 561h1v3h-1zM344 695h3v1h-3zM366 448h3v2h-3zM257 121h3v3h-3zM138 50h5v2h-5zM18 72h2v3h-2zM186 612h2v3h-2zM203 452h5v1h-5zM339 703h5v2h-5zM123 720h3v2h-3zM98 607h5v2h-5zM85 537h5v2h-5zM162 238h5v2h-5zM535 443h1v1h-1zM103 282h4v1h-4zM701 30h5v3h-5zM356 215h2v2h-2zM181 240h2v3h-2zM449 524h2v1h-2zM188 779h3v2h-3zM333 348h5v1h-5zM406 351h1v2h-1zM206 716h3v3h-3zM542 518h1v2h-1zM444 620h3v1h-3zM541 612h2v1h-2zM767 490h4v1h-4zM487 366h2v1h-2zM768 261h3v2h-3zM37 240h4v2h-4zM411 601h3v3h-3zM130 645h3v3h-3zM692 608h3v2h-3zM500 279h3v2h-3zM211 556h5v2h-5zM758 689h5v2h-5zM24 528h4v2h-4zM134 416h2v3h-2zM537 585h2v1h-2zM370 337h5v3h-5zM137 712h5v2h-5zM749 161h3v2h-3zM218 464h2v3h-2zM763 335h2v3h-2zM442 608h3v3h-3zM208 270h3v1h-3zM768 546h3v1h-3zM127 578h3v2h-3zM466 748h2v2h-2zM180 533h4v2h-4zM808 322h3v2h-3zM563 646h4v2h-4zM800 600h3v1h-3zM703 251h3v1h-3zM429 292h4v1h-4zM551 189h2v3h-2zM317 722h3v3h-3zM619 203h4v3h-4zM659 185h5v2h-5zM649 380h4v1h-4zM384 136h2v3h-2zM807 360h2v1h-2zM184 690h1v1h-1zM468 109h5v1h-5zM68 357h3v3h-3zM281 535h4v1h-4zM231 361h2v2h-2zM613 696h5v2h-5zM352 720h3v1h-3zM595 174h3v1h-3zM16 329h3v1h-3zM159 468h3v1h-3zM249 262h3v1h-3zM37 346h3v1h-3zM233 121h2v1h-2zM545 60h5v3h-5zM476 64h4v1h-4zM290 607h1v2h-1zM25 267h4v2h-4zM719 427h4v2h-4zM647 470h2v1h-2zM281 332h3v1h-3zM481 580h3v2h-3zM552 55h4v1h-4zM209 206h1v1h-1zM559 219h3v1h-3zM608 360h1v2h-1zM630 577h5v2h-5zM604 426h2v1h-2zM170 343h4v2h-4zM57 152h1v1h-1zM663 705h2v1h-2zM804 505h2v2h-2zM754 629h2v1h-2zM417 245h1v2h-1zM764 274h3v2h-3zM232 280h2v1h-2zM538 41h1v2h-1zM658 700h3v3h-3zM69 730h3v1h-3zM578 172h3v1h-3zM243 166h1v3h-1zM258 475h2v1h-2zM274 481h3v1h-3zM649 557h3v1h-3zM31 133h1v2h-1zM691 101h3v2h-3zM557 416h4v2h-4zM234 332h5v1h-5zM451 77h2v2h-2zM193 506h2v1h-2zM804 191h1v1h-1zM527 539h2v3h-2zM577 357h2v3h-2zM54 299h2v3h-2zM135 58h3v2h-3zM735 450h3v2h-3zM171 355h3v2h-3zM662 520h2v2h-2zM388 73h2v3h-2zM191 523h2v1h-2zM115 779h3v1h-3zM129 550h4v2h-4zM400 57h3v3h-3zM522 655h2v3h-2zM311 206h3v2h-3zM470 417h2v3h-2zM699 466h2v1h-2zM672 607h5v3h-5zM81 679h2v2h-2zM348 490h2v1h-2zM628 255h4v3h-4zM404 657h2v2h-2zM467 230h4v1h-4zM309 266h3v1h-3zM342 342h3v3h-3zM659 683h5v2h-5zM793 619h4v2h-4zM78 53h3v3h-3zM400 107h2v1h-2zM316 641h3v1h-3zM119 778h4v1h-4zM576 703h2v1h-2zM673 106h2v2h-2zM680 698h1v3h-1zM388 289h3v2h-3zM551 329h4v3h-4zM452 735h4v3h-4zM108 633h1v2h-1zM662 274h4v1h-4zM128 380h3v3h-3zM316 295h5v2h-5zM682 30h5v3h-5zM245 271h3v1h-3zM478 515h2v3h-2zM86 174h1v1h-1zM307 289h3v1h-3zM284 436h1v1h-1zM131 85h2v1h-2zM347 631h3v2h-3zM481 405h3v2h-3zM317 622h2v1h-2zM350 101h5v1h-5zM206 170h2v1h-2zM523 371h2v1h-2zM499 41h3v1h-3zM114 197h5v1h-5zM491 154h2v2h-2zM670 210h3v3h-3zM751 744h2v2h-2zM726 665h3v1h-3zM536 723h4v3h-4zM75 580h2v3h-2zM315 417h3v3h-3zM554 425h1v2h-1zM137 507h3v2h-3zM41 181h3v2h-3zM282 766h2v2h-2zM163 672h5v1h-5zM626 277h4v2h-4zM147 595h4v2h-4zM688 349h2v2h-2zM799 298h3v1h-3zM181 292h1v2h-1zM297 505h5v2h-5zM39 737h1v3h-1zM512 550h4v3h-4zM349 661h1v2h-1zM295 95h2v1h-2zM493 227h4v3h-4zM362 59h2v2h-2zM219 106h3v2h-3zM560 363h3v3h-3zM215 569h1v1h-1zM562 503h3v2h-3zM488 101h5v1h-5zM747 353h4v2h-4zM409 595h1v1h-1zM463 491h5v1h-5zM534 561h2v1h-2zM283 389h1v2h-1zM597 747h5v1h-5zM144 556h1v3h-1zM80 732h2v3h-2zM457 313h5v2h-5zM302 239h3v3h-3zM236 40h3v2h-3zM624 53h4v3h-4zM544 86h2v1h-2zM532 104h3v1h-3zM365 164h3v2h-3zM362 779h2v1h-2zM785 710h4v1h-4zM90 102h2v2h-2zM721 530h1v1h-1zM188 762h3v1h-3zM499 471h4v2h-4zM70 568h1v2h-1zM720 84h2v2h-2zM282 390h2v2h-2zM516 718h2v1h-2zM791 425h2v1h-2zM153 375h3v1h-3zM224 59h1v2h-1zM408 380h3v1h-3zM635 712h2v1h-2zM152 103h4v3h-4zM630 358h5v2h-5zM530 77h4v1h-4zM84 314h2v3h-2zM399 314h5v1h-5zM426 512h2v1h-2zM338 257h4v3h-4zM299 279h3v2h-3zM462 387h3v2h-3zM182 414h5v1h-5zM165 746h1v2h-1zM234 418h1v1h-1zM270 710h4v2h-4zM119 641h3v1h-3zM473 734h3v2h-3zM56 80h4v1h-4zM83 514h3v1h-3zM65 615h4v2h-4zM735 629h4v2h-4zM8 110h3v1h-3zM740 518h3v3h-3zM126 373h2v2h-2zM413 456h4v2h-4zM507 203h3v3h-3zM296 406h2v2h-2zM455 388h3v2h-3zM68 183h3v1h-3zM649 535h3v3h-3zM691 226h1v3h-1zM607 663h1v1h-1zM215 358h3v1h-3zM318 205h3v1h-3zM809 487h2v1h-2zM648 501h2v1h-2zM489 602h2v2h-2zM639 100h2v1h-2zM435 215h3v3h-3zM693 32h3v2h-3zM195 476h5v2h-5zM550 565h3v2h-3zM372 477h5v1h-5zM191 312h3v2h-3zM238 468h1v1h-1zM681 613h1v2h-1zM240 238h4v1h-4zM515 541h2v1h-2zM259 226h3v1h-3zM121 745h3v2h-3zM614 181h3v2h-3zM4 759h1v1h-1zM186 294h2v2h-2zM194 712h3v1h-3zM173 359h4v2h-4zM646 390h1v1h-1zM358 79h4v2h-4zM563 211h5v1h-5zM578 153h3v2h-3zM541 402h3v2h-3zM631 559h2v2h-2zM657 558h3v2h-3zM569 710h4v2h-4zM480 139h3v1h-3zM545 47h2v1h-2zM24 727h1v3h-1zM646 703h3v2h-3zM797 672h2v1h-2zM422 197h5v2h-5zM486 486h3v2h-3zM61 240h1v1h-1zM266 186h5v2h-5zM766 81h5v2h-5zM402 650h2v3h-2zM178 609h2v3h-2zM265 732h3v3h-3zM251 243h4v1h-4zM189 706h2v2h-2zM699 176h3v3h-3zM61 182h2v2h-2zM64 279h3v1h-3zM67 768h2v2h-2zM245 104h2v3h-2zM85 334h2v2h-2zM746 76h2v2h-2zM294 97h1v2h-1zM225 64h2v1h-2zM404 133h5v3h-5zM529 551h2v2h-2zM53 422h4v2h-4zM120 210h2v3h-2zM294 303h3v1h-3zM501 338h1v1h-1zM694 263h3v2h-3zM159 45h2v3h-2zM242 181h2v3h-2zM312 763h3v2h-3zM303 637h1v3h-1zM14 544h2v1h-2zM663 88h3v2h-3zM503 255h1v1h-1zM650 754h5v1h-5zM413 76h1v2h-1zM614 215h5v1h-5zM324 443h1v1h-1zM618 98h3v1h-3zM48 30h3v3h-3zM321 321h3v3h-3zM479 189h2v3h-2zM742 364h3v2h-3zM253 401h2v1h-2zM579 417h2v1h-2zM713 136h5v2h-5zM334 723h2v1h-2zM302 553h4v2h-4zM788 390h3v2h-3zM293 266h4v1h-4zM326 616h4v1h-4zM507 607h3v3h-3zM559 363h3v2h-3zM547 489h2v3h-2zM498 250h1v2h-1zM676 132h5v2h-5zM360 665h4v2h-4zM591 42h2v3h-2zM720 673h1v2h-1zM145 754h2v2h-2zM761 98h1v2h-1zM365 577h2v3h-2zM285 288h1v3h-1zM800 220h1v2h-1zM418 393h5v3h-5zM368 556h3v1h-3zM289 56h2v1h-2zM551 514h1v3h-1zM531 642h3v1h-3zM568 658h2v2h-2zM655 596h1v2h-1zM29 156h1v2h-1zM120 35h2v3h-2zM453 642h3v1h-3zM626 595h4v2h-4zM275 502h3v2h-3zM763 488h3v3h-3zM589 553h2v1h-2zM533 169h3v3h-3zM398 769h1v2h-1zM135 215h3v1h-3zM728 158h4v3h-4zM363 199h4v2h-4zM660 37h5v3h-5zM48 217h4v1h-4zM494 276h5v2h-5zM231 473h2v1h-2zM287 630h5v2h-5zM627 662h4v2h-4zM449 359h4v2h-4zM152 528h3v2h-3zM670 399h4v2h-4zM121 665h4v1h-4zM29 461h3v3h-3zM736 225h5v2h-5zM518 349h2v1h-2zM292 450h3v2h-3zM479 182h5v1h-5zM662 274h3v1h-3zM532 90h3v1h-3zM394 325h5v3h-5zM48 37h5v1h-5zM650 499h3v2h-3zM298 582h5v1h-5zM743 545h5v3h-5zM676 643h3v1h-3zM51 219h2v2h-2zM34 712h2v1h-2zM509 730h2v1h-2zM90 137h4v2h-4zM520 144h2v1h-2zM549 131h5v2h-5zM190 123h4v2h-4zM72 680h2v1h-2zM619 509h3v1h-3zM355 68h2v2h-2zM236 518h5v2h-5zM605 705h3v2h-3zM414 569h5v2h-5zM3 61h3v1h-3zM492 47h1v2h-1zM603 193h4v2h-4zM732 604h2v1h-2zM55 674h3v3h-3zM714 550h2v1h-2zM521 573h2v2h-2zM441 362h3v2h-3zM63 644h3v1h-3zM258 173h3v2h-3zM251 610h3v1h-3zM440 460h5v2h-5zM416 669h2v1h-2zM408 93h4v2h-4zM44 32h2v2h-2zM694 662h4v2h-4zM448 660h3v3h-3zM432 220h2v1h-2zM44 333h2v1h-2zM788 423h5v1h-5zM632 294h2v2h-2zM133 35h5v1h-5zM790 414h3v1h-3zM796 703h5v1h-5zM384 615h1v2h-1zM638 576h1v2h-1zM313 373h2v2h-2zM623 291h1v1h-1zM510 644h5v1h-5zM513 237h4v3h-4zM556 61h1v3h-1zM381 585h5v2h-5zM334 747h4v1h-4zM453 408h3v1h-3zM254 497h2v2h-2zM650 699h4v1h-4zM759 622h3v1h-3zM666 435h2v2h-2zM244 180h1v3h-1zM191 634h1v1h-1zM74 191h3v2h-3zM235 231h4v1h-4zM579 104h3v1h-3zM212 192h3v3h-3zM284 590h4v1h-4zM456 716h2v1h-2zM737 644h2v3h-2zM601 632h2v3h-2zM521 518h2v3h-2zM655 348h2v2h-2zM488 621h1v2h-1zM229 524h4v1h-4zM406 595h1v2h-1zM659 298h2v3h-2zM326 398h5v2h-5zM221 284h4v2h-4zM136 279h2v2h-2zM797 103h1v1h-1zM32 548h3v2h-3zM65 661h5v1h-5zM396 163h2v1h-2zM316 118h1v1h-1zM750 681h1v3h-1zM303 649h1v3h-1zM606 126h4v2h-4zM511 471h5v3h-5zM88 504h2v3h-2zM262 695h2v3h-2zM495 114h3v3h-3zM476 412h2v1h-2zM560 301h3v2h-3zM597 337h1v1h-1zM335 667h4v2h-4zM432 616h4v2h-4zM269 466h2v1h-2zM445 255h5v2h-5zM25 574h2v2h-2zM415 143h3v2h-3zM468 603h2v3h-2zM87 290h2v1h-2zM59 683h1v2h-1zM392 769h5v1h-5zM549 131h1v1h-1zM22 287h2v3h-2zM279 419h4v1h-4zM456 50h1v1h-1zM399 397h3v2h-3zM248 359h5v3h-5zM424 226h2v1h-2zM209 214h1v3h-1zM209 628h2v2h-2zM407 536h2v1h-2zM672 375h3v2h-3zM411 636h4v2h-4zM265 630h2v1h-2zM579 121h3v1h-3zM716 50h4v2h-4zM493 307h3v3h-3zM661 203h3v1h-3zM519 556h1v2h-1zM442 756h3v1h-3zM720 397h3v2h-3zM738 509h5v2h-5zM429 490h5v3h-5zM45 163h3v2h-3zM73 417h3v2h-3zM200 564h2v1h-2zM203 453h3v3h-3zM567 544h2v1h-2zM571 286h1v2h-1zM445 651h2v2h-2zM397 470h4v1h-4zM63 498h1v1h-1zM626 384h5v3h-5zM131 358h2v3h-2zM809 743h3v1h-3zM228 41h1v2h-1zM690 354h1v3h-1zM753 453h5v1h-5zM5 752h5v1h-5zM237 224h2v2h-2zM50 578h5v3h-5zM508 375h2v1h-2zM500 244h2v2h-2zM122 604h2v2h-2zM384 286h3v1h-3zM746 424h3v1h-3zM543 318h2v1h-2zM754 124h1v1h-1zM21 589h3v2h-3zM163 544h2v1h-2zM9 674h2v2h-2zM719 469h5v2h-5zM80 673h4v1h-4zM201 183h5v2h-5zM783 522h4v2h-4zM717 601h3v2h-3zM426 61h1v2h-1zM128 172h4v1h-4zM441 567h2v1h-2zM802 600h2v1h-2zM701 346h3v1h-3zM34 141h3v1h-3zM527 233h4v3h-4zM682 774h3v2h-3zM593 544h3v3h-3zM333 765h3v2h-3zM321 696h3v2h-3zM446 436h5v1h-5zM329 646h3v2h-3zM703 174h5v3h-5zM245 100h2v3h-2zM416 170h3v1h-3zM565 64h4v1h-4zM54 350h2v1h-2zM561 682h2v2h-2zM462 388h2v2h-2zM785 160h3v2h-3zM356 595h2v2h-2zM651 182h2v1h-2zM618 180h2v1h-2zM293 720h1v3h-1zM793 719h2v2h-2zM319 520h4v3h-4zM130 673h1v2h-1zM43 365h2v2h-2zM482 611h3v2h-3zM448 285h1v1h-1zM261 40h1v2h-1zM28 84h4v2h-4zM638 443h3v3h-3zM163 230h2v2h-2zM641 251h5v3h-5zM478 615h2v3h-2zM751 343h2v1h-2zM777 157h1v1h-1zM788 279h5v2h-5zM129 656h2v2h-2zM434 493h3v2h-3zM197 179h3v1h-3zM599 488h2v1h-2zM307 762h2v3h-2zM604 436h5v2h-5zM465 495h3v3h-3zM570 163h3v3h-3zM647 35h3v2h-3zM322 239h2v2h-2zM69 642h3v2h-3zM545 292h2v2h-2zM717 594h2v2h-2zM91 436h2v2h-2zM304 369h1v2h-1zM791 607h3v2h-3zM341 451h5v2h-5zM337 154h3v3h-3zM8 670h3v1h-3zM104 450h5v3h-5zM200 32h4v2h-4zM809 768h3v1h-3zM747 177h2v2h-2zM71 316h2v1h-2zM88 146h2v3h-2zM14 619h4v1h-4zM192 766h3v2h-3zM723 181h1v1h-1zM436 111h3v2h-3zM532 386h5v1h-5zM245 626h3v1h-3zM474 694h2v3h-2zM30 188h4v3h-4zM724 746h2v1h-2zM773 405h3v2h-3zM254 124h4v3h-4zM302 762h3v1h-3zM276 516h3v2h-3zM415 41h3v2h-3zM221 60h5v1h-5zM173 622h3v3h-3zM791 727h3v1h-3zM622 746h3v2h-3zM718 552h2v2h-2zM644 270h4v2h-4zM255 445h5v3h-5zM32 236h3v1h-3zM322 599h1v1h-1zM592 410h4v1h-4zM679 35h3v3h-3zM360 294h3v2h-3zM239 247h4v3h-4zM284 540h4v2h-4zM714 750h3v3h-3zM178 25h2v2h-2zM343 355h5v2h-5zM98 239h2v2h-2zM101 191h3v1h-3zM299 186h2v2h-2zM157 693h2v3h-2zM643 51h5v1h-5zM116 230h5v1h-5zM766 545h3v2h-3zM302 420h2v3h-2zM169 527h5v3h-5zM348 136h4v1h-4zM15 37h3v1h-3zM540 581h3v1h-3zM146 590h2v1h-2zM64 234h4v1h-4zM484 495h4v2h-4zM367 377h3v1h-3zM79 726h2v2h-2zM600 245h3v2h-3zM24 753h5v2h-5zM512 33h2v2h-2zM328 632h2v1h-2zM590 763h4v1h-4zM574 555h3v3h-3zM418 719h4v1h-4zM388 430h1v1h-1zM335 665h3v3h-3zM127 215h2v2h-2zM418 279h5v1h-5zM373 27h2v2h-2zM616 205h2v1h-2zM611 43h5v3h-5zM81 463h2v2h-2zM432 127h4v1h-4zM398 284h3v1h-3zM730 185h5v1h-5zM63 569h1v1h-1zM310 637h3v2h-3zM531 616h2v1h-2zM219 405h2v1h-2zM576 522h2v3h-2zM128 334h4v2h-4zM652 30h5v2h-5zM506 315h3v1h-3zM302 558h4v1h-4zM647 664h1v1h-1zM438 341h3v1h-3zM659 756h5v2h-5zM449 140h2v2h-2zM257 658h3v2h-3zM199 591h1v2h-1zM614 544h2v1h-2zM417 70h2v1h-2zM215 750h2v2h-2zM58 608h4v1h-4zM658 612h1v1h-1zM587 658h3v1h-3zM527 526h1v2h-1zM619 404h3v3h-3zM14 344h2v2h-2zM665 153h3v1h-3zM390 545h2v2h-2zM198 393h1v3h-1zM254 766h3v3h-3zM129 257h1v2h-1zM494 714h2v3h-2zM436 246h3v2h-3zM781 459h2v1h-2zM381 235h3v2h-3zM603 463h5v2h-5zM200 580h2v1h-2zM389 634h4v1h-4zM223 455h3v3h-3zM325 350h3v1h-3zM101 155h5v1h-5zM237 448h4v1h-4zM189 85h5v2h-5zM26 575h2v1h-2zM78 242h2v1h-2zM528 535h3v2h-3zM478 759h3v2h-3zM661 710h3v2h-3zM755 189h3v1h-3zM270 283h4v3h-4zM280 605h4v2h-4zM204 616h1v2h-1zM302 629h2v1h-2zM98 539h1v1h-1zM807 590h4v3h-4zM141 136h5v2h-5zM90 276h2v2h-2zM558 684h2v3h-2zM388 217h1v1h-1zM155 305h5v3h-5zM325 241h5v3h-5zM363 287h2v1h-2zM626 191h3v1h-3zM544 328h3v2h-3zM321 115h5v2h-5zM198 278h2v2h-2zM523 524h2v2h-2zM396 314h3v3h-3zM53 264h2v1h-2zM269 742h2v1h-2zM105 108h2v3h-2zM751 569h2v1h-2zM229 291h1v1h-1zM234 417h4v2h-4zM233 492h2v1h-2zM341 61h3v2h-3zM674 694h5v1h-5zM333 424h4v1h-4zM690 618h3v2h-3zM455 446h2v1h-2zM67 171h3v1h-3zM699 254h1v1h-1zM170 227h1v3h-1zM390 65h1v2h-1zM802 596h5v1h-5zM627 490h3v2h-3zM133 231h5v2h-5zM402 364h1v1h-1zM187 222h3v1h-3zM50 506h3v1h-3zM239 37h2v3h-2zM564 503h5v2h-5zM334 665h2v1h-2zM705 118h5v1h-5zM629 611h5v2h-5zM653 465h3v1h-3zM38 339h3v2h-3zM200 604h3v2h-3zM483 365h2v2h-2zM670 50h5v2h-5zM453 713h5v1h-5zM681 504h2v2h-2zM108 362h1v3h-1zM350 151h4v3h-4zM58 405h4v2h-4zM635 638h3v2h-3zM771 560h4v1h-4zM796 694h5v1h-5zM560 378h1v3h-1zM16 242h3v2h-3zM468 665h4v1h-4zM684 128h1v2h-1zM194 310h1v1h-1zM132 108h4v1h-4zM749 299h3v1h-3zM530 172h3v1h-3zM587 58h4v1h-4zM696 721h2v1h-2zM281 128h4v1h-4zM561 604h4v2h-4zM589 329h5v1h-5zM172 705h3v1h-3zM451 343h1v3h-1zM391 286h5v1h-5zM236 719h5v1h-5zM591 73h3v2h-3zM379 614h3v2h-3zM640 585h3v2h-3zM702 733h5v2h-5zM105 94h3v2h-3zM338 235h3v2h-3zM453 382h2v3h-2zM456 115h5v3h-5zM174 532h3v1h-3zM766 721h5v2h-5zM40 329h4v2h-4zM145 96h1v1h-1zM794 738h5v2h-5zM44 204h4v1h-4zM638 701h3v3h-3zM277 396h1v2h-1zM476 102h2v2h-2zM307 100h4v1h-4zM719 777h4v1h-4zM506 684h3v2h-3zM64 64h2v3h-2zM503 410h3v1h-3zM61 452h2v2h-2zM164 377h5v1h-5zM487 767h4v2h-4zM173 449h1v2h-1zM7 231h3v2h-3zM497 86h5v1h-5zM89 373h5v3h-5zM676 577h2v2h-2zM6 493h5v2h-5zM258 164h5v1h-5zM581 568h4v1h-4zM698 414h5v1h-5zM608 718h2v2h-2zM317 179h3v2h-3zM250 630h3v2h-3zM242 433h3v1h-3zM579 749h1v3h-1zM153 25h3v2h-3zM614 684h1v1h-1zM206 610h1v2h-1zM644 452h3v2h-3zM378 214h2v2h-2zM668 354h3v2h-3zM620 95h2v1h-2zM798 397h1v2h-1zM594 156h3v1h-3z"/><path fill="#0c0c64" d="M467 395h2v1h-2zM459 316h4v2h-4zM135 278h3v2h-3zM287 165h5v2h-5zM543 395h2v3h-2zM231 652h5v1h-5zM671 377h5v1h-5zM31 179h3v2h-3zM145 469h5v1h-5zM137 87h4v2h-4zM533 568h3v2h-3zM256 740h3v2h-3zM220 710h2v1h-2zM43 210h2v1h-2zM61 729h2v2h-2zM278 42h4v1h-4zM197 551h3v1h-3zM636 683h2v1h-2zM757 510h2v1h-2zM410 147h2v1h-2zM52 312h1v1h-1zM806 463h1v2h-1zM662 318h3v1h-3zM329 269h2v2h-2zM812 246h1v2h-1zM194 253h3v2h-3zM64 213h3v2h-3zM324 775h1v1h-1zM35 344h4v2h-4zM634 69h2v2h-2zM307 28h4v3h-4zM735 501h5v2h-5zM338 352h3v2h-3zM638 715h2v3h-2zM107 29h3v1h-3zM42 638h4v1h-4zM322 104h2v1h-2zM55 344h4v3h-4zM447 185h3v1h-3zM409 116h3v3h-3zM505 227h2v1h-2zM801 494h5v1h-5zM531 284h2v3h-2zM273 36h1v3h-1zM193 268h2v1h-2zM661 544h4v2h-4zM522 40h2v2h-2zM745 264h3v2h-3zM207 571h4v1h-4zM292 74h4v2h-4zM790 641h3v2h-3zM165 315h5v1h-5zM240 535h2v1h-2zM788 107h3v3h-3zM621 439h1v1h-1zM434 259h4v3h-4zM323 291h4v1h-4zM422 555h4v1h-4zM338 35h3v2h-3zM90 700h2v1h-2zM397 83h1v3h-1zM573 84h3v2h-3zM616 777h1v1h-1zM489 648h5v1h-5zM692 738h4v3h-4zM181 128h4v1h-4zM145 341h3v2h-3zM87 684h3v1h-3zM585 273h3v1h-3zM704 410h3v1h-3zM90 577h3v2h-3zM696 429h3v1h-3zM241 432h3v3h-3zM68 637h4v2h-4zM151 350h5v1h-5zM454 269h5v1h-5zM15 504h4v1h-4zM163 250h1v3h-1zM299 450h2v1h-2zM204 640h1v1h-1zM718 224h2v1h-2zM143 579h3v1h-3zM346 757h3v3h-3zM409 489h4v1h-4zM697 663h2v3h-2zM336 528h2v2h-2zM389 620h2v1h-2zM341 356h5v3h-5zM265 603h3v2h-3zM304 731h2v3h-2zM604 202h2v1h-2zM490 541h2v1h-2zM625 547h2v1h-2zM478 668h4v1h-4zM183 55h2v2h-2zM3 139h5v2h-5zM718 235h3v3h-3zM380 164h3v2h-3zM680 81h3v2h-3zM67 474h1v1h-1zM354 568h4v1h-4zM352 778h4v1h-4zM368 764h3v1h-3zM200 735h3v1h-3zM299 728h4v2h-4zM342 615h3v2h-3zM235 46h2v2h-2zM145 740h1v3h-1zM652 126h2v2h-2zM804 518h3v2h-3zM567 699h2v1h-2zM461 230h3v2h-3zM31 242h2v2h-2zM348 203h1v2h-1zM615 434h2v2h-2zM646 258h3v1h-3zM623 399h4v1h-4zM790 298h5v1h-5zM466 242h3v1h-3zM36 624h2v1h-2zM511 104h2v1h-2zM204 545h1v2h-1zM399 419h3v1h-3zM206 704h1v1h-1zM630 296h2v2h-2zM316 760h3v2h-3zM436 322h3v2h-3zM265 385h2v2h-2zM59 588h4v2h-4zM146 441h5v1h-5zM308 594h3v3h-3zM334 61h2v1h-2zM301 230h4v1h-4zM609 650h3v2h-3zM657 152h1v1h-1zM693 762h4v2h-4zM456 727h3v1h-3zM715 161h1v1h-1zM303 263h5v3h-5zM375 208h1v2h-1zM681 117h2v1h-2zM181 335h2v1h-2zM424 441h1v1h-1zM355 168h2v1h-2zM643 76h5v2h-5zM713 335h1v2h-1zM805 429h5v2h-5zM221 110h2v2h-2zM373 337h4v2h-4zM461 343h5v3h-5zM280 172h2v3h-2zM591 532h5v1h-5zM358 168h2v3h-2zM489 227h3v2h-3zM211 662h3v3h-3zM288 573h3v3h-3zM408 567h5v2h-5zM371 296h2v1h-2zM101 642h4v2h-4zM426 93h3v1h-3zM690 269h3v1h-3zM724 745h3v3h-3zM524 304h3v1h-3zM459 629h3v3h-3zM710 388h3v1h-3zM468 129h2v1h-2zM375 507h3v1h-3zM329 512h5v1h-5zM365 282h4v1h-4zM752 768h3v1h-3zM586 766h4v1h-4zM237 30h3v3h-3zM249 249h5v1h-5zM730 123h2v1h-2zM808 415h1v1h-1zM27 216h5v3h-5zM696 121h1v1h-1zM218 775h5v1h-5zM368 361h1v1h-1zM709 202h3v1h-3zM806 256h1v1h-1zM197 99h1v1h-1zM69 327h1v2h-1zM173 560h4v1h-4zM172 317h5v2h-5zM33 254h4v1h-4zM123 521h3v1h-3zM498 246h3v3h-3zM248 559h2v3h-2zM474 773h2v1h-2zM645 693h5v3h-5zM39 317h3v1h-3zM314 346h3v1h-3zM126 305h3v1h-3zM537 163h3v2h-3zM724 472h2v1h-2zM122 669h5v2h-5zM170 91h3v2h-3zM788 627h1v1h-1zM493 289h2v1h-2zM56 738h2v1h-2zM237 343h5v1h-5zM727 488h5v2h-5zM66 256h3v2h-3zM450 520h1v2h-1zM528 252h3v2h-3zM38 332h4v1h-4zM678 453h1v1h-1zM41 359h2v2h-2zM748 200h5v1h-5zM689 81h2v1h-2zM68 127h1v2h-1zM191 561h2v3h-2zM368 128h2v3h-2zM667 589h5v1h-5zM182 262h3v1h-3zM456 113h5v1h-5zM151 666h2v2h-2zM23 383h3v3h-3zM399 649h3v3h-3zM646 576h1v2h-1zM592 39h3v2h-3zM664 29h3v3h-3zM596 654h2v2h-2zM198 300h2v3h-2zM590 584h3v2h-3zM782 109h3v2h-3zM492 51h1v1h-1zM457 242h1v2h-1zM439 114h2v2h-2zM368 272h5v1h-5zM518 269h1v3h-1zM111 748h3v2h-3zM755 688h4v1h-4zM680 489h1v1h-1zM560 322h2v2h-2zM36 472h3v3h-3zM137 372h5v2h-5zM110 291h5v2h-5zM418 289h2v1h-2zM471 193h5v2h-5zM62 54h3v1h-3zM181 735h2v2h-2zM208 584h3v3h-3zM636 260h3v1h-3zM708 489h3v1h-3zM137 369h2v1h-2zM807 491h5v1h-5zM177 324h4v1h-4zM692 755h3v1h-3zM162 446h2v3h-2zM155 127h2v3h-2zM753 128h1v3h-1zM546 512h2v1h-2zM124 106h4v2h-4zM654 538h4v2h-4zM457 417h1v2h-1zM521 758h5v1h-5zM318 407h2v2h-2zM528 305h3v3h-3zM447 501h2v3h-2zM141 585h4v1h-4zM574 40h1v2h-1zM182 394h2v3h-2zM179 393h5v2h-5zM62 406h3v1h-3zM130 630h1v3h-1zM715 521h3v1h-3zM167 220h1v3h-1zM344 770h3v2h-3zM15 52h1v1h-1zM504 739h3v2h-3zM342 339h3v1h-3zM253 56h4v1h-4zM507 78h1v1h-1zM695 605h3v2h-3zM316 355h1v2h-1zM112 120h2v2h-2zM604 471h4v2h-4zM547 395h4v1h-4zM198 31h3v2h-3zM579 548h2v1h-2zM60 379h2v1h-2zM458 732h5v2h-5zM707 165h4v2h-4zM426 301h4v2h-4zM440 281h1v3h-1zM744 68h2v2h-2zM786 367h3v1h-3zM771 578h1v2h-1zM396 498h3v2h-3zM38 119h3v2h-3zM355 593h5v1h-5zM531 617h3v1h-3zM157 77h4v2h-4zM692 356h1v1h-1zM610 747h4v2h-4zM458 706h3v2h-3zM155 552h2v2h-2zM489 430h2v2h-2zM269 118h2v1h-2zM267 565h1v3h-1zM788 145h3v2h-3zM194 694h3v2h-3zM142 591h4v2h-4zM482 194h1v2h-1zM708 136h3v1h-3zM675 465h1v1h-1zM573 576h1v1h-1zM791 177h2v3h-2zM780 614h3v2h-3zM666 105h3v3h-3zM555 380h3v1h-3zM634 355h2v3h-2zM118 371h2v2h-2zM729 416h3v2h-3zM735 570h5v2h-5zM627 458h3v1h-3zM434 473h2v1h-2zM360 43h1v1h-1zM807 29h3v2h-3zM810 768h3v1h-3zM230 777h4v1h-4zM5 690h2v1h-2zM471 697h2v2h-2zM197 668h3v3h-3zM357 143h2v3h-2zM92 249h1v3h-1zM712 191h5v3h-5zM672 506h2v3h-2zM331 447h3v3h-3zM8 177h2v1h-2zM44 682h3v3h-3zM79 449h3v2h-3zM123 127h2v2h-2zM157 533h2v1h-2zM717 231h3v2h-3zM611 76h2v1h-2zM662 165h3v3h-3zM536 388h1v1h-1zM117 121h5v2h-5zM549 638h3v2h-3zM338 211h5v2h-5zM477 752h1v1h-1zM723 660h3v2h-3zM120 606h5v3h-5zM622 694h2v2h-2zM504 470h3v3h-3zM550 88h3v2h-3zM689 87h2v1h-2zM285 78h4v3h-4zM736 217h3v2h-3zM647 709h3v1h-3zM648 475h3v2h-3zM680 374h2v1h-2zM93 434h5v1h-5zM441 613h3v2h-3zM194 698h5v2h-5zM520 42h3v1h-3zM195 480h3v1h-3zM167 36h2v2h-2zM457 139h3v3h-3zM223 292h3v1h-3zM156 58h2v3h-2zM731 350h5v3h-5zM710 373h2v1h-2zM191 676h1v3h-1zM487 602h4v1h-4zM108 634h1v3h-1zM383 573h4v3h-4zM782 770h3v2h-3zM60 230h2v2h-2zM10 360h2v1h-2zM217 758h5v2h-5zM534 157h4v2h-4zM406 55h2v2h-2zM223 720h3v1h-3zM802 421h3v1h-3zM501 336h4v2h-4zM743 709h1v1h-1zM216 173h2v1h-2zM65 48h1v1h-1zM433 159h1v2h-1zM8 602h2v1h-2zM200 373h4v1h-4zM121 489h4v3h-4zM183 166h5v2h-5zM693 610h5v1h-5zM325 709h1v1h-1zM284 374h1v3h-1zM30 298h3v3h-3zM726 520h3v2h-3zM668 653h1v2h-1zM58 325h2v2h-2zM293 623h4v3h-4zM305 48h1v2h-1zM371 407h4v1h-4zM714 134h3v2h-3zM434 658h1v1h-1zM476 551h2v2h-2zM24 562h1v1h-1zM353 182h3v1h-3zM571 331h5v1h-5zM641 188h3v3h-3zM733 82h1v2h-1zM520 696h3v2h-3zM355 369h3v2h-3zM740 280h3v2h-3zM603 115h3v1h-3zM609 82h1v2h-1zM543 284h2v1h-2zM477 192h1v3h-1zM332 596h2v1h-2zM439 646h3v2h-3zM314 765h3v3h-3zM702 647h1v3h-1zM443 27h1v3h-1zM603 497h1v3h-1zM595 756h3v2h-3zM620 76h2v1h-2zM189 246h3v3h-3zM553 341h1v2h-1zM360 608h1v1h-1zM724 184h1v2h-1zM643 231h4v2h-4zM540 765h3v2h-3zM426 721h1v2h-1zM73 239h2v1h-2zM480 540h2v3h-2zM636 161h2v1h-2zM308 71h2v1h-2zM611 672h3v2h-3zM108 758h1v2h-1zM290 306h4v2h-4zM794 507h3v1h-3zM117 541h1v2h-1zM99 740h2v2h-2zM229 173h2v1h-2zM276 585h3v1h-3zM355 410h1v1h-1zM220 238h2v2h-2zM369 505h2v2h-2zM453 561h4v3h-4zM326 214h3v2h-3zM810 355h3v1h-3zM75 446h5v2h-5zM224 316h2v1h-2zM475 278h4v2h-4zM643 323h2v3h-2zM422 143h1v3h-1zM231 674h3v2h-3zM619 718h3v3h-3zM453 558h2v2h-2zM471 192h5v1h-5zM152 603h3v2h-3zM315 720h3v1h-3zM260 706h3v1h-3zM314 328h2v2h-2zM179 467h2v2h-2zM792 30h3v1h-3zM231 609h4v3h-4zM515 466h1v2h-1zM246 462h5v3h-5zM43 231h5v2h-5zM588 779h4v1h-4zM768 312h3v2h-3zM428 181h1v1h-1zM354 276h2v1h-2zM354 369h3v1h-3zM682 98h4v2h-4zM428 168h1v3h-1zM215 618h3v1h-3zM532 480h1v2h-1zM439 643h2v1h-2zM673 337h2v1h-2zM427 265h2v2h-2zM228 165h1v1h-1zM511 109h1v1h-1zM689 752h3v3h-3zM64 658h1v1h-1zM27 117h4v3h-4zM526 758h1v3h-1zM347 153h4v3h-4zM622 397h2v3h-2zM718 587h2v2h-2zM110 168h4v1h-4zM682 619h3v1h-3zM76 706h5v2h-5zM482 91h2v1h-2zM320 142h4v1h-4zM144 585h3v3h-3zM587 773h2v1h-2zM803 544h2v2h-2zM719 425h3v2h-3zM720 773h4v2h-4zM188 552h3v2h-3zM161 27h5v2h-5zM701 576h2v2h-2zM60 551h1v2h-1zM332 450h5v2h-5zM582 414h1v2h-1zM352 732h4v2h-4zM189 733h4v3h-4zM53 341h3v1h-3zM259 508h2v1h-2zM257 206h2v1h-2zM52 420h1v1h-1zM232 609h2v2h-2zM453 541h3v3h-3zM390 282h2v3h-2zM689 33h5v2h-5zM152 410h5v1h-5zM345 370h2v2h-2zM160 203h1v1h-1zM499 415h3v2h-3zM321 195h1v3h-1zM344 221h2v3h-2zM552 496h4v2h-4zM673 335h1v1h-1zM247 703h2v3h-2zM776 285h3v1h-3zM220 390h4v3h-4zM374 657h3v2h-3zM218 618h5v2h-5zM732 676h3v1h-3zM655 348h2v2h-2zM698 778h2v2h-2zM445 46h3v3h-3zM538 538h2v1h-2zM219 156h2v2h-2zM485 484h2v1h-2zM554 268h5v2h-5zM483 624h3v2h-3zM583 44h3v2h-3zM772 776h4v3h-4zM232 268h2v1h-2zM78 506h1v1h-1zM103 58h3v3h-3zM691 221h2v2h-2zM50 697h3v1h-3zM759 732h4v1h-4zM58 515h2v1h-2zM510 78h2v3h-2zM485 756h2v2h-2zM454 291h3v1h-3zM337 118h5v1h-5zM447 686h1v1h-1zM436 689h5v1h-5zM498 695h5v1h-5zM458 703h2v1h-2zM595 500h3v1h-3zM28 624h4v2h-4zM687 195h2v2h-2zM464 638h2v1h-2zM737 228h1v2h-1zM714 165h3v3h-3zM596 579h1v1h-1zM623 195h2v1h-2zM275 697h1v1h-1zM328 747h4v1h-4zM356 217h1v2h-1zM531 117h3v1h-3zM239 84h4v2h-4zM595 726h4v2h-4zM348 636h5v2h-5zM105 214h3v3h-3zM91 708h5v2h-5zM812 508h2v2h-2zM47 162h2v2h-2zM554 112h1v1h-1zM386 331h3v1h-3zM199 580h2v1h-2zM784 769h4v2h-4zM394 108h4v1h-4zM572 659h2v3h-2zM147 260h1v1h-1zM713 330h4v2h-4zM538 560h3v1h-3zM509 293h5v1h-5zM91 180h2v3h-2zM124 420h4v3h-4zM152 100h5v1h-5zM361 496h3v3h-3zM339 734h2v2h-2zM162 621h2v3h-2zM241 85h1v2h-1zM140 488h1v2h-1zM5 124h2v1h-2zM543 210h2v2h-2zM203 148h3v3h-3zM677 219h2v2h-2zM499 54h1v2h-1zM135 85h4v1h-4zM708 523h3v2h-3zM97 231h1v3h-1zM375 600h5v1h-5zM342 727h2v2h-2zM356 775h5v2h-5zM747 120h5v1h-5zM735 430h3v2h-3zM580 376h1v1h-1zM192 519h2v2h-2zM35 584h1v1h-1zM715 594h3v2h-3zM441 505h3v2h-3zM19 759h3v3h-3zM441 589h2v2h-2zM119 47h5v1h-5zM396 236h4v3h-4zM759 176h3v3h-3zM446 354h2v3h-2zM153 397h4v3h-4zM167 354h5v1h-5zM510 333h4v1h-4zM318 676h5v2h-5zM488 623h3v2h-3zM207 188h3v2h-3zM729 700h2v2h-2zM779 407h3v2h-3zM227 640h5v1h-5zM194 168h1v2h-1zM521 47h4v2h-4zM497 264h2v1h-2zM200 74h4v1h-4zM235 355h1v3h-1zM48 398h3v1h-3zM270 651h4v2h-4zM378 568h1v2h-1zM455 212h2v2h-2zM747 364h3v2h-3zM714 514h3v2h-3zM742 280h2v1h-2zM598 95h3v2h-3zM222 683h3v2h-3zM752 44h2v1h-2zM111 231h4v3h-4zM35 327h1v2h-1zM281 347h2v2h-2zM143 336h3v2h-3zM10 119h4v1h-4zM190 491h1v3h-1zM84 52h3v2h-3zM336 461h2v2h-2zM733 131h4v1h-4zM397 619h1v2h-1zM764 584h5v1h-5zM534 381h4v2h-4zM315 37h2v2h-2zM473 340h2v1h-2zM8 522h4v1h-4zM6 601h5v1h-5zM603 704h5v2h-5zM188 276h2v2h-2zM604 704h1v1h-1zM441 332h3v2h-3zM399 625h3v1h-3zM28 313h1v1h-1zM582 654h4v2h-4zM409 483h4v2h-4zM157 545h3v2h-3zM432 565h2v1h-2zM151 630h2v2h-2zM749 640h5v1h-5zM285 42h4v1h-4zM174 179h2v1h-2zM600 706h4v3h-4zM553 145h2v2h-2zM37 571h1v3h-1zM109 675h5v1h-5zM9 245h3v1h-3zM608 298h3v2h-3zM426 223h2v1h-2zM759 588h3v1h-3zM711 110h4v3h-4zM418 180h3v1h-3zM502 77h3v1h-3zM659 711h3v2h-3zM171 167h3v3h-3zM495 193h4v1h-4zM297 770h3v3h-3zM709 703h1v1h-1zM675 249h2v3h-2zM180 112h4v2h-4zM780 773h5v2h-5zM330 349h2v3h-2zM548 290h3v1h-3zM742 476h5v2h-5zM30 332h5v1h-5zM157 717h5v3h-5zM548 686h2v1h-2zM350 175h5v2h-5zM474 526h5v3h-5zM368 620h2v1h-2zM267 187h4v2h-4zM535 411h2v2h-2zM394 228h5v2h-5zM786 428h3v1h-3zM99 184h5v1h-5zM306 662h3v1h-3zM730 212h2v2h-2zM526 495h3v2h-3zM65 280h5v1h-5zM668 341h2v2h-2zM176 453h3v3h-3zM420 775h5v2h-5zM479 473h1v2h-1zM769 348h3v1h-3zM472 599h2v2h-2zM411 503h2v2h-2zM448 679h2v3h-2zM382 524h3v2h-3zM559 178h1v2h-1zM692 216h2v3h-2zM492 353h4v1h-4zM742 460h3v1h-3zM393 586h1v3h-1zM633 478h2v2h-2zM308 488h3v2h-3zM343 653h3v1h-3zM782 225h3v1h-3zM191 582h3v2h-3zM232 682h5v1h-5zM614 131h2v2h-2zM780 636h3v1h-3zM564 104h3v1h-3zM14 187h3v2h-3zM545 499h5v2h-5zM356 34h2v1h-2zM726 535h2v3h-2zM739 211h3v2h-3zM716 772h4v3h-4zM553 415h2v1h-2zM593 624h3v2h-3zM127 694h3v3h-3zM274 759h1v3h-1zM140 316h3v1h-3zM349 665h5v1h-5zM618 746h3v2h-3zM449 365h1v3h-1zM459 364h3v2h-3zM417 596h3v3h-3zM268 717h1v3h-1zM749 247h3v2h-3zM583 84h2v2h-2zM674 506h5v3h-5zM532 718h3v2h-3zM126 593h3v1h-3zM599 29h3v2h-3zM43 337h5v1h-5zM35 347h3v3h-3zM321 409h3v3h-3zM108 379h3v3h-3zM692 251h3v2h-3zM465 501h2v1h-2zM736 743h5v1h-5zM666 285h5v3h-5zM693 489h1v2h-1zM92 587h3v1h-3zM150 267h4v2h-4zM770 442h2v3h-2zM190 504h3v3h-3zM197 303h1v2h-1zM184 96h1v1h-1zM87 117h2v2h-2zM444 221h1v1h-1zM582 544h3v1h-3zM66 548h4v1h-4zM333 136h2v2h-2zM572 275h3v2h-3zM651 371h2v1h-2zM173 101h4v1h-4zM550 206h2v1h-2zM550 589h4v1h-4zM57 363h3v1h-3zM567 80h2v1h-2zM370 777h1v2h-1zM456 656h2v3h-2zM439 368h2v3h-2zM556 284h1v3h-1zM790 569h4v2h-4zM388 156h2v3h-2zM215 366h5v1h-5zM573 771h1v1h-1zM324 326h4v1h-4zM261 50h5v2h-5zM647 318h3v3h-3zM12 422h2v3h-2zM709 498h3v2h-3zM267 772h2v3h-2zM320 357h2v2h-2zM767 258h5v3h-5zM92 353h5v3h-5zM769 542h1v1h-1zM703 321h3v3h-3zM76 514h2v2h-2zM530 226h2v3h-2zM511 135h3v2h-3zM782 326h3v2h-3zM305 626h4v1h-4zM562 587h4v1h-4zM213 747h3v2h-3zM541 280h5v2h-5zM82 555h3v2h-3zM675 750h5v1h-5zM564 710h1v1h-1zM443 149h1v2h-1zM210 627h3v3h-3zM365 36h2v1h-2zM74 222h2v2h-2zM179 338h4v1h-4zM182 600h4v2h-4zM419 715h3v1h-3zM524 479h4v2h-4zM122 29h1v1h-1zM345 321h4v1h-4zM79 369h1v2h-1zM744 580h3v3h-3zM374 345h4v2h-4zM411 603h2v2h-2zM556 727h1v1h-1zM217 563h1v1h-1zM494 661h3v2h-3zM352 492h1v2h-1zM301 413h4v1h-4zM344 349h5v1h-5zM5 330h3v2h-3zM632 752h3v1h-3zM688 84h2v2h-2zM152 590h4v3h-4zM700 682h3v3h-3zM735 570h3v1h-3zM692 405h5v1h-5zM288 446h3v3h-3zM29 582h3v2h-3zM795 334h1v2h-1zM637 81h1v2h-1zM746 508h3v2h-3zM480 567h2v2h-2zM671 274h3v2h-3zM632 556h3v1h-3zM311 246h2v1h-2zM473 306h1v1h-1zM808 716h3v3h-3zM687 569h1v2h-1zM462 192h2v1h-2zM393 416h3v3h-3zM739 384h2v3h-2zM794 696h2v1h-2zM388 633h4v3h-4zM477 383h2v3h-2zM105 661h3v1h-3zM358 598h4v3h-4zM209 581h4v1h-4zM377 119h2v2h-2zM485 687h3v2h-3zM14 455h3v1h-3zM49 391h3v2h-3zM619 582h5v1h-5zM618 506h3v1h-3zM528 231h4v3h-4zM92 148h4v3h-4zM671 172h2v2h-2zM627 377h2v1h-2zM412 574h5v3h-5zM595 573h3v3h-3zM354 386h5v2h-5zM333 83h2v2h-2zM379 355h2v3h-2zM436 256h2v2h-2zM358 767h1v1h-1zM181 411h3v2h-3zM101 735h4v2h-4zM378 404h5v1h-5zM391 62h5v2h-5zM101 505h1v2h-1zM427 114h5v2h-5zM723 483h2v2h-2zM149 481h1v2h-1zM601 522h2v2h-2zM263 506h2v1h-2zM503 687h2v1h-2zM745 483h2v2h-2zM794 491h1v3h-1zM53 753h3v1h-3zM523 364h5v2h-5zM549 343h3v2h-3zM605 133h1v1h-1zM41 461h4v2h-4zM704 684h3v3h-3zM425 187h5v3h-5zM244 236h4v2h-4zM169 555h4v3h-4zM461 461h1v2h-1zM500 385h2v2h-2zM202 594h5v1h-5zM428 178h4v1h-4zM133 223h2v1h-2zM651 98h5v3h-5zM233 351h5v2h-5zM529 115h2v2h-2zM463 646h2v1h-2zM792 660h5v1h-5zM94 517h4v2h-4zM173 238h3v2h-3zM162 606h2v1h-2zM177 439h3v2h-3zM283 547h1v1h-1zM66 385h2v2h-2zM363 129h2v3h-2zM403 93h3v1h-3zM403 412h1v1h-1zM430 297h1v1h-1zM783 55h3v2h-3zM436 220h1v2h-1zM686 671h1v1h-1zM392 193h2v1h-2zM578 120h1v1h-1zM204 601h3v3h-3zM289 478h3v1h-3zM619 709h5v2h-5zM164 229h4v2h-4zM4 703h2v2h-2zM344 634h3v3h-3zM701 418h2v2h-2zM229 270h3v3h-3zM171 622h3v2h-3zM600 305h3v2h-3zM668 576h2v1h-2zM689 455h3v2h-3zM667 213h2v1h-2zM809 630h4v1h-4zM708 262h2v1h-2zM778 472h4v1h-4zM582 669h1v1h-1zM541 329h2v1h-2zM487 715h3v3h-3zM636 769h2v2h-2zM667 667h1v2h-1zM295 174h3v1h-3zM558 663h1v2h-1zM440 527h2v3h-2zM699 675h1v1h-1zM318 117h2v3h-2zM84 680h3v2h-3zM311 263h2v1h-2zM653 337h1v2h-1zM371 680h2v3h-2zM157 438h2v1h-2zM704 758h4v1h-4zM438 378h3v2h-3zM52 400h3v1h-3zM64 82h4v3h-4zM581 697h5v1h-5zM18 56h2v1h-2zM605 317h1v1h-1zM237 353h2v2h-2zM144 495h2v3h-2zM452 525h3v2h-3zM238 221h2v1h-2zM139 55h4v2h-4zM228 380h4v1h-4zM593 205h3v2h-3zM587 35h4v3h-4zM30 103h2v2h-2zM638 234h4v2h-4zM119 309h2v2h-2zM526 688h5v1h-5zM720 323h5v1h-5zM93 432h2v3h-2zM427 89h3v2h-3zM62 573h4v1h-4zM62 87h3v1h-3zM55 305h5v2h-5zM778 313h5v2h-5zM562 636h1v2h-1zM719 222h2v2h-2zM488 530h1v1h-1zM479 544h2v1h-2zM11 314h2v1h-2zM427 71h2v2h-2zM760 378h2v1h-2zM288 47h5v2h-5zM103 151h5v2h-5zM405 686h5v1h-5zM568 37h1v3h-1zM303 284h2v2h-2zM455 469h1v1h-1zM23 752h3v2h-3zM706 270h2v2h-2zM505 220h2v2h-2zM281 742h3v1h-3zM764 323h1v2h-1zM520 582h1v2h-1zM416 640h3v3h-3zM580 249h5v2h-5zM707 92h3v2h-3zM715 278h5v1h-5zM692 328h5v2h-5zM265 656h4v1h-4zM630 497h3v3h-3zM666 432h2v1h-2zM76 513h5v3h-5zM718 154h2v2h-2zM385 515h2v3h-2zM426 169h2v2h-2zM20 582h3v2h-3zM203 525h1v2h-1zM622 249h1v3h-1zM448 411h2v2h-2zM667 322h3v3h-3zM665 120h3v1h-3zM720 100h3v2h-3zM58 428h5v1h-5zM718 152h2v1h-2zM653 371h3v2h-3zM390 441h3v1h-3zM222 422h1v2h-1zM74 617h2v3h-2zM561 735h3v2h-3zM145 141h2v2h-2zM5 485h3v1h-3zM265 643h2v1h-2zM169 533h1v1h-1zM635 771h3v2h-3zM214 447h5v2h-5zM643 405h3v2h-3zM810 359h1v3h-1zM157 181h2v3h-2zM655 777h1v1h-1zM71 92h3v3h-3zM789 553h5v1h-5zM668 30h3v2h-3zM225 394h3v3h-3zM675 364h5v3h-5zM243 409h4v3h-4zM281 719h1v1h-1zM712 365h5v2h-5zM404 398h3v1h-3zM394 757h3v2h-3zM598 91h3v2h-3zM230 43h2v3h-2zM157 684h3v1h-3zM236 372h2v2h-2zM600 296h2v1h-2zM677 447h3v1h-3zM503 236h2v1h-2zM519 100h1v1h-1zM167 526h1v2h-1zM240 599h3v3h-3zM549 97h3v2h-3zM630 555h5v2h-5zM466 447h2v2h-2zM469 223h3v1h-3zM456 254h3v3h-3zM501 722h5v1h-5zM488 92h1v1h-1zM518 175h2v3h-2zM155 104h1v3h-1zM807 511h1v1h-1zM53 321h2v2h-2zM153 207h4v3h-4zM803 51h4v3h-4zM408 340h3v3h-3zM707 44h1v3h-1zM709 741h2v1h-2zM442 521h3v1h-3zM221 779h5v2h-5zM773 768h4v1h-4zM629 357h2v2h-2zM677 292h3v1h-3zM179 173h3v3h-3zM579 756h2v1h-2zM117 559h5v2h-5zM375 557h1v3h-1zM608 593h2v2h-2zM189 728h5v2h-5zM543 290h5v1h-5zM126 626h2v1h-2zM418 137h2v1h-2zM404 506h2v2h-2zM118 760h5v2h-5zM391 230h5v2h-5zM598 750h4v1h-4zM745 698h4v2h-4zM616 229h3v2h-3zM705 408h5v1h-5zM98 753h1v1h-1zM179 769h2v1h-2zM138 198h3v1h-3zM271 351h1v2h-1zM707 608h3v1h-3zM198 437h3v3h-3zM302 750h3v2h-3zM448 252h2v2h-2zM331 361h1v2h-1zM402 744h2v1h-2zM45 644h2v1h-2zM343 698h3v3h-3zM730 719h4v2h-4zM772 755h5v3h-5zM651 609h4v3h-4zM671 723h4v3h-4zM646 166h2v2h-2zM52 386h3v1h-3zM650 211h1v2h-1zM271 161h1v1h-1zM345 205h3v1h-3zM641 652h2v2h-2zM801 619h1v2h-1zM430 686h2v1h-2zM525 286h1v2h-1zM768 620h4v2h-4zM170 348h4v2h-4zM275 223h2v2h-2zM446 510h3v1h-3zM17 324h1v2h-1zM612 571h4v3h-4zM414 404h2v2h-2zM439 571h2v1h-2zM661 233h5v2h-5zM578 231h4v1h-4zM179 205h5v1h-5zM423 736h3v2h-3zM341 35h2v2h-2zM693 702h1v1h-1zM226 728h3v2h-3zM274 498h2v2h-2zM804 654h2v1h-2zM420 212h3v1h-3zM676 252h1v2h-1zM370 328h2v3h-2zM293 48h2v2h-2zM310 533h3v2h-3zM69 209h1v2h-1zM578 90h2v2h-2zM126 119h3v3h-3zM588 444h2v1h-2zM7 192h4v3h-4zM457 323h2v2h-2zM129 278h4v3h-4zM641 444h5v1h-5zM507 138h4v2h-4zM791 377h1v3h-1zM735 379h2v1h-2zM473 362h3v2h-3zM461 281h3v1h-3zM758 382h2v2h-2zM5 92h2v2h-2zM82 319h2v2h-2zM112 170h2v2h-2zM666 25h5v2h-5zM127 434h4v3h-4zM290 81h4v1h-4zM116 471h3v1h-3zM463 295h5v1h-5zM388 624h2v1h-2zM502 420h2v3h-2zM134 673h3v2h-3zM97 461h2v2h-2zM180 31h4v1h-4zM681 369h5v3h-5zM271 66h5v1h-5zM208 662h2v1h-2zM422 767h4v2h-4zM802 657h2v2h-2zM78 398h4v2h-4zM499 723h1v2h-1zM263 570h2v3h-2zM431 184h5v1h-5zM189 393h5v3h-5zM608 206h2v2h-2zM383 143h3v1h-3zM293 220h5v1h-5zM779 500h2v2h-2zM638 319h5v1h-5zM452 327h1v2h-1zM89 601h1v1h-1zM580 722h1v1h-1zM590 353h2v1h-2zM195 119h3v1h-3zM449 730h2v2h-2zM29 484h2v1h-2zM812 602h5v3h-5zM526 334h5v1h-5zM194 231h2v2h-2zM447 701h3v2h-3zM109 251h3v2h-3zM570 586h3v1h-3zM365 429h3v3h-3zM802 371h1v1h-1zM289 144h2v3h-2zM49 254h3v1h-3zM608 156h2v3h-2zM646 518h2v2h-2zM117 693h4v3h-4zM668 358h4v1h-4zM555 405h1v1h-1zM258 766h2v1h-2zM179 157h3v2h-3zM719 546h5v1h-5zM149 332h1v2h-1zM780 364h2v3h-2zM673 479h2v1h-2zM256 284h5v2h-5zM669 757h2v2h-2zM283 305h4v1h-4zM690 599h3v1h-3zM398 48h3v2h-3zM389 384h1v2h-1zM381 181h1v2h-1zM623 504h3v3h-3zM320 158h4v1h-4zM392 172h3v2h-3zM450 491h2v1h-2zM348 683h5v2h-5zM129 754h4v1h-4zM651 295h4v1h-4zM710 528h2v2h-2zM217 705h2v2h-2zM171 528h4v2h-4zM300 383h3v1h-3zM138 237h4v2h-4zM337 129h2v2h-2zM651 579h2v2h-2zM230 733h2v2h-2zM382 64h3v3h-3zM324 142h2v3h-2zM559 304h4v2h-4zM475 739h5v3h-5zM171 657h2v1h-2zM331 509h2v1h-2zM267 443h4v2h-4zM24 657h2v2h-2zM131 198h3v2h-3zM413 442h2v3h-2zM551 515h1v1h-1zM249 636h5v3h-5zM726 720h3v1h-3zM142 470h3v2h-3zM486 230h3v3h-3zM452 216h2v1h-2zM415 71h1v2h-1zM73 299h1v2h-1zM287 330h2v1h-2zM342 603h4v2h-4zM188 172h3v2h-3zM125 112h2v1h-2zM291 246h4v2h-4zM777 643h4v1h-4zM91 763h2v2h-2zM235 388h1v2h-1zM430 68h3v2h-3zM757 738h2v3h-2zM324 448h3v3h-3zM415 746h4v2h-4zM341 389h2v2h-2zM243 697h3v2h-3zM628 618h3v3h-3zM46 195h3v2h-3zM374 248h2v1h-2zM325 486h3v1h-3zM520 231h3v2h-3zM227 610h1v2h-1zM398 73h3v2h-3zM160 594h1v1h-1zM794 387h3v1h-3zM659 319h3v1h-3zM737 715h4v2h-4zM506 65h5v3h-5zM697 195h3v2h-3zM205 620h3v1h-3zM35 555h3v2h-3zM144 751h3v1h-3zM446 41h3v3h-3zM50 638h4v1h-4zM109 650h1v2h-1zM792 128h2v1h-2zM384 540h5v3h-5zM5 529h1v3h-1zM740 339h4v2h-4zM248 268h4v3h-4zM573 35h4v1h-4zM395 253h2v1h-2zM277 58h3v1h-3zM618 249h3v2h-3zM234 772h3v1h-3zM166 415h2v1h-2zM683 355h2v1h-2zM617 487h2v2h-2zM74 184h2v2h-2zM292 583h2v3h-2zM264 241h2v2h-2zM564 570h3v1h-3zM755 90h4v1h-4zM354 707h3v2h-3zM475 445h3v2h-3zM511 531h1v1h-1zM200 94h3v2h-3zM28 575h3v1h-3zM332 729h3v1h-3zM35 636h5v2h-5zM115 323h2v2h-2zM672 535h3v1h-3zM379 584h3v2h-3zM436 210h3v1h-3zM192 474h3v2h-3zM612 726h4v2h-4zM696 130h3v3h-3zM182 229h3v1h-3zM617 49h3v2h-3zM688 327h2v2h-2zM291 452h3v2h-3zM752 548h2v2h-2zM505 351h4v2h-4zM558 650h2v1h-2zM386 551h1v3h-1zM329 657h2v1h-2zM302 748h2v1h-2zM538 110h2v1h-2zM182 149h3v2h-3zM111 374h2v3h-2zM251 306h5v1h-5zM682 309h1v2h-1zM478 170h3v2h-3zM718 104h2v2h-2zM570 238h3v2h-3zM611 529h3v1h-3zM373 28h5v3h-5zM371 773h3v1h-3zM158 499h2v1h-2zM810 227h3v1h-3zM99 470h1v1h-1zM691 747h2v2h-2zM31 517h3v1h-3zM801 740h2v3h-2zM391 148h1v2h-1zM84 701h2v1h-2zM751 224h3v3h-3zM438 454h4v3h-4zM516 105h3v1h-3zM760 54h3v1h-3zM188 381h3v1h-3zM470 375h1v2h-1zM531 279h1v3h-1zM481 313h1v2h-1zM342 590h2v2h-2zM107 355h1v2h-1zM681 57h4v1h-4zM602 152h3v2h-3zM286 574h5v1h-5zM664 228h5v3h-5zM102 683h2v1h-2zM145 86h4v1h-4zM773 535h4v2h-4zM528 745h5v2h-5zM526 276h3v3h-3zM480 32h3v2h-3zM399 318h3v3h-3zM571 345h4v3h-4zM682 280h2v2h-2zM221 203h3v1h-3zM806 351h2v2h-2zM732 634h2v2h-2zM200 40h3v1h-3zM316 758h3v1h-3zM787 269h2v3h-2zM677 154h3v1h-3zM321 209h5v2h-5zM172 504h3v2h-3zM247 771h2v3h-2zM353 402h2v2h-2zM789 160h3v1h-3zM389 28h4v2h-4zM684 607h3v3h-3zM140 380h3v2h-3zM220 729h4v1h-4zM780 632h2v1h-2zM436 224h5v2h-5zM760 269h4v1h-4zM534 265h2v2h-2zM342 714h2v1h-2zM457 773h3v2h-3zM277 119h3v3h-3zM597 424h5v2h-5zM179 301h4v1h-4zM764 778h4v2h-4zM260 49h2v1h-2zM559 214h2v2h-2zM386 315h2v3h-2zM319 296h4v2h-4zM126 557h4v1h-4zM557 620h3v2h-3zM309 547h3v3h-3zM543 280h5v1h-5zM715 129h1v1h-1zM544 173h4v1h-4zM153 87h1v2h-1zM609 534h2v1h-2zM267 618h3v1h-3zM470 207h2v3h-2zM658 349h1v2h-1zM361 225h5v2h-5zM3 574h1v3h-1zM419 677h3v3h-3zM619 620h4v1h-4zM325 447h3v2h-3zM54 419h4v1h-4zM132 618h3v2h-3zM778 453h3v3h-3zM382 697h1v2h-1zM275 129h3v1h-3zM515 122h1v2h-1zM395 764h1v2h-1zM789 577h3v1h-3zM325 313h3v1h-3zM597 408h5v1h-5zM61 722h2v2h-2zM249 478h2v1h-2zM553 391h3v1h-3zM160 589h3v3h-3z"/></g></g><g filter="url(#bl)"><rect x="100" y="234.2" width="16" height="1.6" fill="#1c1088"/><rect x="116" y="234.1" width="9" height="1.6" fill="#261480"/><rect x="127" y="234.1" width="6" height="1.6" fill="#1c1088"/><rect x="135" y="234.0" width="18" height="1.6" fill="#120a60"/><rect x="155" y="233.9" width="13" height="1.6" fill="#120a60"/><rect x="170" y="233.9" width="7" height="1.6" fill="#261480"/><rect x="177" y="233.9" width="11" height="1.6" fill="#1c1088"/><rect x="188" y="233.8" width="8" height="1.6" fill="#22148c"/><rect x="196" y="233.8" width="6" height="1.6" fill="#22148c"/><rect x="203" y="233.7" width="10" height="1.6" fill="#261480"/><rect x="228" y="233.6" width="10" height="1.6" fill="#261480"/><rect x="239" y="233.6" width="17" height="1.6" fill="#261480"/><rect x="258" y="233.5" width="9" height="1.6" fill="#1c1088"/><rect x="267" y="233.5" width="15" height="1.6" fill="#160c70"/><rect x="284" y="233.4" width="12" height="1.6" fill="#120a60"/><rect x="297" y="233.4" width="13" height="1.6" fill="#22148c"/><rect x="333" y="233.2" width="16" height="1.6" fill="#160c70"/><rect x="354" y="233.1" width="6" height="1.6" fill="#120a60"/><rect x="360" y="233.1" width="9" height="1.6" fill="#160c70"/><rect x="374" y="233.0" width="13" height="1.6" fill="#22148c"/><rect x="389" y="233.0" width="17" height="1.6" fill="#160c70"/><rect x="420" y="232.9" width="12" height="1.6" fill="#120a60"/><rect x="437" y="232.8" width="12" height="1.6" fill="#120a60"/><rect x="449" y="232.7" width="19" height="1.6" fill="#160c70"/><rect x="469" y="232.6" width="15" height="1.6" fill="#160c70"/><rect x="485" y="232.6" width="17" height="1.6" fill="#120a60"/><rect x="502" y="232.5" width="17" height="1.6" fill="#1c1088"/><rect x="521" y="232.4" width="14" height="1.6" fill="#1c1088"/><rect x="535" y="232.4" width="8" height="1.6" fill="#261480"/><rect x="543" y="232.3" width="20" height="1.6" fill="#120a60"/><rect x="563" y="232.3" width="17" height="1.6" fill="#22148c"/><rect x="580" y="232.2" width="19" height="1.6" fill="#22148c"/><rect x="600" y="232.1" width="16" height="1.6" fill="#22148c"/><rect x="646" y="231.9" width="16" height="1.6" fill="#22148c"/><rect x="663" y="231.8" width="18" height="1.6" fill="#261480"/><rect x="682" y="231.8" width="8" height="1.6" fill="#1c1088"/><rect x="690" y="231.7" width="20" height="1.6" fill="#160c70"/><rect x="711" y="231.7" width="17" height="1.6" fill="#120a60"/><rect x="733" y="231.6" width="20" height="1.6" fill="#261480"/><rect x="754" y="231.5" width="12" height="1.6" fill="#160c70"/><rect x="768" y="231.4" width="13" height="1.6" fill="#22148c"/><rect x="782" y="231.4" width="13" height="1.6" fill="#1c1088"/><rect x="797" y="231.3" width="13" height="1.6" fill="#1c1088"/><rect x="735" y="231.5" width="34" height="2" fill="#5a28b0"/></g><defs><linearGradient id="sg1" x1="0" y1="0" x2="0" y2="1"><stop offset="0" stop-color="#30187a"/><stop offset="0.3" stop-color="#7a2a98"/><stop offset="0.6" stop-color="#30188a"/><stop offset="1" stop-color="#20187a"/></linearGradient><linearGradient id="sg2" x1="0" y1="0" x2="0" y2="1"><stop offset="0" stop-color="#10105a"/><stop offset="0.35" stop-color="#18187a"/><stop offset="0.45" stop-color="#7a2a98"/><stop offset="0.55" stop-color="#e06a70"/><stop offset="0.68" stop-color="#b04880"/><stop offset="0.8" stop-color="#18187a"/><stop offset="1" stop-color="#10105a"/></linearGradient><linearGradient id="sg3" x1="0" y1="0" x2="0" y2="1"><stop offset="0" stop-color="#10105a"/><stop offset="0.5" stop-color="#18187a"/><stop offset="1" stop-color="#10105a"/></linearGradient><linearGradient id="sg4" x1="0" y1="0" x2="0" y2="1"><stop offset="0" stop-color="#10105a"/><stop offset="0.2" stop-color="#18187a"/><stop offset="0.4" stop-color="#4a2290"/><stop offset="0.6" stop-color="#18187a"/><stop offset="1" stop-color="#10105a"/></linearGradient><linearGradient id="sg5" x1="0" y1="0" x2="0" y2="1"><stop offset="0" stop-color="#10105a"/><stop offset="0.5" stop-color="#18187a"/><stop offset="1" stop-color="#10105a"/></linearGradient><linearGradient id="sg6" x1="0" y1="0" x2="0" y2="1"><stop offset="0" stop-color="#10105a"/><stop offset="0.5" stop-color="#18187a"/><stop offset="1" stop-color="#10105a"/></linearGradient><linearGradient id="sg7" x1="0" y1="0" x2="0" y2="1"><stop offset="0" stop-color="#10105a"/><stop offset="0.3" stop-color="#5a2490"/><stop offset="0.6" stop-color="#7a2a98"/><stop offset="1" stop-color="#10105a"/></linearGradient><linearGradient id="sg8" x1="0" y1="0" x2="0" y2="1"><stop offset="0" stop-color="#10105a"/><stop offset="0.2" stop-color="#18187a"/><stop offset="0.3" stop-color="#7a2a98"/><stop offset="0.45" stop-color="#b04490"/><stop offset="0.6" stop-color="#4a2290"/><stop offset="0.75" stop-color="#18187a"/><stop offset="1" stop-color="#10105a"/></linearGradient><linearGradient id="sg9" x1="0" y1="0" x2="0" y2="1"><stop offset="0" stop-color="#10105a"/><stop offset="0.5" stop-color="#18187a"/><stop offset="1" stop-color="#10105a"/></linearGradient><linearGradient id="sg10" x1="0" y1="0" x2="0" y2="1"><stop offset="0" stop-color="#10105a"/><stop offset="0.3" stop-color="#7a2a98"/><stop offset="0.42" stop-color="#e06a90"/><stop offset="0.6" stop-color="#7a2a98"/><stop offset="1" stop-color="#10105a"/></linearGradient></defs><g filter="url(#bl)"><rect x="74" y="228" width="5" height="4" fill="#7a2a9a"/><rect x="93" y="214" width="2" height="22" fill="url(#sg1)"/><rect x="133" y="203" width="2" height="72" fill="url(#sg2)"/><rect x="218" y="216" width="2" height="28" fill="url(#sg3)"/><rect x="337" y="222" width="2" height="57" fill="url(#sg4)"/><rect x="357" y="168" width="2" height="34" fill="url(#sg5)"/><rect x="469" y="194" width="2" height="62" fill="url(#sg6)"/><rect x="574" y="207" width="2" height="35" fill="url(#sg7)"/><rect x="664" y="211" width="2" height="114" fill="url(#sg8)"/><rect x="722" y="225" width="2" height="20" fill="url(#sg9)"/><rect x="767" y="221" width="2" height="27" fill="url(#sg10)"/></g><g filter="url(#bl2)"><rect x="444" y="232" width="8" height="2" fill="#24106a"/><rect x="440" y="237" width="14" height="2" fill="#1c0c5c"/><rect x="446" y="242" width="10" height="2" fill="#1c0c5c"/><rect x="452" y="231" width="14" height="3" fill="#3c1478"/><rect x="454" y="236" width="12" height="3" fill="#4a1680"/><rect x="456" y="240" width="10" height="3" fill="#3c1478"/><rect x="458" y="244" width="8" height="3" fill="#4a1680"/><defs><linearGradient id="tl" x1="0" x2="1" y1="0" y2="0"><stop offset="0" stop-color="#f08a28"/><stop offset="0.5" stop-color="#c04a58"/><stop offset="1" stop-color="#5a1c90" stop-opacity="0.6"/></linearGradient></defs><rect x="455" y="220" width="44" height="8" rx="3" fill="#c05040"/><rect x="457" y="221" width="40" height="6" rx="2" fill="#f8a020"/><rect x="459" y="221" width="36" height="5" fill="#ffcc30"/><rect x="476" y="222" width="16" height="4" fill="#fff0b8"/><path d="M495 222L511 226L511 228L495 227Z" fill="url(#tl)"/><rect x="459" y="230" width="11" height="5" fill="#b84050"/><rect x="466" y="230" width="30" height="5" fill="#ffcc30"/><rect x="472" y="231" width="18" height="3" fill="#fff0c0"/><path d="M494 230L502 231L501 234L494 235Z" fill="url(#tl)"/><rect x="465" y="235" width="5" height="12" fill="#b04060"/><rect x="469" y="235" width="17" height="11" fill="#ffcc30"/><rect x="471" y="239" width="12" height="6" fill="#fff4c8"/><path d="M485 241L499 243L498 245L485 246Z" fill="url(#tl)"/></g><g filter="url(#bl2)" opacity="0.8"><rect x="474" y="223" width="1" height="1" fill="#301000"/><rect x="479" y="223" width="1" height="1" fill="#301000"/><rect x="486" y="224" width="1" height="1" fill="#301000"/><rect x="472" y="236" width="1" height="1" fill="#301000"/><rect x="477" y="238" width="1" height="1" fill="#301000"/><rect x="482" y="241" width="1" height="1" fill="#301000"/><rect x="476" y="243" width="1" height="1" fill="#301000"/><rect x="480" y="232" width="1" height="1" fill="#301000"/></g><rect x="97" y="760" width="1" height="20" fill="#fff"/><rect x="211" y="760" width="1" height="20" fill="#fff"/><rect x="326" y="760" width="1" height="20" fill="#fff"/><rect x="440" y="760" width="1" height="20" fill="#fff"/><rect x="549" y="760" width="1" height="20" fill="#fff"/><rect x="664" y="760" width="1" height="20" fill="#fff"/><rect x="769" y="760" width="1" height="20" fill="#fff"/><defs><linearGradient id="cb" x1="0" x2="1" y1="0" y2="0"><stop offset="0" stop-color="#070707"/><stop offset="0.21" stop-color="#070707"/><stop offset="0.25" stop-color="#03032a"/><stop offset="0.354" stop-color="#0a0a80"/><stop offset="0.455" stop-color="#5a0a80"/><stop offset="0.535" stop-color="#901070"/><stop offset="0.616" stop-color="#b04848"/><stop offset="0.677" stop-color="#e07a20"/><stop offset="0.737" stop-color="#ffa000"/><stop offset="0.818" stop-color="#ffd000"/><stop offset="0.86" stop-color="#ffe000"/><stop offset="0.9" stop-color="#fff080"/><stop offset="0.93" stop-color="#fff"/><stop offset="1" stop-color="#fff"/></linearGradient></defs><rect x="3" y="48" width="103" height="46" fill="#000"/><rect x="5" y="53" width="99" height="15" fill="url(#cb)"/><rect x="5" y="69" width="99" height="23" fill="#fff"/><rect x="5" y="68" width="99" height="1" fill="#000"/><path fill="#000" d="M8 68h1v5h-1zM12 68h1v5h-1zM17 68h1v5h-1zM21 68h1v5h-1zM26 68h1v8h-1zM30 68h1v5h-1zM35 68h1v5h-1zM39 68h1v5h-1zM44 68h1v5h-1zM48 68h1v11h-1zM52 68h1v5h-1zM57 68h1v5h-1zM61 68h1v5h-1zM66 68h1v5h-1zM70 68h1v8h-1zM75 68h1v5h-1zM79 68h1v5h-1zM84 68h1v5h-1zM88 68h1v5h-1zM92 68h1v11h-1zM97 68h1v5h-1zM101 68h1v5h-1z"/><rect x="3" y="3" width="311" height="45" fill="#fff"/><path fill="#000" d="M818 3h8v1h-8zM818 11h8v1h-8zM818 19h11v1h-11zM818 27h8v1h-8zM818 35h8v1h-8zM818 42h8v1h-8zM818 50h8v1h-8zM818 58h8v1h-8zM818 66h8v1h-8zM818 74h8v1h-8zM818 81h8v1h-8zM818 89h8v1h-8zM818 97h26v1h-26zM818 105h8v1h-8zM818 113h8v1h-8zM818 120h8v1h-8zM818 128h8v1h-8zM818 136h8v1h-8zM818 144h8v1h-8zM818 152h8v1h-8zM818 159h8v1h-8zM818 167h8v1h-8zM818 175h11v1h-11zM818 183h8v1h-8zM818 191h8v1h-8zM818 198h8v1h-8zM818 206h8v1h-8zM818 214h8v1h-8zM818 222h8v1h-8zM818 230h8v1h-8zM818 237h8v1h-8zM818 245h8v1h-8zM818 253h26v1h-26zM818 261h8v1h-8zM818 269h8v1h-8zM818 276h8v1h-8zM818 284h8v1h-8zM818 292h8v1h-8zM818 300h8v1h-8zM818 308h8v1h-8zM818 315h8v1h-8zM818 323h8v1h-8zM818 331h11v1h-11zM818 339h8v1h-8zM818 347h8v1h-8zM818 354h8v1h-8zM818 362h8v1h-8zM818 370h8v1h-8zM818 378h8v1h-8zM818 386h8v1h-8zM818 393h8v1h-8zM818 401h8v1h-8zM818 409h26v1h-26zM818 417h8v1h-8zM818 425h8v1h-8zM818 432h8v1h-8zM818 440h8v1h-8zM818 448h8v1h-8zM818 456h8v1h-8zM818 464h8v1h-8zM818 471h8v1h-8zM818 479h8v1h-8zM818 487h11v1h-11zM818 495h8v1h-8zM818 503h8v1h-8zM818 510h8v1h-8zM818 518h8v1h-8zM818 526h8v1h-8zM818 534h8v1h-8zM818 542h8v1h-8zM818 549h8v1h-8zM818 557h8v1h-8zM818 565h26v1h-26zM818 573h8v1h-8zM818 581h8v1h-8zM818 588h8v1h-8zM818 596h8v1h-8zM818 604h8v1h-8zM818 612h8v1h-8zM818 620h8v1h-8zM818 627h8v1h-8zM818 635h8v1h-8zM818 643h11v1h-11zM818 651h8v1h-8zM818 659h8v1h-8zM818 666h8v1h-8zM818 674h8v1h-8zM818 682h8v1h-8zM818 690h8v1h-8zM818 698h8v1h-8zM818 705h8v1h-8zM818 713h8v1h-8zM818 721h26v1h-26zM818 729h8v1h-8zM818 737h8v1h-8zM818 744h8v1h-8zM818 752h8v1h-8zM818 760h8v1h-8zM818 768h8v1h-8zM818 776h8v1h-8z"/><path d="M823 9.5L839.5 17.5M839.5 14V773.5L825 781.5" fill="none" stroke="#10109a" stroke-width="1"/><rect x="860" y="1" width="80" height="781" fill="#515151"/><rect x="860" y="1" width="80" height="12" fill="#000"/><rect x="860" y="778" width="80" height="4" fill="#000"/><path fill="#000" d="M860 21h19v2h-19zM860 23h5v1h-5zM860 24h7v1h-7zM860 25h15v1h-15zM860 26h6v1h-6zM860 27h14v1h-14zM860 28h13v1h-13zM860 29h8v2h-8zM860 31h12v1h-12zM860 34h13v1h-13zM860 35h10v1h-10zM860 36h15v1h-15zM860 37h7v1h-7zM860 38h10v1h-10zM860 39h13v1h-13zM860 40h12v1h-12zM860 41h10v1h-10zM860 42h11v2h-11zM860 44h11v1h-11zM860 45h5v2h-5zM860 49h10v1h-10zM860 50h10v2h-10zM860 52h7v1h-7zM860 53h10v1h-10zM860 55h7v1h-7zM860 56h6v2h-6zM860 58h9v1h-9zM860 59h8v2h-8zM860 61h12v1h-12zM860 62h9v1h-9zM860 63h9v2h-9zM860 67h9v1h-9zM860 68h11v1h-11zM860 69h11v1h-11zM860 70h13v1h-13zM860 71h6v1h-6zM860 74h3v1h-3zM860 75h10v1h-10zM860 76h11v1h-11zM860 77h7v2h-7zM860 79h10v1h-10zM860 80h10v1h-10zM860 81h7v1h-7zM860 82h11v2h-11zM860 84h8v2h-8zM860 86h13v1h-13zM860 87h12v2h-12zM860 89h12v2h-12zM860 94h12v2h-12zM860 96h12v1h-12zM860 97h10v2h-10zM860 99h9v1h-9zM860 101h12v1h-12zM860 102h7v2h-7zM860 104h3v2h-3zM860 106h13v2h-13zM860 108h5v1h-5zM860 110h9v2h-9zM860 112h14v2h-14zM860 114h10v1h-10zM860 116h18v1h-18zM860 117h14v1h-14zM860 118h4v1h-4zM860 119h11v1h-11zM860 126h5v1h-5zM860 127h11v2h-11zM860 129h9v1h-9zM860 130h8v2h-8zM860 132h7v2h-7zM860 134h12v1h-12zM860 136h4v1h-4zM860 137h10v1h-10zM860 138h9v1h-9zM860 139h5v1h-5zM860 140h9v1h-9zM860 141h18v1h-18zM860 142h4v1h-4zM860 143h5v2h-5zM860 145h5v1h-5zM860 146h14v1h-14zM860 147h12v2h-12zM860 149h8v1h-8zM860 150h4v2h-4zM860 152h6v1h-6zM860 153h14v2h-14zM860 157h7v2h-7zM860 159h10v1h-10zM860 160h8v2h-8zM860 162h8v2h-8zM860 164h10v1h-10zM860 165h6v2h-6zM860 167h8v2h-8zM860 170h8v2h-8zM860 172h8v2h-8zM860 174h19v2h-19zM860 176h1v1h-1zM860 177h13v2h-13zM860 180h4v2h-4zM860 182h13v1h-13zM860 183h6v1h-6zM860 184h10v1h-10zM860 185h10v2h-10zM860 188h10v1h-10zM860 189h7v1h-7zM860 192h14v2h-14zM860 194h9v2h-9zM860 198h8v1h-8zM860 199h6v2h-6zM860 201h11v1h-11zM860 202h10v1h-10zM860 203h6v2h-6zM860 205h11v1h-11zM860 206h14v2h-14zM860 208h6v1h-6zM860 209h8v1h-8zM860 210h7v2h-7zM860 212h8v1h-8zM860 213h16v1h-16zM860 214h10v2h-10zM860 216h6v1h-6zM860 217h11v1h-11zM860 218h8v1h-8zM860 219h6v1h-6zM860 220h3v1h-3zM860 223h13v1h-13zM860 224h11v1h-11zM860 225h12v1h-12zM860 226h8v1h-8zM860 227h7v1h-7zM860 228h13v1h-13zM860 229h17v1h-17zM860 230h6v2h-6zM860 232h11v1h-11zM860 233h13v1h-13zM860 234h13v2h-13zM860 236h13v1h-13zM860 237h9v1h-9zM860 238h6v1h-6zM860 239h8v2h-8zM860 241h6v2h-6zM860 243h7v1h-7zM860 244h7v1h-7zM860 245h12v1h-12zM860 246h9v1h-9zM860 247h4v1h-4zM860 248h10v1h-10zM860 249h12v1h-12zM860 250h12v1h-12zM860 251h5v2h-5zM860 254h3v1h-3zM860 255h9v1h-9zM860 256h8v2h-8zM860 258h4v2h-4zM860 260h14v2h-14zM860 263h12v1h-12zM860 264h5v1h-5zM860 265h6v1h-6zM860 266h11v1h-11zM860 267h5v1h-5zM860 268h8v2h-8zM860 270h6v2h-6zM860 276h16v1h-16zM860 277h10v1h-10zM860 278h7v2h-7zM860 280h14v1h-14zM860 281h8v1h-8zM860 282h5v2h-5zM860 284h4v1h-4zM860 285h7v1h-7zM860 286h5v1h-5zM860 287h12v1h-12zM860 288h11v1h-11zM860 289h11v2h-11zM860 291h8v1h-8zM860 292h5v1h-5zM860 297h7v1h-7zM860 299h5v1h-5zM860 300h11v2h-11zM860 304h8v1h-8zM860 306h14v2h-14zM860 310h14v1h-14zM860 311h16v1h-16zM860 312h2v1h-2zM860 314h6v2h-6zM860 316h7v1h-7zM860 317h10v2h-10zM860 319h10v2h-10zM860 321h14v1h-14zM860 323h10v2h-10zM860 325h6v1h-6zM860 326h11v1h-11zM860 328h4v1h-4zM860 329h8v1h-8zM860 330h3v1h-3zM860 331h5v2h-5zM860 335h9v1h-9zM860 339h9v2h-9zM860 341h19v1h-19zM860 342h10v1h-10zM860 343h7v1h-7zM860 344h10v2h-10zM860 346h10v2h-10zM860 348h8v1h-8zM860 349h12v2h-12zM860 351h8v1h-8zM860 352h7v1h-7zM860 353h10v2h-10zM860 355h9v2h-9zM860 357h11v2h-11zM860 359h11v2h-11zM860 361h5v2h-5zM860 363h8v2h-8zM860 365h6v1h-6zM860 366h8v1h-8zM860 367h17v1h-17zM860 368h16v2h-16zM860 370h9v1h-9zM860 373h6v2h-6zM860 375h8v2h-8zM860 377h5v2h-5zM860 380h12v1h-12zM860 381h11v1h-11zM860 382h13v2h-13zM860 384h9v1h-9zM860 388h7v1h-7zM860 389h10v1h-10zM860 390h9v2h-9zM860 392h7v2h-7zM860 395h8v1h-8zM860 396h8v2h-8zM860 398h8v1h-8zM860 399h14v2h-14zM860 401h12v2h-12zM860 405h9v1h-9zM860 406h15v1h-15zM860 407h13v1h-13zM860 410h8v1h-8zM860 411h5v2h-5zM860 413h11v2h-11zM860 417h9v1h-9zM860 418h8v2h-8zM860 420h7v2h-7zM860 422h7v2h-7zM860 424h19v1h-19zM860 425h8v1h-8zM860 426h6v1h-6zM860 427h5v1h-5zM860 428h13v1h-13zM860 429h7v1h-7zM860 431h14v2h-14zM860 435h8v1h-8zM860 436h11v1h-11zM860 437h10v1h-10zM860 438h10v1h-10zM860 440h9v2h-9zM860 443h11v1h-11zM860 444h8v1h-8zM860 447h7v1h-7zM860 448h12v1h-12zM860 449h16v1h-16zM860 450h2v1h-2zM860 451h8v2h-8zM860 453h11v2h-11zM860 455h9v1h-9zM860 456h10v1h-10zM860 459h6v1h-6zM860 460h6v1h-6zM860 461h7v2h-7zM860 463h5v2h-5zM860 465h5v1h-5zM860 468h8v1h-8zM860 472h15v1h-15zM860 473h3v1h-3zM860 474h13v1h-13zM860 475h7v1h-7zM860 476h14v1h-14zM860 477h5v1h-5zM860 478h12v2h-12zM860 480h7v1h-7zM860 481h6v1h-6zM860 482h11v1h-11zM860 483h4v2h-4zM860 485h4v1h-4zM860 488h3v1h-3zM860 489h10v2h-10zM860 491h13v1h-13zM860 492h15v2h-15zM860 494h10v1h-10zM860 497h6v1h-6zM860 498h13v1h-13zM860 499h11v2h-11zM860 501h5v2h-5zM860 505h12v1h-12zM860 506h10v2h-10zM860 508h1v2h-1zM860 510h11v1h-11zM860 511h15v1h-15zM860 512h1v2h-1zM860 514h12v1h-12zM860 515h5v2h-5zM860 517h11v1h-11zM860 518h9v1h-9zM860 521h7v1h-7zM860 522h13v1h-13zM860 523h12v1h-12zM860 524h9v1h-9zM860 525h12v2h-12zM860 527h6v2h-6zM860 529h10v1h-10zM860 530h14v2h-14zM860 534h16v2h-16zM860 536h18v1h-18zM860 537h8v2h-8zM860 539h13v2h-13zM860 541h14v2h-14zM860 543h14v2h-14zM860 545h7v2h-7zM860 547h4v1h-4zM860 548h6v2h-6zM860 550h13v2h-13zM860 552h11v1h-11zM860 553h7v1h-7zM860 555h10v1h-10zM860 556h6v1h-6zM860 557h8v1h-8zM860 558h10v2h-10zM860 560h9v2h-9zM860 562h12v2h-12zM860 564h7v1h-7zM860 565h10v2h-10zM860 567h5v1h-5zM860 569h12v1h-12zM860 570h11v1h-11zM860 571h14v2h-14zM860 575h7v1h-7zM860 576h9v2h-9zM860 578h7v2h-7zM860 580h14v1h-14zM860 581h10v1h-10zM860 582h18v1h-18zM860 584h9v2h-9zM860 586h9v1h-9zM860 587h10v2h-10zM860 589h14v1h-14zM860 593h5v1h-5zM860 594h7v2h-7zM860 596h12v1h-12zM860 597h9v1h-9zM860 598h7v1h-7zM860 601h14v2h-14zM860 603h9v1h-9zM860 604h8v2h-8zM860 606h12v2h-12zM860 608h3v1h-3zM860 609h11v2h-11zM860 611h10v2h-10zM860 613h7v2h-7zM860 615h12v1h-12zM860 616h13v2h-13zM860 618h13v1h-13zM860 619h8v1h-8zM860 622h13v2h-13zM860 624h11v1h-11zM860 625h8v1h-8zM860 626h8v2h-8zM860 628h5v2h-5zM860 630h9v1h-9zM860 631h9v1h-9zM860 632h8v1h-8zM860 633h11v1h-11zM860 634h18v1h-18zM860 635h13v1h-13zM860 636h9v2h-9zM860 640h6v2h-6zM860 642h7v1h-7zM860 643h11v1h-11zM860 644h6v1h-6zM860 645h10v1h-10zM860 646h16v2h-16zM860 648h15v2h-15zM860 652h10v1h-10zM860 653h9v1h-9zM860 654h10v1h-10zM860 655h11v1h-11zM860 656h11v2h-11zM860 658h8v2h-8zM860 660h8v2h-8zM860 662h14v2h-14zM860 664h6v1h-6zM860 667h11v2h-11zM860 669h5v1h-5zM860 670h11v1h-11zM860 671h4v2h-4zM860 673h4v1h-4zM860 674h9v1h-9zM860 678h12v1h-12zM860 679h14v1h-14zM860 680h11v1h-11zM860 681h4v2h-4zM860 683h16v2h-16zM860 685h6v2h-6zM860 687h9v1h-9zM860 690h8v2h-8zM860 692h2v1h-2zM860 693h9v1h-9zM860 694h12v1h-12zM860 695h4v1h-4zM860 696h6v1h-6zM860 697h5v2h-5zM860 699h8v2h-8zM860 701h10v2h-10zM860 704h18v2h-18zM860 706h11v2h-11zM860 709h2v2h-2zM860 711h10v2h-10zM860 713h8v1h-8zM860 714h9v1h-9zM860 715h8v2h-8zM860 717h12v2h-12zM860 719h6v1h-6zM860 720h6v1h-6zM860 721h15v2h-15zM860 725h12v1h-12zM860 726h4v1h-4zM860 730h8v1h-8zM860 731h7v1h-7zM860 733h15v2h-15zM860 735h8v2h-8zM860 737h10v1h-10zM860 738h10v1h-10zM860 739h2v2h-2zM860 741h8v2h-8zM860 743h5v1h-5zM860 746h5v1h-5zM860 749h5v1h-5zM860 750h15v1h-15zM860 751h6v1h-6zM860 752h13v1h-13zM860 753h4v2h-4zM860 755h13v1h-13zM860 756h12v2h-12zM860 758h5v1h-5zM860 759h19v1h-19zM860 762h9v1h-9zM860 763h4v1h-4zM860 765h11v1h-11zM860 766h8v1h-8zM860 768h11v1h-11zM860 769h9v1h-9zM860 770h9v1h-9zM860 773h8v1h-8zM860 774h9v2h-9zM860 776h10v1h-10z"/><path fill="#0a0a48" d="M860 48h17v1h-17zM860 54h19v1h-19zM860 122h22v2h-22zM860 169h20v1h-20zM860 322h23v1h-23zM860 336h25v2h-25zM860 387h21v1h-21zM860 434h16v1h-16zM860 445h22v2h-22zM860 471h15v1h-15zM860 727h17v1h-17z"/><path fill="#0a0a50" d="M860 36h24v2h-24zM860 210h18v2h-18zM860 232h18v2h-18zM860 239h20v2h-20zM860 298h22v3h-22zM860 643h23v2h-23zM860 361h22v1h-22zM860 414h20v2h-20z"/><path fill="#0a0a70" d="M860 137H872L889 141L876 143L886 146L874 148L885 151L872 153L880 156H860Z"/><path fill="#1414a0" d="M860 139H870L880 141L868 143L878 147L866 150L874 152H860Z" opacity="0.7"/><rect x="860" y="19" width="80" height="1" fill="#8c8c8c"/><rect x="860" y="97" width="80" height="1" fill="#8c8c8c"/><rect x="860" y="175" width="80" height="1" fill="#8c8c8c"/><rect x="860" y="253" width="80" height="1" fill="#8c8c8c"/><rect x="860" y="331" width="80" height="1" fill="#8c8c8c"/><rect x="860" y="409" width="80" height="1" fill="#8c8c8c"/><rect x="860" y="487" width="80" height="1" fill="#8c8c8c"/><rect x="860" y="565" width="80" height="1" fill="#8c8c8c"/><rect x="860" y="643" width="80" height="1" fill="#8c8c8c"/><rect x="860" y="721" width="80" height="1" fill="#8c8c8c"/><polyline points="860.5,2.0 860.5,19.0 866.0,26.0 871.0,33.0 870.0,40.0 869.1,42.0 871.5,45.0 871.3,47.0 868.5,51.0 868.5,54.0 871.4,57.0 870.0,60.0 870.8,63.0 868.3,67.0 869.1,70.0 871.1,72.0 868.5,76.0 870.8,80.0 869.1,83.0 869.0,87.0 869.3,89.0 871.5,92.0 869.0,94.0 870.3,96.0 868.8,100.0 868.9,104.0 870.1,107.0 869.4,109.0 871.4,113.0 868.3,116.0 869.3,120.0 869.9,123.0 869.0,126.0 870.8,128.0 869.0,132.0 871.4,135.0 870.3,139.0 869.7,143.0 868.9,145.0 870.8,147.0 871.0,151.0 869.0,155.0 870.4,159.0 871.6,162.0 870.2,166.0 868.3,170.0 869.6,172.0 870.9,174.0 869.7,178.0 870.9,181.0 871.2,184.0 871.6,186.0 871.1,188.0 870.1,190.0 868.4,193.0 869.2,197.0 871.6,199.0 870.6,203.0 869.2,207.0 870.7,209.0 869.7,212.0 870.4,216.0 871.6,218.0 870.8,219.5 876.4,221.1 890.7,222.6 892.8,224.7 888.7,226.7 876.4,227.7 882.5,230.8 891.7,231.3 898.9,232.8 884.6,235.4 892.8,236.9 888.7,241.0 893.8,244.6 873.3,247.1 872.3,254.3 871.2,257.0 870.5,260.0 872.1,263.0 869.9,265.0 872.1,269.0 870.3,272.0 871.5,276.0 869.0,278.0 869.5,280.0 868.7,282.0 869.8,286.0 869.8,289.0 872.3,291.0 868.9,295.0 868.8,297.0 871.2,301.0 870.1,305.0 871.7,309.0 871.2,311.0 870.7,315.0 869.4,319.0 871.6,323.0 870.2,327.0 870.5,329.0 870.6,333.0 870.1,336.0 870.4,340.0 869.9,343.0 869.1,346.0 871.1,348.0 869.0,350.0 869.3,353.0 871.7,356.0 870.7,360.0 869.3,364.0 869.1,367.0 871.1,370.0 871.4,373.0 871.9,375.0 872.1,379.0 871.8,381.0 870.2,383.0 872.0,385.0 868.8,389.0 870.9,392.0 869.8,395.0 869.3,399.0 870.4,403.0 869.6,407.0 870.3,411.0 871.7,414.0 871.1,418.0 870.8,420.0 871.0,424.0 869.8,427.0 869.9,431.0 871.6,435.0 870.9,437.0 870.8,441.0 872.1,445.0 869.8,447.0 871.8,449.0 869.0,452.0 870.5,455.0 871.1,459.0 868.9,463.0 870.7,466.0 871.0,469.0 870.4,473.0 870.8,476.0 870.9,478.0 870.3,482.0 871.8,485.0 869.4,488.0 871.0,490.0 871.2,492.0 869.5,494.0 870.2,497.0 869.8,501.0 868.7,504.0 870.6,506.0 870.9,508.0 868.8,512.0 872.2,516.0 869.1,518.0 870.6,522.0 872.1,526.0 872.0,530.0 871.0,532.0 869.0,536.0 869.3,538.0 871.5,541.0 870.1,543.0 868.7,547.0 870.4,551.0 870.1,553.0 870.2,557.0 872.1,559.0 870.6,563.0 870.3,565.0 871.0,568.0 870.7,571.0 870.6,574.0 871.4,578.0 871.7,580.0 868.9,582.0 869.3,584.0 871.1,588.0 870.6,592.0 869.2,594.0 868.9,597.0 870.1,601.0 869.1,603.0 869.7,607.0 872.0,609.0 869.3,613.0 870.0,616.0 871.2,620.0 869.5,622.0 869.3,626.0 869.2,630.0 869.3,632.0 870.6,634.0 870.7,638.0 871.4,642.0 871.3,645.0 871.8,648.0 871.1,651.0 870.6,654.0 869.8,657.0 871.8,661.0 870.1,664.0 871.4,668.0 870.1,670.0 870.3,674.0 871.8,678.0 869.0,680.0 870.9,682.0 872.2,685.0 871.1,688.0 869.9,690.0 871.4,693.0 870.1,695.0 871.8,698.0 871.7,700.0 871.1,703.0 871.0,707.0 870.5,710.0 871.9,714.0 871.0,717.0 871.8,719.0 871.1,722.0 870.5,725.0 870.2,727.0 869.9,729.0 870.1,733.0 870.6,737.0 869.0,740.0 871.5,743.0 868.7,749.4 873.3,754.0 868.7,756.7 870.5,764.0 867.8,768.6 863.2,774.0 860.5,778.0" fill="none" stroke="#c83030" stroke-width="1.3" stroke-opacity="0.85"/><path fill="#d03030" d="M899 231l3 1.5l-3 1.5z"/><circle cx="873.5" cy="46" r="2.8" fill="#200000" stroke="#c03030" stroke-width="1"/><polyline points="861.0,12.0 871.0,18.0 882.0,25.0 884.0,31.0 886.0,37.0 883.6,40.0 884.5,42.0 882.4,43.0 886.3,45.0 883.2,47.0 881.5,48.0 886.2,49.0 885.0,52.0 886.5,54.0 885.5,55.0 886.1,57.0 884.8,60.0 885.2,63.0 886.5,64.0 885.1,66.0 882.3,68.0 886.1,70.0 887.4,71.0 886.9,72.0 885.3,74.0 881.9,76.0 884.4,78.0 882.4,81.0 884.1,83.0 884.9,85.0 887.1,87.0 881.9,89.0 883.7,91.0 887.1,93.0 882.9,94.0 886.4,95.0 882.6,96.0 881.6,97.0 887.2,98.0 885.2,100.0 882.5,103.0 887.4,104.0 885.6,107.0 885.7,109.0 884.2,112.0 886.2,114.0 884.2,115.0 886.5,118.0 885.9,121.0 887.2,123.0 885.6,124.0 882.4,127.0 882.7,128.0 882.9,130.0 886.4,133.0 887.4,134.0 885.7,137.0 886.0,140.0 885.3,142.0 882.0,144.0 882.3,146.0 883.9,148.0 881.7,150.0 882.2,151.0 885.8,154.0 884.8,156.0 881.7,159.0 886.8,160.0 886.7,162.0 885.2,163.0 886.9,164.0 886.1,166.0 884.9,168.0 887.3,171.0 882.9,172.0 882.8,173.0 886.0,175.0 885.7,176.0 884.6,178.0 886.5,180.0 883.0,183.0 887.3,185.0 885.3,187.0 886.1,188.0 886.7,189.0 884.5,190.0 883.5,192.0 882.0,193.0 884.6,195.0 888.7,197.0 881.5,200.6 885.6,205.2 882.5,208.3 890.7,210.3 886.6,213.4 892.8,216.5 903.0,220.0 916.3,222.1 936.7,223.1 938.8,225.2 919.3,226.2 909.0,228.2 921.4,229.8 938.8,232.3 939.8,233.9 926.5,234.9 919.3,235.7 938.8,236.9 939.8,240.0 931.6,241.5 937.8,243.6 923.4,245.1 904.0,247.7 903.0,252.3 896.9,258.4 893.8,263.5 887.7,268.6 891.7,271.7 888.7,274.8 884.9,277.0 886.9,278.0 885.3,280.0 886.8,283.0 882.1,284.0 881.6,287.0 881.9,288.0 881.9,291.0 883.6,292.0 881.8,294.0 882.1,295.0 885.3,298.0 882.9,301.0 882.7,304.0 885.3,307.0 887.4,309.0 882.9,312.0 885.8,313.0 881.6,315.0 887.2,317.0 882.3,320.0 884.2,323.0 881.5,325.0 881.7,328.0 886.3,331.0 887.0,333.0 883.7,334.0 886.1,335.0 882.6,336.0 887.5,338.0 887.1,341.0 885.6,343.0 885.9,345.0 885.8,348.0 884.6,351.0 883.3,354.0 882.6,357.0 887.1,360.0 884.8,361.0 884.9,362.0 882.1,364.0 884.0,366.0 883.7,367.0 882.5,368.0 884.9,370.0 884.3,371.0 885.9,373.0 882.5,374.0 883.2,377.0 881.7,379.0 885.3,381.0 887.0,383.0 886.6,384.0 885.2,385.0 887.3,387.0 881.6,388.0 884.7,391.0 882.0,392.0 886.6,394.0 886.1,397.0 886.4,399.0 886.7,401.0 884.5,404.0 882.2,405.0 885.1,406.0 884.3,407.0 884.5,409.0 886.0,412.0 882.9,415.0 882.5,417.0 886.3,418.0 882.3,420.0 884.4,423.0 887.0,426.0 883.4,429.0 886.8,430.0 882.5,431.0 881.7,433.0 883.9,434.0 887.4,435.0 882.9,437.0 886.1,439.0 887.0,441.0 886.5,443.0 883.4,445.0 886.8,446.0 887.0,448.0 883.6,451.0 884.9,453.0 884.2,456.0 887.4,457.0 886.2,460.0 884.4,462.0 885.3,463.0 882.1,464.0 881.8,465.0 886.4,466.0 881.6,467.0 885.6,470.0 882.6,473.0 886.6,475.0 886.2,476.0 883.6,478.0 881.8,480.0 884.8,481.0 881.6,484.0 882.5,486.0 887.1,488.0 886.5,489.0 885.2,491.0 882.2,492.0 885.7,494.0 885.6,495.0 885.0,496.0 885.4,498.0 884.1,500.0 885.5,502.0 883.8,503.0 882.6,505.0 887.5,508.0 886.1,509.0 884.4,511.0 882.3,512.0 884.1,515.0 885.7,517.0 885.5,520.0 882.7,521.0 885.3,522.0 882.5,525.0 883.9,526.0 884.3,527.0 885.2,528.0 887.2,530.0 882.0,531.0 886.7,534.0 881.7,535.0 885.2,536.0 887.3,539.0 886.0,540.0 883.2,543.0 882.5,545.0 887.0,547.0 882.0,549.0 886.7,550.0 882.9,552.0 886.4,553.0 881.9,554.0 882.6,556.0 881.7,558.0 885.8,561.0 882.7,562.0 882.6,563.0 881.8,565.0 886.9,566.0 884.7,567.0 882.1,568.0 885.7,570.0 884.4,572.0 885.8,574.0 885.5,575.0 884.9,578.0 886.3,579.0 885.5,581.0 885.1,583.0 881.7,585.0 883.3,587.0 883.4,588.0 883.4,590.0 883.2,593.0 885.3,595.0 882.7,596.0 886.4,598.0 883.9,600.0 885.9,602.0 882.0,604.0 883.0,605.0 882.9,607.0 883.2,609.0 885.7,611.0 885.3,613.0 884.7,616.0 883.5,619.0 885.8,620.0 887.1,621.0 886.9,623.0 887.4,626.0 883.4,628.0 884.2,629.0 885.1,630.0 886.7,632.0 884.2,635.0 885.6,636.0 886.5,638.0 884.4,639.0 887.4,641.0 885.9,642.0 883.1,644.0 881.8,646.0 881.9,647.0 883.8,649.0 886.7,651.0 886.7,652.0 884.4,653.0 885.4,655.0 887.0,658.0 881.6,659.0 882.0,660.0 884.2,661.0 885.0,663.0 885.2,664.0 886.9,665.0 884.7,666.0 882.8,667.0 885.2,669.0 886.8,672.0 881.6,675.0 882.0,677.0 882.1,678.0 887.2,680.0 884.8,682.0 883.1,683.0 882.2,685.0 885.5,687.0 886.9,690.0 883.1,692.0 882.0,694.0 886.1,696.0 885.2,697.0 885.6,700.0 884.6,701.0 884.3,704.0 886.0,706.0 885.0,709.0 882.5,712.0 887.2,713.0 882.4,714.0 886.0,717.0 886.1,718.0 884.9,719.0 887.3,722.0 881.7,723.0 884.0,725.0 882.5,727.0 882.7,729.0 882.5,731.0 882.6,732.0 883.8,734.0 883.5,736.0 884.5,738.0 887.1,740.0 885.0,743.0 888.0,747.0 882.4,752.0 886.0,757.0 881.5,760.0 885.0,766.0 879.7,769.5 873.0,775.0 868.7,780.0 867.0,782.0" fill="none" stroke="#40ff40" stroke-width="1.1"/><path d="M935 782L939.5 777" stroke="#40ff40" stroke-width="1.1" fill="none"/></svg><div class="ab mono" style="left:4px;top:5px;font-size:11.75px;line-height:14px;color:#000;-webkit-text-stroke:0.1px #000;">Screen Capture Time: 2025-11-06 03:58:27 UTC
143048017 Hz
Config = V8</div><div class="ab sans" style="left:5px;top:80px;font-size:11px;line-height:13px;color:#000;">-80 dB -60</div><div class="ab sans" style="left:84px;top:80px;font-size:11px;line-height:13px;color:#000;">-40</div><div class="ab sans" style="left:84px;top:779px;font-size:11px;line-height:12px;color:#fff;transform:rotate(-90deg);transform-origin:0 0;">2025-11-06 03:57:20</div><div class="ab sans" style="left:198px;top:779px;font-size:11px;line-height:12px;color:#fff;transform:rotate(-90deg);transform-origin:0 0;">2025-11-06 03:57:30</div><div class="ab sans" style="left:313px;top:779px;font-size:11px;line-height:12px;color:#fff;transform:rotate(-90deg);transform-origin:0 0;">2025-11-06 03:57:40</div><div class="ab sans" style="left:427px;top:779px;font-size:11px;line-height:12px;color:#fff;transform:rotate(-90deg);transform-origin:0 0;">2025-11-06 03:57:50</div><div class="ab sans" style="left:536px;top:779px;font-size:11px;line-height:12px;color:#fff;transform:rotate(-90deg);transform-origin:0 0;">2025-11-06 03:58:00</div><div class="ab sans" style="left:651px;top:779px;font-size:11px;line-height:12px;color:#fff;transform:rotate(-90deg);transform-origin:0 0;">2025-11-06 03:58:10</div><div class="ab sans" style="left:756px;top:779px;font-size:11px;line-height:12px;color:#fff;transform:rotate(-90deg);transform-origin:0 0;">2025-11-06 03:58:20</div><div class="ab mono" style="left:858px;top:65.5px;font-size:11.67px;line-height:12px;color:#555;transform:rotate(90deg);transform-origin:0 0;">143050400</div><div class="ab mono" style="left:858px;top:221.5px;font-size:11.67px;line-height:12px;color:#555;transform:rotate(90deg);transform-origin:0 0;">143050200</div><div class="ab mono" style="left:858px;top:377.5px;font-size:11.67px;line-height:12px;color:#555;transform:rotate(90deg);transform-origin:0 0;">143050000</div><div class="ab mono" style="left:858px;top:533.5px;font-size:11.67px;line-height:12px;color:#555;transform:rotate(90deg);transform-origin:0 0;">143049800</div><div class="ab mono" style="left:858px;top:679.0px;font-size:11.67px;line-height:12px;color:#555;transform:rotate(90deg);transform-origin:0 0;">143049600 Hz</div></body></html>
